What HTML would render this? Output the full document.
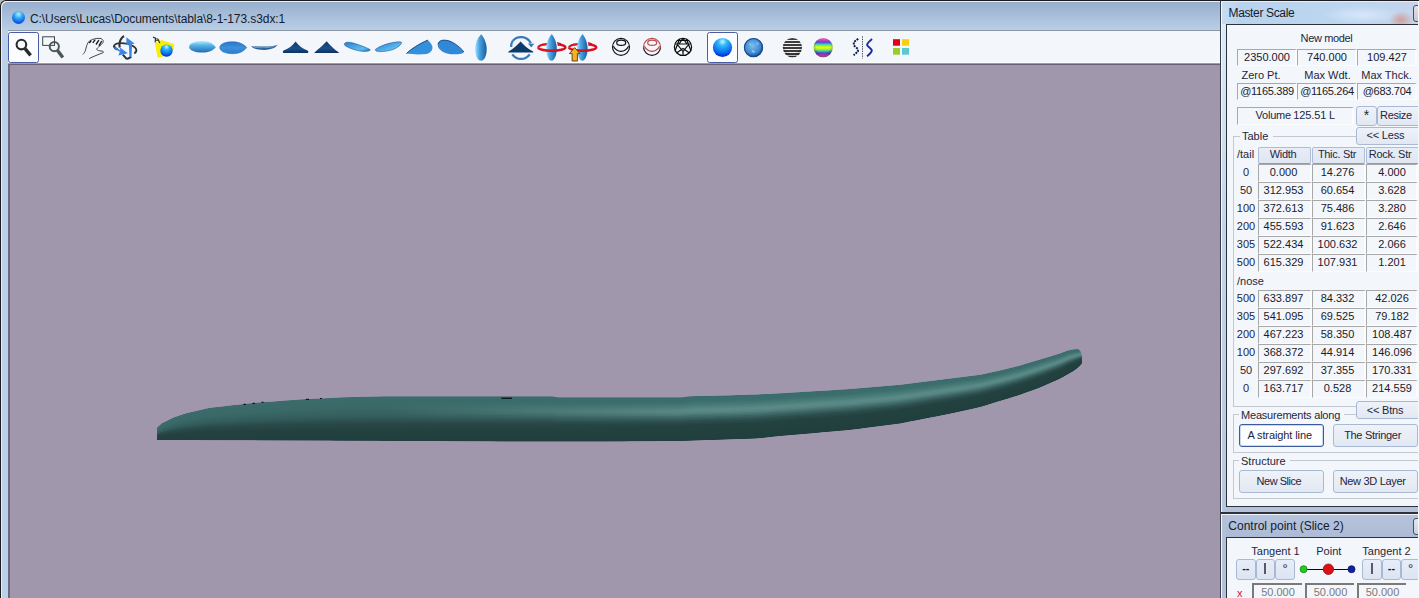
<!DOCTYPE html>
<html><head><meta charset="utf-8">
<style>
html,body{margin:0;padding:0;}
body{width:1419px;height:598px;overflow:hidden;position:relative;background:#bad1e9;font-family:"Liberation Sans",sans-serif;}
.t{position:absolute;white-space:pre;font-family:"Liberation Sans",sans-serif;}
</style></head><body>
<div style="position:absolute;left:6px;top:0px;width:1413px;height:1px;background:#1c1c1c"></div>
<div style="position:absolute;left:0px;top:6px;width:1px;height:592px;background:#1c1c1c"></div>
<div style="position:absolute;left:6px;top:1px;width:1215px;height:1px;background:#e9f0f8"></div>
<div style="position:absolute;left:1px;top:6px;width:1px;height:592px;background:#e9f0f8"></div>
<div style="position:absolute;left:2px;top:30px;width:7px;height:568px;background:#bad1e9"></div>
<div style="position:absolute;left:8px;top:30px;width:1212px;height:1px;background:#8c96a2"></div>
<div style="position:absolute;left:8px;top:31px;width:1212px;height:32px;background:#f3f6fb"></div>
<div style="position:absolute;left:8px;top:62px;width:1212px;height:1px;background:#fbfdff"></div>
<div style="position:absolute;left:8px;top:63px;width:1212px;height:1px;background:#9c9ca6"></div>
<div style="position:absolute;left:8px;top:64px;width:1212px;height:1px;background:#666272"></div>
<div style="position:absolute;left:8px;top:65px;width:2px;height:533px;background:#6e6a7a"></div>
<div style="position:absolute;left:10px;top:65px;width:1210px;height:533px;background:#a097ad"></div>
<div style="position:absolute;left:0px;top:0px;width:8px;height:8px;background:#bdbdbd"></div>
<div style="position:absolute;left:2px;top:2px;width:1218px;height:28px;background:linear-gradient(#97afcd,#b9cee7);border-top-left-radius:5px"></div>
<div style="position:absolute;left:0px;top:0px;width:14px;height:14px;border-top-left-radius:6px;border-top:1px solid #1c1c1c;border-left:1px solid #1c1c1c;box-sizing:border-box;box-shadow:inset 1px 1px 0 #e9f0f8"></div>
<div style="position:absolute;left:12px;top:11px;width:13px;height:13px;border-radius:50%;background:radial-gradient(circle at 50% 25%,#b8f0ff 0,#2ea8f5 35%,#0a52e6 75%,#0630b0 100%)"></div>
<div class="t" style="left:30.0px;top:13.0px;font-size:12px;line-height:12px;color:#141c2a;letter-spacing:-0.08px;">C:\Users\Lucas\Documents\tabla\8-1-173.s3dx:1</div>
<div style="position:absolute;left:1220px;top:1px;width:1px;height:597px;background:#3a3f4a"></div>
<div style="position:absolute;left:1221px;top:1px;width:198px;height:1px;background:#e6eef8"></div>
<div style="position:absolute;left:1221px;top:2px;width:1px;height:596px;background:#f4f8fc"></div>
<div style="position:absolute;left:1222px;top:2px;width:197px;height:22px;background:radial-gradient(ellipse 12px 9px at 179px 18px,rgba(214,150,140,0.85),rgba(214,150,140,0) 100%),radial-gradient(ellipse 40px 9px at 140px 13px,rgba(225,240,255,0.7),rgba(225,240,255,0) 100%),linear-gradient(90deg,#c8dcf2 0,#b9d3ee 10%,#bcd6f0 60%,#c4d4ec 100%)"></div>
<div style="position:absolute;left:1222px;top:24px;width:4px;height:489px;background:linear-gradient(#dcebf8 0,#c4d6ec 40%,#b6c6de 100%)"></div>
<div style="position:absolute;left:1226px;top:506px;width:193px;height:6px;background:#b4c2dc"></div>
<div style="position:absolute;left:1221px;top:512px;width:198px;height:2px;background:#2e323c"></div>
<div style="position:absolute;left:1221px;top:514px;width:198px;height:1px;background:#f0f4fa"></div>
<div style="position:absolute;left:1413px;top:5px;width:12px;height:15px;border:1px solid #4a505a;border-radius:3px;background:linear-gradient(#e6e0ea,#d0c4d0)"></div>
<div class="t" style="left:1228.5px;top:6.6px;font-size:12px;line-height:12px;color:#141c2a;letter-spacing:-0.35px;">Master Scale</div>
<div style="position:absolute;left:1226px;top:24px;width:193px;height:483px;background:#f3f6fb;border-top:1px solid #2c3038;border-left:1px solid #2c3038;border-bottom:1px solid #2c3038;box-sizing:border-box"></div>
<div style="position:absolute;left:1418px;top:25px;width:1px;height:481px;background:#fbfcfe"></div>
<div class="t" style="left:1286.5px;top:32.7px;width:80px;text-align:center;font-size:11px;line-height:11px;color:#1e2640;letter-spacing:-0.35px;">New model</div>
<div style="position:absolute;left:1237px;top:49px;width:60px;height:17px;background:#f3f6fb;border-top:1px solid #a8a8a8;border-left:1px solid #a8a8a8;border-right:2px solid #fbfcfe;border-bottom:1px solid #fbfcfe;box-sizing:border-box"></div>
<div class="t" style="left:1234.0px;top:51.7px;width:66px;text-align:center;font-size:11px;line-height:11px;color:#1a1a2a;letter-spacing:0px;">2350.000</div>
<div style="position:absolute;left:1297px;top:49px;width:60px;height:17px;background:#f3f6fb;border-top:1px solid #a8a8a8;border-left:1px solid #a8a8a8;border-right:2px solid #fbfcfe;border-bottom:1px solid #fbfcfe;box-sizing:border-box"></div>
<div class="t" style="left:1294.0px;top:51.7px;width:66px;text-align:center;font-size:11px;line-height:11px;color:#1a1a2a;letter-spacing:0px;">740.000</div>
<div style="position:absolute;left:1357px;top:49px;width:60px;height:17px;background:#f3f6fb;border-top:1px solid #a8a8a8;border-left:1px solid #a8a8a8;border-right:2px solid #fbfcfe;border-bottom:1px solid #fbfcfe;box-sizing:border-box"></div>
<div class="t" style="left:1354.0px;top:51.7px;width:66px;text-align:center;font-size:11px;line-height:11px;color:#1a1a2a;letter-spacing:0px;">109.427</div>
<div class="t" style="left:1231.0px;top:69.7px;width:60px;text-align:center;font-size:11px;line-height:11px;color:#1e2640;letter-spacing:0px;">Zero Pt.</div>
<div class="t" style="left:1297.5px;top:69.7px;width:60px;text-align:center;font-size:11px;line-height:11px;color:#1e2640;letter-spacing:0px;">Max Wdt.</div>
<div class="t" style="left:1356.5px;top:69.7px;width:60px;text-align:center;font-size:11px;line-height:11px;color:#1e2640;letter-spacing:0px;">Max Thck.</div>
<div style="position:absolute;left:1237px;top:83px;width:60px;height:17px;background:#f3f6fb;border-top:1px solid #a8a8a8;border-left:1px solid #a8a8a8;border-right:2px solid #fbfcfe;border-bottom:1px solid #fbfcfe;box-sizing:border-box"></div>
<div class="t" style="left:1234.0px;top:85.7px;width:66px;text-align:center;font-size:11px;line-height:11px;color:#1a1a2a;letter-spacing:-0.3px;">@1165.389</div>
<div style="position:absolute;left:1297px;top:83px;width:60px;height:17px;background:#f3f6fb;border-top:1px solid #a8a8a8;border-left:1px solid #a8a8a8;border-right:2px solid #fbfcfe;border-bottom:1px solid #fbfcfe;box-sizing:border-box"></div>
<div class="t" style="left:1294.0px;top:85.7px;width:66px;text-align:center;font-size:11px;line-height:11px;color:#1a1a2a;letter-spacing:-0.3px;">@1165.264</div>
<div style="position:absolute;left:1357px;top:83px;width:60px;height:17px;background:#f3f6fb;border-top:1px solid #a8a8a8;border-left:1px solid #a8a8a8;border-right:2px solid #fbfcfe;border-bottom:1px solid #fbfcfe;box-sizing:border-box"></div>
<div class="t" style="left:1354.0px;top:85.7px;width:66px;text-align:center;font-size:11px;line-height:11px;color:#1a1a2a;letter-spacing:-0.3px;">@683.704</div>
<div style="position:absolute;left:1237px;top:107px;width:117px;height:18px;background:#f3f6fb;border-top:1px solid #a8a8a8;border-left:1px solid #a8a8a8;border-right:2px solid #fbfcfe;border-bottom:1px solid #fbfcfe;box-sizing:border-box"></div>
<div class="t" style="left:1255.5px;top:109.7px;font-size:11px;line-height:11px;color:#1e2640;letter-spacing:-0.2px;">Volume</div>
<div class="t" style="left:1293.3px;top:109.7px;font-size:11px;line-height:11px;color:#1e2640;letter-spacing:-0.1px;">125.51</div>
<div class="t" style="left:1329.0px;top:109.7px;font-size:11px;line-height:11px;color:#1e2640;letter-spacing:0px;">L</div>
<div style="position:absolute;left:1356px;top:106px;width:21px;height:20px;background:linear-gradient(#eef2f9,#e2e8f2);border:1px solid #a9b9d3;border-radius:3px;box-sizing:border-box"></div>
<div class="t" style="left:1356.5px;top:108.2px;width:20px;text-align:center;font-size:14px;line-height:14px;color:#1e2640;letter-spacing:0px;">*</div>
<div style="position:absolute;left:1377px;top:106px;width:45px;height:20px;background:linear-gradient(#eef2f9,#e2e8f2);border:1px solid #a9b9d3;border-radius:3px;box-sizing:border-box"></div>
<div class="t" style="left:1380.0px;top:109.9px;font-size:11px;line-height:11px;color:#1e2640;letter-spacing:-0.3px;">Resize</div>
<div style="position:absolute;left:1356px;top:127px;width:66px;height:18px;background:linear-gradient(#eef2f9,#e2e8f2);border:1px solid #a9b9d3;border-radius:3px;box-sizing:border-box"></div>
<div class="t" style="left:1366.5px;top:129.9px;font-size:11px;line-height:11px;color:#1e2640;letter-spacing:-0.2px;">&lt;&lt; Less</div>
<div style="position:absolute;left:1233px;top:136px;width:186px;height:271px;border:1px solid #c4c8d0;border-right:none;box-sizing:border-box"></div>
<div style="position:absolute;left:1240px;top:130px;width:33px;height:12px;background:#f3f6fb"></div>
<div class="t" style="left:1242.0px;top:131.2px;font-size:11px;line-height:11px;color:#1e2640;letter-spacing:0px;">Table</div>
<div style="position:absolute;left:1356px;top:127px;width:66px;height:18px;background:#f3f6fb"></div>
<div style="position:absolute;left:1356px;top:127px;width:66px;height:18px;background:linear-gradient(#eef2f9,#e2e8f2);border:1px solid #a9b9d3;border-radius:3px;box-sizing:border-box"></div>
<div class="t" style="left:1366.5px;top:129.9px;font-size:11px;line-height:11px;color:#1e2640;letter-spacing:-0.2px;">&lt;&lt; Less</div>
<div class="t" style="left:1237.0px;top:148.7px;font-size:11px;line-height:11px;color:#1e2640;letter-spacing:0px;">/tail</div>
<div style="position:absolute;left:1258px;top:147px;width:53px;height:17px;background:linear-gradient(#e8eef8,#dfe6f2);border:1px solid #b0bcd4;border-bottom:1px solid #8d9ab4;border-radius:2px;box-sizing:border-box"></div>
<div class="t" style="left:1253.0px;top:148.7px;width:60px;text-align:center;font-size:11px;line-height:11px;color:#1e2640;letter-spacing:-0.3px;">Width</div>
<div style="position:absolute;left:1312px;top:147px;width:53px;height:17px;background:linear-gradient(#e8eef8,#dfe6f2);border:1px solid #b0bcd4;border-bottom:1px solid #8d9ab4;border-radius:2px;box-sizing:border-box"></div>
<div class="t" style="left:1307.0px;top:148.7px;width:60px;text-align:center;font-size:11px;line-height:11px;color:#1e2640;letter-spacing:-0.3px;">Thic. Str</div>
<div style="position:absolute;left:1366px;top:147px;width:56px;height:17px;background:linear-gradient(#e8eef8,#dfe6f2);border:1px solid #b0bcd4;border-bottom:1px solid #8d9ab4;border-radius:2px;box-sizing:border-box"></div>
<div class="t" style="left:1360.0px;top:148.7px;width:60px;text-align:center;font-size:11px;line-height:11px;color:#1e2640;letter-spacing:-0.3px;">Rock. Str</div>
<div class="t" style="left:1234.0px;top:166.7px;width:24px;text-align:center;font-size:11px;line-height:11px;color:#1e2640;letter-spacing:0px;">0</div>
<div style="position:absolute;left:1258px;top:164px;width:54px;height:18px;background:#f3f6fb;border-top:1px solid #a8a8a8;border-left:1px solid #a8a8a8;border-right:2px solid #fbfcfe;border-bottom:1px solid #fbfcfe;box-sizing:border-box"></div>
<div class="t" style="left:1253.5px;top:166.7px;width:60px;text-align:center;font-size:11px;line-height:11px;color:#1a1a2a;letter-spacing:0px;">0.000</div>
<div style="position:absolute;left:1312px;top:164px;width:54px;height:18px;background:#f3f6fb;border-top:1px solid #a8a8a8;border-left:1px solid #a8a8a8;border-right:2px solid #fbfcfe;border-bottom:1px solid #fbfcfe;box-sizing:border-box"></div>
<div class="t" style="left:1307.5px;top:166.7px;width:60px;text-align:center;font-size:11px;line-height:11px;color:#1a1a2a;letter-spacing:0px;">14.276</div>
<div style="position:absolute;left:1366px;top:164px;width:52px;height:18px;background:#f3f6fb;border-top:1px solid #a8a8a8;border-left:1px solid #a8a8a8;border-right:2px solid #fbfcfe;border-bottom:1px solid #fbfcfe;box-sizing:border-box"></div>
<div class="t" style="left:1362.0px;top:166.7px;width:60px;text-align:center;font-size:11px;line-height:11px;color:#1a1a2a;letter-spacing:0px;">4.000</div>
<div class="t" style="left:1234.0px;top:184.7px;width:24px;text-align:center;font-size:11px;line-height:11px;color:#1e2640;letter-spacing:0px;">50</div>
<div style="position:absolute;left:1258px;top:182px;width:54px;height:18px;background:#f3f6fb;border-top:1px solid #a8a8a8;border-left:1px solid #a8a8a8;border-right:2px solid #fbfcfe;border-bottom:1px solid #fbfcfe;box-sizing:border-box"></div>
<div class="t" style="left:1253.5px;top:184.7px;width:60px;text-align:center;font-size:11px;line-height:11px;color:#1a1a2a;letter-spacing:0px;">312.953</div>
<div style="position:absolute;left:1312px;top:182px;width:54px;height:18px;background:#f3f6fb;border-top:1px solid #a8a8a8;border-left:1px solid #a8a8a8;border-right:2px solid #fbfcfe;border-bottom:1px solid #fbfcfe;box-sizing:border-box"></div>
<div class="t" style="left:1307.5px;top:184.7px;width:60px;text-align:center;font-size:11px;line-height:11px;color:#1a1a2a;letter-spacing:0px;">60.654</div>
<div style="position:absolute;left:1366px;top:182px;width:52px;height:18px;background:#f3f6fb;border-top:1px solid #a8a8a8;border-left:1px solid #a8a8a8;border-right:2px solid #fbfcfe;border-bottom:1px solid #fbfcfe;box-sizing:border-box"></div>
<div class="t" style="left:1362.0px;top:184.7px;width:60px;text-align:center;font-size:11px;line-height:11px;color:#1a1a2a;letter-spacing:0px;">3.628</div>
<div class="t" style="left:1234.0px;top:202.7px;width:24px;text-align:center;font-size:11px;line-height:11px;color:#1e2640;letter-spacing:0px;">100</div>
<div style="position:absolute;left:1258px;top:200px;width:54px;height:18px;background:#f3f6fb;border-top:1px solid #a8a8a8;border-left:1px solid #a8a8a8;border-right:2px solid #fbfcfe;border-bottom:1px solid #fbfcfe;box-sizing:border-box"></div>
<div class="t" style="left:1253.5px;top:202.7px;width:60px;text-align:center;font-size:11px;line-height:11px;color:#1a1a2a;letter-spacing:0px;">372.613</div>
<div style="position:absolute;left:1312px;top:200px;width:54px;height:18px;background:#f3f6fb;border-top:1px solid #a8a8a8;border-left:1px solid #a8a8a8;border-right:2px solid #fbfcfe;border-bottom:1px solid #fbfcfe;box-sizing:border-box"></div>
<div class="t" style="left:1307.5px;top:202.7px;width:60px;text-align:center;font-size:11px;line-height:11px;color:#1a1a2a;letter-spacing:0px;">75.486</div>
<div style="position:absolute;left:1366px;top:200px;width:52px;height:18px;background:#f3f6fb;border-top:1px solid #a8a8a8;border-left:1px solid #a8a8a8;border-right:2px solid #fbfcfe;border-bottom:1px solid #fbfcfe;box-sizing:border-box"></div>
<div class="t" style="left:1362.0px;top:202.7px;width:60px;text-align:center;font-size:11px;line-height:11px;color:#1a1a2a;letter-spacing:0px;">3.280</div>
<div class="t" style="left:1234.0px;top:220.7px;width:24px;text-align:center;font-size:11px;line-height:11px;color:#1e2640;letter-spacing:0px;">200</div>
<div style="position:absolute;left:1258px;top:218px;width:54px;height:18px;background:#f3f6fb;border-top:1px solid #a8a8a8;border-left:1px solid #a8a8a8;border-right:2px solid #fbfcfe;border-bottom:1px solid #fbfcfe;box-sizing:border-box"></div>
<div class="t" style="left:1253.5px;top:220.7px;width:60px;text-align:center;font-size:11px;line-height:11px;color:#1a1a2a;letter-spacing:0px;">455.593</div>
<div style="position:absolute;left:1312px;top:218px;width:54px;height:18px;background:#f3f6fb;border-top:1px solid #a8a8a8;border-left:1px solid #a8a8a8;border-right:2px solid #fbfcfe;border-bottom:1px solid #fbfcfe;box-sizing:border-box"></div>
<div class="t" style="left:1307.5px;top:220.7px;width:60px;text-align:center;font-size:11px;line-height:11px;color:#1a1a2a;letter-spacing:0px;">91.623</div>
<div style="position:absolute;left:1366px;top:218px;width:52px;height:18px;background:#f3f6fb;border-top:1px solid #a8a8a8;border-left:1px solid #a8a8a8;border-right:2px solid #fbfcfe;border-bottom:1px solid #fbfcfe;box-sizing:border-box"></div>
<div class="t" style="left:1362.0px;top:220.7px;width:60px;text-align:center;font-size:11px;line-height:11px;color:#1a1a2a;letter-spacing:0px;">2.646</div>
<div class="t" style="left:1234.0px;top:238.7px;width:24px;text-align:center;font-size:11px;line-height:11px;color:#1e2640;letter-spacing:0px;">305</div>
<div style="position:absolute;left:1258px;top:236px;width:54px;height:18px;background:#f3f6fb;border-top:1px solid #a8a8a8;border-left:1px solid #a8a8a8;border-right:2px solid #fbfcfe;border-bottom:1px solid #fbfcfe;box-sizing:border-box"></div>
<div class="t" style="left:1253.5px;top:238.7px;width:60px;text-align:center;font-size:11px;line-height:11px;color:#1a1a2a;letter-spacing:0px;">522.434</div>
<div style="position:absolute;left:1312px;top:236px;width:54px;height:18px;background:#f3f6fb;border-top:1px solid #a8a8a8;border-left:1px solid #a8a8a8;border-right:2px solid #fbfcfe;border-bottom:1px solid #fbfcfe;box-sizing:border-box"></div>
<div class="t" style="left:1307.5px;top:238.7px;width:60px;text-align:center;font-size:11px;line-height:11px;color:#1a1a2a;letter-spacing:0px;">100.632</div>
<div style="position:absolute;left:1366px;top:236px;width:52px;height:18px;background:#f3f6fb;border-top:1px solid #a8a8a8;border-left:1px solid #a8a8a8;border-right:2px solid #fbfcfe;border-bottom:1px solid #fbfcfe;box-sizing:border-box"></div>
<div class="t" style="left:1362.0px;top:238.7px;width:60px;text-align:center;font-size:11px;line-height:11px;color:#1a1a2a;letter-spacing:0px;">2.066</div>
<div class="t" style="left:1234.0px;top:256.7px;width:24px;text-align:center;font-size:11px;line-height:11px;color:#1e2640;letter-spacing:0px;">500</div>
<div style="position:absolute;left:1258px;top:254px;width:54px;height:18px;background:#f3f6fb;border-top:1px solid #a8a8a8;border-left:1px solid #a8a8a8;border-right:2px solid #fbfcfe;border-bottom:1px solid #fbfcfe;box-sizing:border-box"></div>
<div class="t" style="left:1253.5px;top:256.7px;width:60px;text-align:center;font-size:11px;line-height:11px;color:#1a1a2a;letter-spacing:0px;">615.329</div>
<div style="position:absolute;left:1312px;top:254px;width:54px;height:18px;background:#f3f6fb;border-top:1px solid #a8a8a8;border-left:1px solid #a8a8a8;border-right:2px solid #fbfcfe;border-bottom:1px solid #fbfcfe;box-sizing:border-box"></div>
<div class="t" style="left:1307.5px;top:256.7px;width:60px;text-align:center;font-size:11px;line-height:11px;color:#1a1a2a;letter-spacing:0px;">107.931</div>
<div style="position:absolute;left:1366px;top:254px;width:52px;height:18px;background:#f3f6fb;border-top:1px solid #a8a8a8;border-left:1px solid #a8a8a8;border-right:2px solid #fbfcfe;border-bottom:1px solid #fbfcfe;box-sizing:border-box"></div>
<div class="t" style="left:1362.0px;top:256.7px;width:60px;text-align:center;font-size:11px;line-height:11px;color:#1a1a2a;letter-spacing:0px;">1.201</div>
<div class="t" style="left:1237.0px;top:276.0px;font-size:11px;line-height:11px;color:#1e2640;letter-spacing:0px;">/nose</div>
<div class="t" style="left:1234.0px;top:292.7px;width:24px;text-align:center;font-size:11px;line-height:11px;color:#1e2640;letter-spacing:0px;">500</div>
<div style="position:absolute;left:1258px;top:290px;width:54px;height:18px;background:#f3f6fb;border-top:1px solid #a8a8a8;border-left:1px solid #a8a8a8;border-right:2px solid #fbfcfe;border-bottom:1px solid #fbfcfe;box-sizing:border-box"></div>
<div class="t" style="left:1253.5px;top:292.7px;width:60px;text-align:center;font-size:11px;line-height:11px;color:#1a1a2a;letter-spacing:0px;">633.897</div>
<div style="position:absolute;left:1312px;top:290px;width:54px;height:18px;background:#f3f6fb;border-top:1px solid #a8a8a8;border-left:1px solid #a8a8a8;border-right:2px solid #fbfcfe;border-bottom:1px solid #fbfcfe;box-sizing:border-box"></div>
<div class="t" style="left:1307.5px;top:292.7px;width:60px;text-align:center;font-size:11px;line-height:11px;color:#1a1a2a;letter-spacing:0px;">84.332</div>
<div style="position:absolute;left:1366px;top:290px;width:52px;height:18px;background:#f3f6fb;border-top:1px solid #a8a8a8;border-left:1px solid #a8a8a8;border-right:2px solid #fbfcfe;border-bottom:1px solid #fbfcfe;box-sizing:border-box"></div>
<div class="t" style="left:1362.0px;top:292.7px;width:60px;text-align:center;font-size:11px;line-height:11px;color:#1a1a2a;letter-spacing:0px;">42.026</div>
<div class="t" style="left:1234.0px;top:310.7px;width:24px;text-align:center;font-size:11px;line-height:11px;color:#1e2640;letter-spacing:0px;">305</div>
<div style="position:absolute;left:1258px;top:308px;width:54px;height:18px;background:#f3f6fb;border-top:1px solid #a8a8a8;border-left:1px solid #a8a8a8;border-right:2px solid #fbfcfe;border-bottom:1px solid #fbfcfe;box-sizing:border-box"></div>
<div class="t" style="left:1253.5px;top:310.7px;width:60px;text-align:center;font-size:11px;line-height:11px;color:#1a1a2a;letter-spacing:0px;">541.095</div>
<div style="position:absolute;left:1312px;top:308px;width:54px;height:18px;background:#f3f6fb;border-top:1px solid #a8a8a8;border-left:1px solid #a8a8a8;border-right:2px solid #fbfcfe;border-bottom:1px solid #fbfcfe;box-sizing:border-box"></div>
<div class="t" style="left:1307.5px;top:310.7px;width:60px;text-align:center;font-size:11px;line-height:11px;color:#1a1a2a;letter-spacing:0px;">69.525</div>
<div style="position:absolute;left:1366px;top:308px;width:52px;height:18px;background:#f3f6fb;border-top:1px solid #a8a8a8;border-left:1px solid #a8a8a8;border-right:2px solid #fbfcfe;border-bottom:1px solid #fbfcfe;box-sizing:border-box"></div>
<div class="t" style="left:1362.0px;top:310.7px;width:60px;text-align:center;font-size:11px;line-height:11px;color:#1a1a2a;letter-spacing:0px;">79.182</div>
<div class="t" style="left:1234.0px;top:328.7px;width:24px;text-align:center;font-size:11px;line-height:11px;color:#1e2640;letter-spacing:0px;">200</div>
<div style="position:absolute;left:1258px;top:326px;width:54px;height:18px;background:#f3f6fb;border-top:1px solid #a8a8a8;border-left:1px solid #a8a8a8;border-right:2px solid #fbfcfe;border-bottom:1px solid #fbfcfe;box-sizing:border-box"></div>
<div class="t" style="left:1253.5px;top:328.7px;width:60px;text-align:center;font-size:11px;line-height:11px;color:#1a1a2a;letter-spacing:0px;">467.223</div>
<div style="position:absolute;left:1312px;top:326px;width:54px;height:18px;background:#f3f6fb;border-top:1px solid #a8a8a8;border-left:1px solid #a8a8a8;border-right:2px solid #fbfcfe;border-bottom:1px solid #fbfcfe;box-sizing:border-box"></div>
<div class="t" style="left:1307.5px;top:328.7px;width:60px;text-align:center;font-size:11px;line-height:11px;color:#1a1a2a;letter-spacing:0px;">58.350</div>
<div style="position:absolute;left:1366px;top:326px;width:52px;height:18px;background:#f3f6fb;border-top:1px solid #a8a8a8;border-left:1px solid #a8a8a8;border-right:2px solid #fbfcfe;border-bottom:1px solid #fbfcfe;box-sizing:border-box"></div>
<div class="t" style="left:1362.0px;top:328.7px;width:60px;text-align:center;font-size:11px;line-height:11px;color:#1a1a2a;letter-spacing:0px;">108.487</div>
<div class="t" style="left:1234.0px;top:346.7px;width:24px;text-align:center;font-size:11px;line-height:11px;color:#1e2640;letter-spacing:0px;">100</div>
<div style="position:absolute;left:1258px;top:344px;width:54px;height:18px;background:#f3f6fb;border-top:1px solid #a8a8a8;border-left:1px solid #a8a8a8;border-right:2px solid #fbfcfe;border-bottom:1px solid #fbfcfe;box-sizing:border-box"></div>
<div class="t" style="left:1253.5px;top:346.7px;width:60px;text-align:center;font-size:11px;line-height:11px;color:#1a1a2a;letter-spacing:0px;">368.372</div>
<div style="position:absolute;left:1312px;top:344px;width:54px;height:18px;background:#f3f6fb;border-top:1px solid #a8a8a8;border-left:1px solid #a8a8a8;border-right:2px solid #fbfcfe;border-bottom:1px solid #fbfcfe;box-sizing:border-box"></div>
<div class="t" style="left:1307.5px;top:346.7px;width:60px;text-align:center;font-size:11px;line-height:11px;color:#1a1a2a;letter-spacing:0px;">44.914</div>
<div style="position:absolute;left:1366px;top:344px;width:52px;height:18px;background:#f3f6fb;border-top:1px solid #a8a8a8;border-left:1px solid #a8a8a8;border-right:2px solid #fbfcfe;border-bottom:1px solid #fbfcfe;box-sizing:border-box"></div>
<div class="t" style="left:1362.0px;top:346.7px;width:60px;text-align:center;font-size:11px;line-height:11px;color:#1a1a2a;letter-spacing:0px;">146.096</div>
<div class="t" style="left:1234.0px;top:364.7px;width:24px;text-align:center;font-size:11px;line-height:11px;color:#1e2640;letter-spacing:0px;">50</div>
<div style="position:absolute;left:1258px;top:362px;width:54px;height:18px;background:#f3f6fb;border-top:1px solid #a8a8a8;border-left:1px solid #a8a8a8;border-right:2px solid #fbfcfe;border-bottom:1px solid #fbfcfe;box-sizing:border-box"></div>
<div class="t" style="left:1253.5px;top:364.7px;width:60px;text-align:center;font-size:11px;line-height:11px;color:#1a1a2a;letter-spacing:0px;">297.692</div>
<div style="position:absolute;left:1312px;top:362px;width:54px;height:18px;background:#f3f6fb;border-top:1px solid #a8a8a8;border-left:1px solid #a8a8a8;border-right:2px solid #fbfcfe;border-bottom:1px solid #fbfcfe;box-sizing:border-box"></div>
<div class="t" style="left:1307.5px;top:364.7px;width:60px;text-align:center;font-size:11px;line-height:11px;color:#1a1a2a;letter-spacing:0px;">37.355</div>
<div style="position:absolute;left:1366px;top:362px;width:52px;height:18px;background:#f3f6fb;border-top:1px solid #a8a8a8;border-left:1px solid #a8a8a8;border-right:2px solid #fbfcfe;border-bottom:1px solid #fbfcfe;box-sizing:border-box"></div>
<div class="t" style="left:1362.0px;top:364.7px;width:60px;text-align:center;font-size:11px;line-height:11px;color:#1a1a2a;letter-spacing:0px;">170.331</div>
<div class="t" style="left:1234.0px;top:382.7px;width:24px;text-align:center;font-size:11px;line-height:11px;color:#1e2640;letter-spacing:0px;">0</div>
<div style="position:absolute;left:1258px;top:380px;width:54px;height:18px;background:#f3f6fb;border-top:1px solid #a8a8a8;border-left:1px solid #a8a8a8;border-right:2px solid #fbfcfe;border-bottom:1px solid #fbfcfe;box-sizing:border-box"></div>
<div class="t" style="left:1253.5px;top:382.7px;width:60px;text-align:center;font-size:11px;line-height:11px;color:#1a1a2a;letter-spacing:0px;">163.717</div>
<div style="position:absolute;left:1312px;top:380px;width:54px;height:18px;background:#f3f6fb;border-top:1px solid #a8a8a8;border-left:1px solid #a8a8a8;border-right:2px solid #fbfcfe;border-bottom:1px solid #fbfcfe;box-sizing:border-box"></div>
<div class="t" style="left:1307.5px;top:382.7px;width:60px;text-align:center;font-size:11px;line-height:11px;color:#1a1a2a;letter-spacing:0px;">0.528</div>
<div style="position:absolute;left:1366px;top:380px;width:52px;height:18px;background:#f3f6fb;border-top:1px solid #a8a8a8;border-left:1px solid #a8a8a8;border-right:2px solid #fbfcfe;border-bottom:1px solid #fbfcfe;box-sizing:border-box"></div>
<div class="t" style="left:1362.0px;top:382.7px;width:60px;text-align:center;font-size:11px;line-height:11px;color:#1a1a2a;letter-spacing:0px;">214.559</div>
<div style="position:absolute;left:1233px;top:414px;width:186px;height:39px;border:1px solid #c4c8d0;border-right:none;box-sizing:border-box"></div>
<div style="position:absolute;left:1239px;top:408px;width:105px;height:12px;background:#f3f6fb"></div>
<div class="t" style="left:1241.0px;top:409.7px;font-size:11px;line-height:11px;color:#1e2640;letter-spacing:-0.2px;">Measurements along</div>
<div style="position:absolute;left:1356px;top:401px;width:66px;height:18px;background:linear-gradient(#eef2f9,#e2e8f2);border:1px solid #a9b9d3;border-radius:3px;box-sizing:border-box"></div>
<div class="t" style="left:1366.8px;top:404.7px;font-size:11px;line-height:11px;color:#1e2640;letter-spacing:-0.2px;">&lt;&lt; Btns</div>
<div style="position:absolute;left:1239px;top:424px;width:85px;height:23px;background:#fdfeff;border:1px solid #3c5a9c;border-radius:3px;box-sizing:border-box;box-shadow:inset 0 0 0 1px #c8d8f0"></div>
<div class="t" style="left:1234.7px;top:429.7px;width:90px;text-align:center;font-size:11px;line-height:11px;color:#1e2640;letter-spacing:-0.1px;">A straight line</div>
<div style="position:absolute;left:1333px;top:424px;width:85px;height:23px;background:linear-gradient(#eef2f9,#e2e8f2);border:1px solid #a9b9d3;border-radius:3px;box-sizing:border-box"></div>
<div class="t" style="left:1327.6px;top:429.7px;width:90px;text-align:center;font-size:11px;line-height:11px;color:#1e2640;letter-spacing:-0.3px;">The Stringer</div>
<div style="position:absolute;left:1233px;top:460px;width:186px;height:39px;border:1px solid #c4c8d0;border-right:none;box-sizing:border-box"></div>
<div style="position:absolute;left:1239px;top:454px;width:51px;height:12px;background:#f3f6fb"></div>
<div class="t" style="left:1241.0px;top:456.2px;font-size:11px;line-height:11px;color:#1e2640;letter-spacing:0px;">Structure</div>
<div style="position:absolute;left:1239px;top:470px;width:85px;height:23px;background:linear-gradient(#eef2f9,#e2e8f2);border:1px solid #a9b9d3;border-radius:3px;box-sizing:border-box"></div>
<div class="t" style="left:1233.8px;top:475.7px;width:90px;text-align:center;font-size:11px;line-height:11px;color:#1e2640;letter-spacing:-0.5px;">New Slice</div>
<div style="position:absolute;left:1333px;top:470px;width:85px;height:23px;background:linear-gradient(#eef2f9,#e2e8f2);border:1px solid #a9b9d3;border-radius:3px;box-sizing:border-box"></div>
<div class="t" style="left:1327.7px;top:475.7px;width:90px;text-align:center;font-size:11px;line-height:11px;color:#1e2640;letter-spacing:-0.3px;">New 3D Layer</div>
<div style="position:absolute;left:1222px;top:515px;width:197px;height:22px;background:linear-gradient(#b6c3dc,#aebbd6)"></div>
<div style="position:absolute;left:1222px;top:515px;width:4px;height:83px;background:#b3c0da"></div>
<div style="position:absolute;left:1413px;top:518px;width:12px;height:15px;border:1px solid #4a505a;border-radius:3px;background:linear-gradient(#e4e8f0,#c8d0e0)"></div>
<div class="t" style="left:1228.3px;top:519.6px;font-size:12px;line-height:12px;color:#141c2a;letter-spacing:0px;">Control point (Slice 2)</div>
<div style="position:absolute;left:1226px;top:537px;width:193px;height:61px;background:#f3f6fb;border-top:1px solid #2c3038;border-left:1px solid #2c3038;box-sizing:border-box"></div>
<div style="position:absolute;left:1418px;top:538px;width:1px;height:60px;background:#fbfcfe"></div>
<div class="t" style="left:1245.5px;top:545.7px;width:60px;text-align:center;font-size:11px;line-height:11px;color:#1e2640;letter-spacing:0px;">Tangent 1</div>
<div class="t" style="left:1308.8px;top:545.7px;width:40px;text-align:center;font-size:11px;line-height:11px;color:#1e2640;letter-spacing:0px;">Point</div>
<div class="t" style="left:1356.5px;top:545.7px;width:60px;text-align:center;font-size:11px;line-height:11px;color:#1e2640;letter-spacing:0px;">Tangent 2</div>
<div style="position:absolute;left:1236px;top:559px;width:19.5px;height:21px;background:linear-gradient(#e8eef8,#dce4f2);border:1px solid #a9b9d3;border-radius:3px;box-sizing:border-box"></div>
<div class="t" style="left:1235.8px;top:562.7px;width:20px;text-align:center;font-size:11px;line-height:11px;color:#1a1a2a;letter-spacing:0px;font-weight:bold">--</div>
<div style="position:absolute;left:1255.5px;top:559px;width:19.5px;height:21px;background:linear-gradient(#e8eef8,#dce4f2);border:1px solid #a9b9d3;border-radius:3px;box-sizing:border-box"></div>
<div style="position:absolute;left:1264px;top:563px;width:2px;height:11px;background:#585868"></div>
<div style="position:absolute;left:1275px;top:559px;width:20px;height:21px;background:linear-gradient(#e8eef8,#dce4f2);border:1px solid #a9b9d3;border-radius:3px;box-sizing:border-box"></div>
<div class="t" style="left:1275.0px;top:562.7px;width:20px;text-align:center;font-size:11px;line-height:11px;color:#1a1a2a;letter-spacing:0px;font-size:13px">°</div>
<div style="position:absolute;left:1362px;top:559px;width:20px;height:21px;background:linear-gradient(#e8eef8,#dce4f2);border:1px solid #a9b9d3;border-radius:3px;box-sizing:border-box"></div>
<div style="position:absolute;left:1371px;top:563px;width:2px;height:11px;background:#585868"></div>
<div style="position:absolute;left:1382px;top:559px;width:19px;height:21px;background:linear-gradient(#e8eef8,#dce4f2);border:1px solid #a9b9d3;border-radius:3px;box-sizing:border-box"></div>
<div class="t" style="left:1381.5px;top:562.7px;width:20px;text-align:center;font-size:11px;line-height:11px;color:#1a1a2a;letter-spacing:0px;font-weight:bold">--</div>
<div style="position:absolute;left:1401px;top:559px;width:19px;height:21px;background:linear-gradient(#e8eef8,#dce4f2);border:1px solid #a9b9d3;border-radius:3px;box-sizing:border-box"></div>
<div class="t" style="left:1400.5px;top:562.7px;width:20px;text-align:center;font-size:11px;line-height:11px;color:#1a1a2a;letter-spacing:0px;font-size:13px">°</div>
<svg width="60" height="16" style="position:absolute;left:1298px;top:561px">
<line x1="5.6" y1="8.5" x2="53.5" y2="8.5" stroke="#0a0a0a" stroke-width="1.1"/>
<circle cx="5.6" cy="8.2" r="3.5" fill="#22cc22" stroke="#118811" stroke-width="0.8"/>
<circle cx="30.4" cy="8.2" r="5.2" fill="#dd1111" stroke="#881111" stroke-width="0.8"/>
<circle cx="53.5" cy="8.2" r="3.5" fill="#1122aa" stroke="#0a1066" stroke-width="0.8"/>
</svg>
<div style="position:absolute;left:1252px;top:583px;width:50px;height:17px;background:#f3f6fb;border-top:2px solid #7a7a7a;border-left:2px solid #7a7a7a;box-sizing:border-box"></div>
<div class="t" style="left:1253.0px;top:586.7px;width:50px;text-align:center;font-size:11px;line-height:11px;color:#7a7a7a;letter-spacing:0px;">50.000</div>
<div style="position:absolute;left:1305px;top:583px;width:49px;height:17px;background:#f3f6fb;border-top:2px solid #7a7a7a;border-left:2px solid #7a7a7a;box-sizing:border-box"></div>
<div class="t" style="left:1305.5px;top:586.7px;width:50px;text-align:center;font-size:11px;line-height:11px;color:#7a7a7a;letter-spacing:0px;">50.000</div>
<div style="position:absolute;left:1357px;top:583px;width:49px;height:17px;background:#f3f6fb;border-top:2px solid #7a7a7a;border-left:2px solid #7a7a7a;box-sizing:border-box"></div>
<div class="t" style="left:1357.5px;top:586.7px;width:50px;text-align:center;font-size:11px;line-height:11px;color:#7a7a7a;letter-spacing:0px;">50.000</div>
<div class="t" style="left:1237.0px;top:587.7px;font-size:11px;line-height:11px;color:#cc2030;letter-spacing:0px;">x</div>
<div style="position:absolute;left:1418px;top:1px;width:1px;height:597px;background:#f6f8fb"></div>
<svg width="1419" height="598" style="position:absolute;left:0;top:0">
<defs><linearGradient id="g0" gradientUnits="userSpaceOnUse" x1="380" y1="0" x2="700" y2="0"><stop offset="0" stop-color="#3b6b6a"/><stop offset="1" stop-color="#3a6c6b"/></linearGradient><linearGradient id="g1" gradientUnits="userSpaceOnUse" x1="380" y1="0" x2="700" y2="0"><stop offset="0" stop-color="#3b6b6a"/><stop offset="1" stop-color="#3b6d6c"/></linearGradient><linearGradient id="g2" gradientUnits="userSpaceOnUse" x1="380" y1="0" x2="700" y2="0"><stop offset="0" stop-color="#3b6a69"/><stop offset="1" stop-color="#3b6d6c"/></linearGradient><linearGradient id="g3" gradientUnits="userSpaceOnUse" x1="380" y1="0" x2="700" y2="0"><stop offset="0" stop-color="#3a6a69"/><stop offset="1" stop-color="#3d6f6e"/></linearGradient><linearGradient id="g4" gradientUnits="userSpaceOnUse" x1="380" y1="0" x2="700" y2="0"><stop offset="0" stop-color="#3a6a69"/><stop offset="1" stop-color="#427472"/></linearGradient><linearGradient id="g5" gradientUnits="userSpaceOnUse" x1="380" y1="0" x2="700" y2="0"><stop offset="0" stop-color="#3a6968"/><stop offset="1" stop-color="#477977"/></linearGradient><linearGradient id="g6" gradientUnits="userSpaceOnUse" x1="380" y1="0" x2="700" y2="0"><stop offset="0" stop-color="#3a6968"/><stop offset="1" stop-color="#4c7e7c"/></linearGradient><linearGradient id="g7" gradientUnits="userSpaceOnUse" x1="380" y1="0" x2="700" y2="0"><stop offset="0" stop-color="#396867"/><stop offset="1" stop-color="#538482"/></linearGradient><linearGradient id="g8" gradientUnits="userSpaceOnUse" x1="380" y1="0" x2="700" y2="0"><stop offset="0" stop-color="#386665"/><stop offset="1" stop-color="#5a8a88"/></linearGradient><linearGradient id="g9" gradientUnits="userSpaceOnUse" x1="380" y1="0" x2="700" y2="0"><stop offset="0" stop-color="#376463"/><stop offset="1" stop-color="#598984"/></linearGradient><linearGradient id="g10" gradientUnits="userSpaceOnUse" x1="380" y1="0" x2="700" y2="0"><stop offset="0" stop-color="#366260"/><stop offset="1" stop-color="#56847e"/></linearGradient><linearGradient id="g11" gradientUnits="userSpaceOnUse" x1="380" y1="0" x2="700" y2="0"><stop offset="0" stop-color="#345f5e"/><stop offset="1" stop-color="#4d7976"/></linearGradient><linearGradient id="g12" gradientUnits="userSpaceOnUse" x1="380" y1="0" x2="700" y2="0"><stop offset="0" stop-color="#335d5c"/><stop offset="1" stop-color="#446d6d"/></linearGradient><linearGradient id="g13" gradientUnits="userSpaceOnUse" x1="380" y1="0" x2="700" y2="0"><stop offset="0" stop-color="#315958"/><stop offset="1" stop-color="#3c6364"/></linearGradient><linearGradient id="g14" gradientUnits="userSpaceOnUse" x1="380" y1="0" x2="700" y2="0"><stop offset="0" stop-color="#2e5453"/><stop offset="1" stop-color="#355959"/></linearGradient><linearGradient id="g15" gradientUnits="userSpaceOnUse" x1="380" y1="0" x2="700" y2="0"><stop offset="0" stop-color="#2c504f"/><stop offset="1" stop-color="#2d504f"/></linearGradient><linearGradient id="g16" gradientUnits="userSpaceOnUse" x1="380" y1="0" x2="700" y2="0"><stop offset="0" stop-color="#2a4b4a"/><stop offset="1" stop-color="#294a49"/></linearGradient><linearGradient id="g17" gradientUnits="userSpaceOnUse" x1="380" y1="0" x2="700" y2="0"><stop offset="0" stop-color="#284848"/><stop offset="1" stop-color="#264644"/></linearGradient><linearGradient id="g18" gradientUnits="userSpaceOnUse" x1="380" y1="0" x2="700" y2="0"><stop offset="0" stop-color="#274645"/><stop offset="1" stop-color="#23423f"/></linearGradient><linearGradient id="g19" gradientUnits="userSpaceOnUse" x1="380" y1="0" x2="700" y2="0"><stop offset="0" stop-color="#254443"/><stop offset="1" stop-color="#23423f"/></linearGradient><linearGradient id="g20" gradientUnits="userSpaceOnUse" x1="380" y1="0" x2="700" y2="0"><stop offset="0" stop-color="#244241"/><stop offset="1" stop-color="#22413f"/></linearGradient><linearGradient id="g21" gradientUnits="userSpaceOnUse" x1="380" y1="0" x2="700" y2="0"><stop offset="0" stop-color="#234140"/><stop offset="1" stop-color="#22413e"/></linearGradient><linearGradient id="g22" gradientUnits="userSpaceOnUse" x1="380" y1="0" x2="700" y2="0"><stop offset="0" stop-color="#234140"/><stop offset="1" stop-color="#22403e"/></linearGradient><linearGradient id="g23" gradientUnits="userSpaceOnUse" x1="380" y1="0" x2="700" y2="0"><stop offset="0" stop-color="#22403f"/><stop offset="1" stop-color="#21403e"/></linearGradient><linearGradient id="g24" gradientUnits="userSpaceOnUse" x1="380" y1="0" x2="700" y2="0"><stop offset="0" stop-color="#22403f"/><stop offset="1" stop-color="#213f3e"/></linearGradient><linearGradient id="g25" gradientUnits="userSpaceOnUse" x1="380" y1="0" x2="700" y2="0"><stop offset="0" stop-color="#22403f"/><stop offset="1" stop-color="#213f3e"/></linearGradient><linearGradient id="g26" gradientUnits="userSpaceOnUse" x1="380" y1="0" x2="700" y2="0"><stop offset="0" stop-color="#213f3e"/><stop offset="1" stop-color="#203f3d"/></linearGradient><linearGradient id="g27" gradientUnits="userSpaceOnUse" x1="380" y1="0" x2="700" y2="0"><stop offset="0" stop-color="#213f3e"/><stop offset="1" stop-color="#203e3d"/></linearGradient><clipPath id="bc"><path d="M157,428 L161.7,423.3 L173.4,417.5 L185,413.4 L208.5,408 L232,405.2 L255.4,402.8 L284.7,400.5 L302,399.3 L345,397.2 L383,396.3 L554,396.3 L557,397.2 L683,397.2 L686,396.3 L720,395.6 L756,394.4 L780,393.3 L850,389 L900,384.8 L950,378.5 L980,374.7 L1000,370.5 L1020,365.4 L1040,359.4 L1060,353.4 L1070,349.6 L1078,349 L1080.3,351.4 L1082,356 L1082,363 L1079,366.8 L1073.6,371.4 L1060,378.8 L1040,387.5 L1020,394.8 L1000,400.9 L980,407.1 L950,413.7 L900,423.4 L850,429.9 L780,436 L756,438.5 L680,441 L600,441.5 L530,441.5 L300,440.5 L157,440 Z"/></clipPath></defs>
<g clip-path="url(#bc)"><path d="M150,428.0 L156,428.0 L162,423.2 L168,420.2 L174,417.3 L180,415.2 L186,413.2 L192,411.8 L198,410.4 L204,409.0 L210,407.8 L216,407.1 L222,406.4 L228,405.7 L234,405.0 L240,404.4 L246,403.8 L252,403.1 L258,402.6 L264,402.1 L270,401.7 L276,401.2 L282,400.7 L288,400.3 L294,399.9 L300,399.4 L306,399.1 L312,398.8 L318,398.5 L324,398.2 L330,397.9 L336,397.6 L342,397.3 L348,397.1 L354,397.0 L360,396.8 L366,396.7 L372,396.6 L378,396.4 L384,396.3 L390,396.3 L396,396.3 L402,396.3 L408,396.3 L414,396.3 L420,396.3 L426,396.3 L432,396.3 L438,396.3 L444,396.3 L450,396.3 L456,396.3 L462,396.3 L468,396.3 L474,396.3 L480,396.3 L486,396.3 L492,396.3 L498,396.3 L504,396.3 L510,396.3 L516,396.3 L522,396.3 L528,396.3 L534,396.3 L540,396.3 L546,396.3 L552,396.3 L558,397.2 L564,397.2 L570,397.2 L576,397.2 L582,397.2 L588,397.2 L594,397.2 L600,397.2 L606,397.2 L612,397.2 L618,397.2 L624,397.2 L630,397.2 L636,397.2 L642,397.2 L648,397.2 L654,397.2 L660,397.2 L666,397.2 L672,397.2 L678,397.2 L684,396.9 L690,396.2 L696,396.1 L702,396.0 L708,395.8 L714,395.7 L720,395.6 L726,395.4 L732,395.2 L738,395.0 L744,394.8 L750,394.6 L756,394.4 L762,394.1 L768,393.9 L774,393.6 L780,393.3 L786,392.9 L792,392.6 L798,392.2 L804,391.8 L810,391.5 L816,391.1 L822,390.7 L828,390.4 L834,390.0 L840,389.6 L846,389.2 L852,388.8 L858,388.3 L864,387.8 L870,387.3 L876,386.8 L882,386.3 L888,385.8 L894,385.3 L900,384.8 L906,384.0 L912,383.3 L918,382.5 L924,381.8 L930,381.0 L936,380.3 L942,379.5 L948,378.8 L954,378.0 L960,377.2 L966,376.5 L972,375.7 L978,375.0 L984,373.9 L990,372.6 L996,371.3 L1002,370.0 L1008,368.5 L1014,366.9 L1020,365.4 L1026,363.6 L1032,361.8 L1038,360.0 L1044,358.2 L1050,356.4 L1056,354.6 L1062,352.6 L1068,350.4 L1074,349.3 L1080,349.0 L1086,349.0 L1090,349.0 L1090,350.3 L1086,350.3 L1080,350.5 L1074,351.2 L1068,352.5 L1062,354.9 L1056,356.9 L1050,358.8 L1044,360.7 L1038,362.5 L1032,364.4 L1026,366.2 L1020,368.0 L1014,369.6 L1008,371.1 L1002,372.7 L996,374.1 L990,375.4 L984,376.7 L978,377.9 L972,378.7 L966,379.5 L960,380.3 L954,381.1 L948,381.9 L942,382.7 L936,383.5 L930,384.3 L924,385.1 L918,385.9 L912,386.7 L906,387.5 L900,388.2 L894,388.8 L888,389.3 L882,389.8 L876,390.4 L870,390.9 L864,391.4 L858,391.9 L852,392.5 L846,392.9 L840,393.3 L834,393.7 L828,394.1 L822,394.4 L816,394.8 L810,395.2 L804,395.6 L798,396.0 L792,396.3 L786,396.7 L780,397.1 L774,397.4 L768,397.7 L762,398.0 L756,398.3 L750,398.5 L744,398.7 L738,398.9 L732,399.1 L726,399.3 L720,399.5 L714,399.7 L708,399.8 L702,399.9 L696,400.1 L690,400.2 L684,400.8 L678,401.1 L672,401.1 L666,401.1 L660,401.1 L654,401.1 L648,401.1 L642,401.1 L636,401.1 L630,401.1 L624,401.1 L618,401.1 L612,401.1 L606,401.2 L600,401.2 L594,401.2 L588,401.2 L582,401.2 L576,401.2 L570,401.2 L564,401.2 L558,401.2 L552,400.3 L546,400.3 L540,400.3 L534,400.3 L528,400.3 L522,400.3 L516,400.3 L510,400.3 L504,400.3 L498,400.3 L492,400.3 L486,400.3 L480,400.3 L474,400.3 L468,400.3 L462,400.3 L456,400.3 L450,400.3 L444,400.3 L438,400.3 L432,400.3 L426,400.3 L420,400.3 L414,400.3 L408,400.3 L402,400.3 L396,400.3 L390,400.3 L384,400.3 L378,400.4 L372,400.5 L366,400.6 L360,400.8 L354,400.9 L348,401.0 L342,401.2 L336,401.5 L330,401.7 L324,402.0 L318,402.3 L312,402.5 L306,402.8 L300,403.1 L294,403.5 L288,403.9 L282,404.3 L276,404.7 L270,405.1 L264,405.5 L258,406.0 L252,406.5 L246,407.0 L240,407.6 L234,408.1 L228,408.8 L222,409.4 L216,410.1 L210,410.7 L204,411.8 L198,413.1 L192,414.3 L186,415.6 L180,417.4 L174,419.3 L168,422.0 L162,424.7 L156,429.1 L150,429.1 Z" fill="url(#g0)"/><path d="M150,428.4 L156,428.4 L162,423.8 L168,420.9 L174,418.1 L180,416.1 L186,414.1 L192,412.8 L198,411.5 L204,410.1 L210,409.0 L216,408.3 L222,407.6 L228,406.9 L234,406.3 L240,405.7 L246,405.1 L252,404.5 L258,403.9 L264,403.5 L270,403.0 L276,402.6 L282,402.1 L288,401.7 L294,401.3 L300,400.9 L306,400.6 L312,400.3 L318,400.0 L324,399.7 L330,399.5 L336,399.2 L342,398.9 L348,398.7 L354,398.5 L360,398.4 L366,398.3 L372,398.1 L378,398.0 L384,397.9 L390,397.9 L396,397.9 L402,397.9 L408,397.9 L414,397.9 L420,397.9 L426,397.9 L432,397.9 L438,397.9 L444,397.9 L450,397.9 L456,397.9 L462,397.9 L468,397.9 L474,397.9 L480,397.9 L486,397.9 L492,397.9 L498,397.9 L504,397.9 L510,397.9 L516,397.9 L522,397.9 L528,397.9 L534,397.9 L540,397.9 L546,397.9 L552,397.9 L558,398.8 L564,398.8 L570,398.8 L576,398.8 L582,398.8 L588,398.8 L594,398.8 L600,398.8 L606,398.8 L612,398.8 L618,398.8 L624,398.8 L630,398.8 L636,398.8 L642,398.8 L648,398.8 L654,398.8 L660,398.8 L666,398.8 L672,398.8 L678,398.8 L684,398.5 L690,397.8 L696,397.7 L702,397.6 L708,397.4 L714,397.3 L720,397.2 L726,397.0 L732,396.8 L738,396.6 L744,396.4 L750,396.2 L756,396.0 L762,395.7 L768,395.4 L774,395.1 L780,394.8 L786,394.5 L792,394.1 L798,393.7 L804,393.3 L810,393.0 L816,392.6 L822,392.2 L828,391.8 L834,391.5 L840,391.1 L846,390.7 L852,390.3 L858,389.8 L864,389.3 L870,388.7 L876,388.2 L882,387.7 L888,387.2 L894,386.7 L900,386.2 L906,385.4 L912,384.6 L918,383.9 L924,383.1 L930,382.3 L936,381.6 L942,380.8 L948,380.0 L954,379.2 L960,378.5 L966,377.7 L972,376.9 L978,376.1 L984,375.0 L990,373.7 L996,372.4 L1002,371.1 L1008,369.5 L1014,368.0 L1020,366.4 L1026,364.6 L1032,362.8 L1038,361.0 L1044,359.2 L1050,357.4 L1056,355.5 L1062,353.5 L1068,351.2 L1074,350.1 L1080,349.6 L1086,349.5 L1090,349.5 L1090,350.9 L1086,350.9 L1080,351.1 L1074,351.9 L1068,353.3 L1062,355.8 L1056,357.8 L1050,359.7 L1044,361.6 L1038,363.5 L1032,365.4 L1026,367.2 L1020,369.1 L1014,370.6 L1008,372.2 L1002,373.8 L996,375.2 L990,376.5 L984,377.9 L978,379.0 L972,379.9 L966,380.7 L960,381.5 L954,382.3 L948,383.2 L942,384.0 L936,384.8 L930,385.6 L924,386.4 L918,387.2 L912,388.0 L906,388.8 L900,389.6 L894,390.2 L888,390.7 L882,391.2 L876,391.8 L870,392.3 L864,392.9 L858,393.4 L852,393.9 L846,394.4 L840,394.8 L834,395.1 L828,395.5 L822,395.9 L816,396.3 L810,396.7 L804,397.1 L798,397.5 L792,397.9 L786,398.2 L780,398.6 L774,399.0 L768,399.3 L762,399.6 L756,399.9 L750,400.1 L744,400.3 L738,400.5 L732,400.7 L726,400.9 L720,401.1 L714,401.2 L708,401.4 L702,401.5 L696,401.6 L690,401.8 L684,402.4 L678,402.7 L672,402.7 L666,402.7 L660,402.7 L654,402.7 L648,402.7 L642,402.7 L636,402.7 L630,402.7 L624,402.7 L618,402.7 L612,402.7 L606,402.7 L600,402.7 L594,402.7 L588,402.7 L582,402.7 L576,402.7 L570,402.7 L564,402.7 L558,402.7 L552,401.9 L546,401.9 L540,401.9 L534,401.9 L528,401.9 L522,401.9 L516,401.9 L510,401.9 L504,401.9 L498,401.9 L492,401.9 L486,401.9 L480,401.9 L474,401.9 L468,401.9 L462,401.9 L456,401.9 L450,401.9 L444,401.9 L438,401.9 L432,401.9 L426,401.9 L420,401.9 L414,401.9 L408,401.9 L402,401.9 L396,401.9 L390,401.9 L384,401.9 L378,402.0 L372,402.1 L366,402.2 L360,402.3 L354,402.5 L348,402.6 L342,402.8 L336,403.0 L330,403.3 L324,403.5 L318,403.8 L312,404.0 L306,404.3 L300,404.6 L294,404.9 L288,405.3 L282,405.7 L276,406.1 L270,406.5 L264,406.9 L258,407.3 L252,407.8 L246,408.3 L240,408.9 L234,409.4 L228,410.0 L222,410.6 L216,411.2 L210,411.9 L204,412.9 L198,414.1 L192,415.3 L186,416.5 L180,418.3 L174,420.1 L168,422.7 L162,425.3 L156,429.5 L150,429.5 Z" fill="url(#g1)"/><path d="M150,428.9 L156,428.9 L162,424.4 L168,421.6 L174,418.9 L180,416.9 L186,415.1 L192,413.8 L198,412.5 L204,411.3 L210,410.1 L216,409.5 L222,408.8 L228,408.1 L234,407.5 L240,406.9 L246,406.4 L252,405.8 L258,405.3 L264,404.9 L270,404.4 L276,404.0 L282,403.5 L288,403.1 L294,402.8 L300,402.4 L306,402.1 L312,401.8 L318,401.5 L324,401.3 L330,401.0 L336,400.7 L342,400.4 L348,400.2 L354,400.1 L360,400.0 L366,399.9 L372,399.7 L378,399.6 L384,399.5 L390,399.5 L396,399.5 L402,399.5 L408,399.5 L414,399.5 L420,399.5 L426,399.5 L432,399.5 L438,399.5 L444,399.5 L450,399.5 L456,399.5 L462,399.5 L468,399.5 L474,399.5 L480,399.5 L486,399.5 L492,399.5 L498,399.5 L504,399.5 L510,399.5 L516,399.5 L522,399.5 L528,399.5 L534,399.5 L540,399.5 L546,399.5 L552,399.5 L558,400.4 L564,400.4 L570,400.4 L576,400.4 L582,400.4 L588,400.4 L594,400.4 L600,400.4 L606,400.4 L612,400.4 L618,400.4 L624,400.4 L630,400.4 L636,400.3 L642,400.3 L648,400.3 L654,400.3 L660,400.3 L666,400.3 L672,400.3 L678,400.3 L684,400.0 L690,399.4 L696,399.3 L702,399.1 L708,399.0 L714,398.9 L720,398.7 L726,398.5 L732,398.3 L738,398.1 L744,397.9 L750,397.7 L756,397.5 L762,397.2 L768,397.0 L774,396.6 L780,396.4 L786,396.0 L792,395.6 L798,395.2 L804,394.8 L810,394.5 L816,394.1 L822,393.7 L828,393.3 L834,392.9 L840,392.6 L846,392.2 L852,391.7 L858,391.2 L864,390.7 L870,390.2 L876,389.7 L882,389.1 L888,388.6 L894,388.1 L900,387.6 L906,386.8 L912,386.0 L918,385.2 L924,384.4 L930,383.6 L936,382.8 L942,382.1 L948,381.3 L954,380.5 L960,379.7 L966,378.9 L972,378.1 L978,377.3 L984,376.1 L990,374.8 L996,373.5 L1002,372.2 L1008,370.6 L1014,369.1 L1020,367.5 L1026,365.7 L1032,363.8 L1038,362.0 L1044,360.2 L1050,358.3 L1056,356.5 L1062,354.4 L1068,352.0 L1074,350.8 L1080,350.2 L1086,350.1 L1090,350.1 L1090,351.4 L1086,351.4 L1080,351.7 L1074,352.7 L1068,354.2 L1062,356.7 L1056,358.8 L1050,360.7 L1044,362.6 L1038,364.5 L1032,366.4 L1026,368.3 L1020,370.1 L1014,371.7 L1008,373.3 L1002,374.9 L996,376.3 L990,377.6 L984,379.0 L978,380.2 L972,381.0 L966,381.9 L960,382.7 L954,383.6 L948,384.4 L942,385.3 L936,386.1 L930,386.9 L924,387.7 L918,388.5 L912,389.4 L906,390.2 L900,391.0 L894,391.6 L888,392.1 L882,392.6 L876,393.2 L870,393.7 L864,394.3 L858,394.8 L852,395.4 L846,395.8 L840,396.2 L834,396.6 L828,397.0 L822,397.4 L816,397.8 L810,398.2 L804,398.6 L798,399.0 L792,399.4 L786,399.8 L780,400.2 L774,400.5 L768,400.8 L762,401.2 L756,401.5 L750,401.7 L744,401.9 L738,402.1 L732,402.3 L726,402.5 L720,402.7 L714,402.8 L708,403.0 L702,403.1 L696,403.2 L690,403.4 L684,404.0 L678,404.2 L672,404.2 L666,404.3 L660,404.3 L654,404.3 L648,404.3 L642,404.3 L636,404.3 L630,404.3 L624,404.3 L618,404.3 L612,404.3 L606,404.3 L600,404.3 L594,404.3 L588,404.3 L582,404.3 L576,404.3 L570,404.3 L564,404.3 L558,404.3 L552,403.6 L546,403.6 L540,403.6 L534,403.6 L528,403.6 L522,403.6 L516,403.6 L510,403.6 L504,403.5 L498,403.5 L492,403.5 L486,403.5 L480,403.5 L474,403.5 L468,403.5 L462,403.5 L456,403.5 L450,403.5 L444,403.5 L438,403.5 L432,403.5 L426,403.5 L420,403.5 L414,403.5 L408,403.5 L402,403.5 L396,403.5 L390,403.5 L384,403.5 L378,403.6 L372,403.7 L366,403.8 L360,403.9 L354,404.0 L348,404.1 L342,404.3 L336,404.6 L330,404.8 L324,405.0 L318,405.3 L312,405.5 L306,405.8 L300,406.0 L294,406.4 L288,406.7 L282,407.1 L276,407.5 L270,407.9 L264,408.3 L258,408.7 L252,409.1 L246,409.6 L240,410.2 L234,410.7 L228,411.2 L222,411.8 L216,412.4 L210,413.0 L204,414.0 L198,415.2 L192,416.3 L186,417.5 L180,419.2 L174,420.9 L168,423.4 L162,425.9 L156,429.9 L150,429.9 Z" fill="url(#g2)"/><path d="M150,429.3 L156,429.3 L162,425.0 L168,422.3 L174,419.7 L180,417.8 L186,416.1 L192,414.8 L198,413.6 L204,412.4 L210,411.3 L216,410.7 L222,410.0 L228,409.4 L234,408.8 L240,408.2 L246,407.7 L252,407.1 L258,406.6 L264,406.2 L270,405.8 L276,405.4 L282,405.0 L288,404.6 L294,404.2 L300,403.8 L306,403.5 L312,403.3 L318,403.0 L324,402.8 L330,402.5 L336,402.2 L342,402.0 L348,401.8 L354,401.7 L360,401.6 L366,401.4 L372,401.3 L378,401.2 L384,401.1 L390,401.1 L396,401.1 L402,401.1 L408,401.1 L414,401.1 L420,401.1 L426,401.1 L432,401.1 L438,401.1 L444,401.1 L450,401.1 L456,401.1 L462,401.1 L468,401.1 L474,401.1 L480,401.1 L486,401.1 L492,401.1 L498,401.1 L504,401.1 L510,401.1 L516,401.1 L522,401.1 L528,401.1 L534,401.1 L540,401.1 L546,401.1 L552,401.1 L558,401.9 L564,401.9 L570,401.9 L576,401.9 L582,401.9 L588,401.9 L594,401.9 L600,401.9 L606,401.9 L612,401.9 L618,401.9 L624,401.9 L630,401.9 L636,401.9 L642,401.9 L648,401.9 L654,401.9 L660,401.9 L666,401.9 L672,401.9 L678,401.9 L684,401.6 L690,401.0 L696,400.8 L702,400.7 L708,400.6 L714,400.5 L720,400.3 L726,400.1 L732,399.9 L738,399.7 L744,399.5 L750,399.3 L756,399.1 L762,398.8 L768,398.5 L774,398.2 L780,397.9 L786,397.5 L792,397.1 L798,396.7 L804,396.3 L810,395.9 L816,395.6 L822,395.2 L828,394.8 L834,394.4 L840,394.0 L846,393.6 L852,393.2 L858,392.7 L864,392.1 L870,391.6 L876,391.1 L882,390.5 L888,390.0 L894,389.5 L900,388.9 L906,388.1 L912,387.3 L918,386.5 L924,385.7 L930,384.9 L936,384.1 L942,383.3 L948,382.5 L954,381.7 L960,380.9 L966,380.1 L972,379.3 L978,378.4 L984,377.3 L990,376.0 L996,374.6 L1002,373.2 L1008,371.7 L1014,370.1 L1020,368.5 L1026,366.7 L1032,364.9 L1038,363.0 L1044,361.2 L1050,359.3 L1056,357.4 L1062,355.3 L1068,352.9 L1074,351.6 L1080,350.8 L1086,350.6 L1090,350.6 L1090,351.9 L1086,351.9 L1080,352.3 L1074,353.4 L1068,355.0 L1062,357.5 L1056,359.7 L1050,361.7 L1044,363.6 L1038,365.5 L1032,367.4 L1026,369.3 L1020,371.2 L1014,372.8 L1008,374.4 L1002,375.9 L996,377.4 L990,378.8 L984,380.1 L978,381.4 L972,382.2 L966,383.1 L960,384.0 L954,384.8 L948,385.7 L942,386.5 L936,387.4 L930,388.2 L924,389.0 L918,389.9 L912,390.7 L906,391.5 L900,392.4 L894,392.9 L888,393.5 L882,394.1 L876,394.6 L870,395.2 L864,395.7 L858,396.3 L852,396.8 L846,397.3 L840,397.7 L834,398.1 L828,398.5 L822,398.9 L816,399.3 L810,399.7 L804,400.1 L798,400.5 L792,400.9 L786,401.3 L780,401.7 L774,402.0 L768,402.4 L762,402.7 L756,403.1 L750,403.3 L744,403.5 L738,403.7 L732,403.9 L726,404.1 L720,404.3 L714,404.4 L708,404.5 L702,404.7 L696,404.8 L690,404.9 L684,405.5 L678,405.8 L672,405.8 L666,405.8 L660,405.8 L654,405.8 L648,405.8 L642,405.9 L636,405.9 L630,405.9 L624,405.9 L618,405.9 L612,405.9 L606,405.9 L600,405.9 L594,405.9 L588,405.9 L582,405.9 L576,405.9 L570,405.9 L564,405.9 L558,405.9 L552,405.2 L546,405.2 L540,405.2 L534,405.2 L528,405.2 L522,405.2 L516,405.2 L510,405.2 L504,405.2 L498,405.2 L492,405.1 L486,405.1 L480,405.1 L474,405.1 L468,405.1 L462,405.1 L456,405.1 L450,405.1 L444,405.1 L438,405.1 L432,405.1 L426,405.1 L420,405.1 L414,405.1 L408,405.1 L402,405.1 L396,405.1 L390,405.1 L384,405.1 L378,405.1 L372,405.3 L366,405.4 L360,405.5 L354,405.6 L348,405.7 L342,405.9 L336,406.1 L330,406.3 L324,406.5 L318,406.8 L312,407.0 L306,407.2 L300,407.5 L294,407.8 L288,408.2 L282,408.5 L276,408.9 L270,409.3 L264,409.6 L258,410.0 L252,410.5 L246,410.9 L240,411.4 L234,411.9 L228,412.5 L222,413.0 L216,413.6 L210,414.2 L204,415.1 L198,416.3 L192,417.4 L186,418.5 L180,420.1 L174,421.8 L168,424.1 L162,426.5 L156,430.4 L150,430.4 Z" fill="url(#g3)"/><path d="M150,429.7 L156,429.7 L162,425.6 L168,423.0 L174,420.5 L180,418.7 L186,417.0 L192,415.8 L198,414.7 L204,413.5 L210,412.4 L216,411.8 L222,411.2 L228,410.6 L234,410.0 L240,409.5 L246,409.0 L252,408.5 L258,408.0 L264,407.6 L270,407.2 L276,406.8 L282,406.4 L288,406.0 L294,405.7 L300,405.3 L306,405.0 L312,404.8 L318,404.5 L324,404.3 L330,404.0 L336,403.8 L342,403.5 L348,403.4 L354,403.2 L360,403.1 L366,403.0 L372,402.9 L378,402.8 L384,402.7 L390,402.7 L396,402.7 L402,402.7 L408,402.7 L414,402.7 L420,402.7 L426,402.7 L432,402.7 L438,402.7 L444,402.7 L450,402.7 L456,402.7 L462,402.7 L468,402.7 L474,402.7 L480,402.7 L486,402.7 L492,402.7 L498,402.7 L504,402.7 L510,402.7 L516,402.7 L522,402.8 L528,402.8 L534,402.8 L540,402.8 L546,402.8 L552,402.8 L558,403.5 L564,403.5 L570,403.5 L576,403.5 L582,403.5 L588,403.5 L594,403.5 L600,403.5 L606,403.5 L612,403.5 L618,403.5 L624,403.5 L630,403.5 L636,403.5 L642,403.5 L648,403.5 L654,403.5 L660,403.5 L666,403.5 L672,403.5 L678,403.5 L684,403.2 L690,402.6 L696,402.4 L702,402.3 L708,402.2 L714,402.0 L720,401.9 L726,401.7 L732,401.5 L738,401.3 L744,401.1 L750,400.9 L756,400.7 L762,400.4 L768,400.1 L774,399.7 L780,399.4 L786,399.0 L792,398.6 L798,398.2 L804,397.8 L810,397.4 L816,397.1 L822,396.7 L828,396.3 L834,395.9 L840,395.5 L846,395.1 L852,394.7 L858,394.1 L864,393.6 L870,393.0 L876,392.5 L882,391.9 L888,391.4 L894,390.9 L900,390.3 L906,389.5 L912,388.7 L918,387.9 L924,387.1 L930,386.2 L936,385.4 L942,384.6 L948,383.8 L954,383.0 L960,382.1 L966,381.3 L972,380.4 L978,379.6 L984,378.4 L990,377.1 L996,375.7 L1002,374.3 L1008,372.7 L1014,371.2 L1020,369.6 L1026,367.7 L1032,365.9 L1038,364.0 L1044,362.1 L1050,360.2 L1056,358.3 L1062,356.2 L1068,353.7 L1074,352.3 L1080,351.4 L1086,351.1 L1090,351.1 L1090,352.5 L1086,352.5 L1080,352.9 L1074,354.2 L1068,355.8 L1062,358.4 L1056,360.6 L1050,362.6 L1044,364.6 L1038,366.6 L1032,368.4 L1026,370.3 L1020,372.2 L1014,373.8 L1008,375.4 L1002,377.0 L996,378.5 L990,379.9 L984,381.3 L978,382.5 L972,383.4 L966,384.3 L960,385.2 L954,386.1 L948,387.0 L942,387.8 L936,388.7 L930,389.5 L924,390.4 L918,391.2 L912,392.1 L906,392.9 L900,393.8 L894,394.3 L888,394.9 L882,395.5 L876,396.0 L870,396.6 L864,397.2 L858,397.7 L852,398.3 L846,398.8 L840,399.2 L834,399.6 L828,400.0 L822,400.4 L816,400.8 L810,401.2 L804,401.6 L798,402.0 L792,402.4 L786,402.8 L780,403.2 L774,403.6 L768,403.9 L762,404.3 L756,404.6 L750,404.8 L744,405.0 L738,405.2 L732,405.4 L726,405.6 L720,405.8 L714,406.0 L708,406.1 L702,406.3 L696,406.4 L690,406.5 L684,407.1 L678,407.4 L672,407.4 L666,407.4 L660,407.4 L654,407.4 L648,407.4 L642,407.4 L636,407.4 L630,407.4 L624,407.4 L618,407.5 L612,407.5 L606,407.5 L600,407.5 L594,407.5 L588,407.5 L582,407.5 L576,407.5 L570,407.5 L564,407.5 L558,407.5 L552,406.8 L546,406.8 L540,406.8 L534,406.8 L528,406.8 L522,406.8 L516,406.8 L510,406.8 L504,406.8 L498,406.8 L492,406.8 L486,406.7 L480,406.7 L474,406.7 L468,406.7 L462,406.7 L456,406.7 L450,406.7 L444,406.7 L438,406.7 L432,406.7 L426,406.7 L420,406.7 L414,406.7 L408,406.7 L402,406.7 L396,406.7 L390,406.7 L384,406.6 L378,406.7 L372,406.8 L366,406.9 L360,407.0 L354,407.1 L348,407.2 L342,407.4 L336,407.6 L330,407.8 L324,408.1 L318,408.3 L312,408.5 L306,408.7 L300,409.0 L294,409.3 L288,409.6 L282,409.9 L276,410.3 L270,410.6 L264,411.0 L258,411.4 L252,411.8 L246,412.2 L240,412.7 L234,413.2 L228,413.7 L222,414.2 L216,414.8 L210,415.3 L204,416.3 L198,417.3 L192,418.4 L186,419.4 L180,421.0 L174,422.6 L168,424.8 L162,427.1 L156,430.8 L150,430.8 Z" fill="url(#g4)"/><path d="M150,430.1 L156,430.1 L162,426.2 L168,423.7 L174,421.4 L180,419.6 L186,418.0 L192,416.9 L198,415.7 L204,414.6 L210,413.6 L216,413.0 L222,412.4 L228,411.9 L234,411.3 L240,410.8 L246,410.3 L252,409.8 L258,409.3 L264,409.0 L270,408.6 L276,408.2 L282,407.8 L288,407.4 L294,407.1 L300,406.8 L306,406.5 L312,406.3 L318,406.0 L324,405.8 L330,405.6 L336,405.3 L342,405.1 L348,404.9 L354,404.8 L360,404.7 L366,404.6 L372,404.5 L378,404.4 L384,404.3 L390,404.3 L396,404.3 L402,404.3 L408,404.3 L414,404.3 L420,404.3 L426,404.3 L432,404.3 L438,404.3 L444,404.3 L450,404.3 L456,404.3 L462,404.3 L468,404.3 L474,404.3 L480,404.3 L486,404.3 L492,404.3 L498,404.3 L504,404.4 L510,404.4 L516,404.4 L522,404.4 L528,404.4 L534,404.4 L540,404.4 L546,404.4 L552,404.4 L558,405.1 L564,405.1 L570,405.1 L576,405.1 L582,405.1 L588,405.1 L594,405.1 L600,405.1 L606,405.1 L612,405.1 L618,405.1 L624,405.1 L630,405.1 L636,405.1 L642,405.1 L648,405.1 L654,405.1 L660,405.0 L666,405.0 L672,405.0 L678,405.0 L684,404.8 L690,404.2 L696,404.0 L702,403.9 L708,403.7 L714,403.6 L720,403.5 L726,403.3 L732,403.1 L738,402.9 L744,402.7 L750,402.5 L756,402.3 L762,401.9 L768,401.6 L774,401.3 L780,400.9 L786,400.5 L792,400.1 L798,399.7 L804,399.3 L810,398.9 L816,398.5 L822,398.2 L828,397.8 L834,397.4 L840,397.0 L846,396.6 L852,396.1 L858,395.6 L864,395.0 L870,394.5 L876,393.9 L882,393.4 L888,392.8 L894,392.2 L900,391.7 L906,390.9 L912,390.0 L918,389.2 L924,388.4 L930,387.5 L936,386.7 L942,385.9 L948,385.1 L954,384.2 L960,383.4 L966,382.5 L972,381.6 L978,380.8 L984,379.6 L990,378.2 L996,376.8 L1002,375.4 L1008,373.8 L1014,372.2 L1020,370.6 L1026,368.8 L1032,366.9 L1038,365.0 L1044,363.1 L1050,361.2 L1056,359.2 L1062,357.1 L1068,354.6 L1074,353.1 L1080,352.0 L1086,351.7 L1090,351.7 L1090,353.0 L1086,353.0 L1080,353.6 L1074,355.0 L1068,356.7 L1062,359.3 L1056,361.5 L1050,363.6 L1044,365.6 L1038,367.6 L1032,369.5 L1026,371.4 L1020,373.3 L1014,374.9 L1008,376.5 L1002,378.1 L996,379.6 L990,381.0 L984,382.4 L978,383.7 L972,384.6 L966,385.5 L960,386.4 L954,387.3 L948,388.2 L942,389.1 L936,389.9 L930,390.8 L924,391.7 L918,392.5 L912,393.4 L906,394.3 L900,395.1 L894,395.7 L888,396.3 L882,396.9 L876,397.5 L870,398.0 L864,398.6 L858,399.2 L852,399.8 L846,400.2 L840,400.6 L834,401.0 L828,401.5 L822,401.9 L816,402.3 L810,402.7 L804,403.1 L798,403.5 L792,403.9 L786,404.3 L780,404.7 L774,405.1 L768,405.5 L762,405.8 L756,406.2 L750,406.4 L744,406.6 L738,406.8 L732,407.0 L726,407.2 L720,407.4 L714,407.6 L708,407.7 L702,407.8 L696,408.0 L690,408.1 L684,408.7 L678,408.9 L672,408.9 L666,409.0 L660,409.0 L654,409.0 L648,409.0 L642,409.0 L636,409.0 L630,409.0 L624,409.0 L618,409.0 L612,409.0 L606,409.1 L600,409.1 L594,409.1 L588,409.1 L582,409.1 L576,409.1 L570,409.1 L564,409.1 L558,409.1 L552,408.4 L546,408.4 L540,408.4 L534,408.4 L528,408.4 L522,408.4 L516,408.4 L510,408.4 L504,408.4 L498,408.4 L492,408.4 L486,408.4 L480,408.3 L474,408.3 L468,408.3 L462,408.3 L456,408.3 L450,408.3 L444,408.3 L438,408.3 L432,408.3 L426,408.3 L420,408.3 L414,408.3 L408,408.3 L402,408.3 L396,408.3 L390,408.2 L384,408.2 L378,408.3 L372,408.4 L366,408.5 L360,408.6 L354,408.7 L348,408.8 L342,409.0 L336,409.2 L330,409.4 L324,409.6 L318,409.8 L312,410.0 L306,410.2 L300,410.4 L294,410.7 L288,411.0 L282,411.4 L276,411.7 L270,412.0 L264,412.4 L258,412.7 L252,413.1 L246,413.6 L240,414.0 L234,414.4 L228,414.9 L222,415.5 L216,416.0 L210,416.5 L204,417.4 L198,418.4 L192,419.4 L186,420.4 L180,421.8 L174,423.4 L168,425.5 L162,427.7 L156,431.2 L150,431.2 Z" fill="url(#g5)"/><path d="M150,430.6 L156,430.6 L162,426.8 L168,424.4 L174,422.2 L180,420.5 L186,418.9 L192,417.9 L198,416.8 L204,415.7 L210,414.8 L216,414.2 L222,413.6 L228,413.1 L234,412.6 L240,412.1 L246,411.6 L252,411.1 L258,410.7 L264,410.3 L270,410.0 L276,409.6 L282,409.2 L288,408.9 L294,408.6 L300,408.2 L306,408.0 L312,407.8 L318,407.5 L324,407.3 L330,407.1 L336,406.9 L342,406.6 L348,406.5 L354,406.4 L360,406.3 L366,406.1 L372,406.0 L378,405.9 L384,405.8 L390,405.9 L396,405.9 L402,405.9 L408,405.9 L414,405.9 L420,405.9 L426,405.9 L432,405.9 L438,405.9 L444,405.9 L450,405.9 L456,405.9 L462,405.9 L468,405.9 L474,405.9 L480,405.9 L486,405.9 L492,406.0 L498,406.0 L504,406.0 L510,406.0 L516,406.0 L522,406.0 L528,406.0 L534,406.0 L540,406.0 L546,406.0 L552,406.0 L558,406.7 L564,406.7 L570,406.7 L576,406.7 L582,406.7 L588,406.7 L594,406.7 L600,406.7 L606,406.7 L612,406.7 L618,406.7 L624,406.7 L630,406.7 L636,406.6 L642,406.6 L648,406.6 L654,406.6 L660,406.6 L666,406.6 L672,406.6 L678,406.6 L684,406.3 L690,405.7 L696,405.6 L702,405.5 L708,405.3 L714,405.2 L720,405.0 L726,404.8 L732,404.6 L738,404.4 L744,404.2 L750,404.0 L756,403.8 L762,403.5 L768,403.2 L774,402.8 L780,402.4 L786,402.0 L792,401.6 L798,401.2 L804,400.8 L810,400.4 L816,400.0 L822,399.6 L828,399.2 L834,398.8 L840,398.4 L846,398.0 L852,397.6 L858,397.0 L864,396.5 L870,395.9 L876,395.3 L882,394.8 L888,394.2 L894,393.6 L900,393.1 L906,392.2 L912,391.4 L918,390.5 L924,389.7 L930,388.9 L936,388.0 L942,387.2 L948,386.3 L954,385.5 L960,384.6 L966,383.7 L972,382.8 L978,381.9 L984,380.7 L990,379.3 L996,377.9 L1002,376.5 L1008,374.9 L1014,373.3 L1020,371.7 L1026,369.8 L1032,367.9 L1038,366.0 L1044,364.1 L1050,362.1 L1056,360.2 L1062,358.0 L1068,355.4 L1074,353.8 L1080,352.6 L1086,352.2 L1090,352.2 L1090,353.6 L1086,353.6 L1080,354.2 L1074,355.7 L1068,357.5 L1062,360.2 L1056,362.5 L1050,364.5 L1044,366.6 L1038,368.6 L1032,370.5 L1026,372.4 L1020,374.3 L1014,375.9 L1008,377.6 L1002,379.2 L996,380.7 L990,382.1 L984,383.6 L978,384.8 L972,385.8 L966,386.7 L960,387.6 L954,388.6 L948,389.5 L942,390.4 L936,391.2 L930,392.1 L924,393.0 L918,393.9 L912,394.8 L906,395.6 L900,396.5 L894,397.1 L888,397.7 L882,398.3 L876,398.9 L870,399.5 L864,400.0 L858,400.6 L852,401.2 L846,401.7 L840,402.1 L834,402.5 L828,402.9 L822,403.4 L816,403.8 L810,404.2 L804,404.6 L798,405.0 L792,405.4 L786,405.8 L780,406.3 L774,406.6 L768,407.0 L762,407.4 L756,407.8 L750,408.0 L744,408.2 L738,408.4 L732,408.6 L726,408.8 L720,409.0 L714,409.1 L708,409.3 L702,409.4 L696,409.6 L690,409.7 L684,410.2 L678,410.5 L672,410.5 L666,410.5 L660,410.5 L654,410.5 L648,410.6 L642,410.6 L636,410.6 L630,410.6 L624,410.6 L618,410.6 L612,410.6 L606,410.6 L600,410.6 L594,410.6 L588,410.6 L582,410.6 L576,410.6 L570,410.6 L564,410.6 L558,410.6 L552,410.0 L546,410.0 L540,410.0 L534,410.0 L528,410.0 L522,410.0 L516,410.0 L510,410.0 L504,410.0 L498,410.0 L492,410.0 L486,410.0 L480,410.0 L474,409.9 L468,409.9 L462,409.9 L456,409.9 L450,409.9 L444,409.9 L438,409.9 L432,409.9 L426,409.9 L420,409.9 L414,409.9 L408,409.9 L402,409.9 L396,409.8 L390,409.8 L384,409.8 L378,409.9 L372,410.0 L366,410.1 L360,410.2 L354,410.3 L348,410.4 L342,410.5 L336,410.7 L330,410.9 L324,411.1 L318,411.3 L312,411.5 L306,411.7 L300,411.9 L294,412.2 L288,412.5 L282,412.8 L276,413.1 L270,413.4 L264,413.7 L258,414.1 L252,414.4 L246,414.9 L240,415.3 L234,415.7 L228,416.2 L222,416.7 L216,417.2 L210,417.6 L204,418.5 L198,419.4 L192,420.4 L186,421.3 L180,422.7 L174,424.2 L168,426.2 L162,428.3 L156,431.6 L150,431.6 Z" fill="url(#g6)"/><path d="M150,431.0 L156,431.0 L162,427.4 L168,425.1 L174,423.0 L180,421.4 L186,419.9 L192,418.9 L198,417.8 L204,416.8 L210,415.9 L216,415.4 L222,414.9 L228,414.3 L234,413.8 L240,413.4 L246,412.9 L252,412.4 L258,412.0 L264,411.7 L270,411.3 L276,411.0 L282,410.6 L288,410.3 L294,410.0 L300,409.7 L306,409.5 L312,409.2 L318,409.0 L324,408.8 L330,408.6 L336,408.4 L342,408.2 L348,408.0 L354,407.9 L360,407.8 L366,407.7 L372,407.6 L378,407.5 L384,407.4 L390,407.4 L396,407.5 L402,407.5 L408,407.5 L414,407.5 L420,407.5 L426,407.5 L432,407.5 L438,407.5 L444,407.5 L450,407.5 L456,407.5 L462,407.5 L468,407.5 L474,407.5 L480,407.5 L486,407.6 L492,407.6 L498,407.6 L504,407.6 L510,407.6 L516,407.6 L522,407.6 L528,407.6 L534,407.6 L540,407.6 L546,407.6 L552,407.6 L558,408.3 L564,408.3 L570,408.3 L576,408.3 L582,408.3 L588,408.3 L594,408.3 L600,408.3 L606,408.3 L612,408.3 L618,408.2 L624,408.2 L630,408.2 L636,408.2 L642,408.2 L648,408.2 L654,408.2 L660,408.2 L666,408.2 L672,408.2 L678,408.2 L684,407.9 L690,407.3 L696,407.2 L702,407.0 L708,406.9 L714,406.8 L720,406.6 L726,406.4 L732,406.2 L738,406.0 L744,405.8 L750,405.6 L756,405.4 L762,405.1 L768,404.7 L774,404.3 L780,404.0 L786,403.6 L792,403.2 L798,402.8 L804,402.3 L810,401.9 L816,401.5 L822,401.1 L828,400.7 L834,400.3 L840,399.9 L846,399.5 L852,399.0 L858,398.5 L864,397.9 L870,397.3 L876,396.7 L882,396.2 L888,395.6 L894,395.0 L900,394.4 L906,393.6 L912,392.7 L918,391.9 L924,391.0 L930,390.2 L936,389.3 L942,388.4 L948,387.6 L954,386.7 L960,385.8 L966,384.9 L972,384.0 L978,383.1 L984,381.9 L990,380.5 L996,379.0 L1002,377.6 L1008,376.0 L1014,374.4 L1020,372.8 L1026,370.9 L1032,369.0 L1038,367.1 L1044,365.1 L1050,363.1 L1056,361.1 L1062,358.9 L1068,356.3 L1074,354.6 L1080,353.2 L1086,352.8 L1090,352.8 L1090,354.1 L1086,354.1 L1080,354.8 L1074,356.5 L1068,358.4 L1062,361.1 L1056,363.4 L1050,365.5 L1044,367.6 L1038,369.6 L1032,371.5 L1026,373.4 L1020,375.4 L1014,377.0 L1008,378.6 L1002,380.3 L996,381.8 L990,383.3 L984,384.7 L978,386.0 L972,387.0 L966,387.9 L960,388.9 L954,389.8 L948,390.7 L942,391.6 L936,392.5 L930,393.4 L924,394.3 L918,395.2 L912,396.1 L906,397.0 L900,397.9 L894,398.5 L888,399.1 L882,399.7 L876,400.3 L870,400.9 L864,401.5 L858,402.1 L852,402.7 L846,403.2 L840,403.6 L834,404.0 L828,404.4 L822,404.8 L816,405.3 L810,405.7 L804,406.1 L798,406.5 L792,406.9 L786,407.4 L780,407.8 L774,408.2 L768,408.6 L762,409.0 L756,409.4 L750,409.6 L744,409.8 L738,410.0 L732,410.2 L726,410.4 L720,410.6 L714,410.7 L708,410.9 L702,411.0 L696,411.2 L690,411.3 L684,411.8 L678,412.1 L672,412.1 L666,412.1 L660,412.1 L654,412.1 L648,412.1 L642,412.1 L636,412.2 L630,412.2 L624,412.2 L618,412.2 L612,412.2 L606,412.2 L600,412.2 L594,412.2 L588,412.2 L582,412.2 L576,412.2 L570,412.2 L564,412.2 L558,412.2 L552,411.6 L546,411.6 L540,411.6 L534,411.6 L528,411.6 L522,411.6 L516,411.6 L510,411.6 L504,411.6 L498,411.6 L492,411.6 L486,411.6 L480,411.6 L474,411.6 L468,411.5 L462,411.5 L456,411.5 L450,411.5 L444,411.5 L438,411.5 L432,411.5 L426,411.5 L420,411.5 L414,411.5 L408,411.5 L402,411.4 L396,411.4 L390,411.4 L384,411.4 L378,411.5 L372,411.6 L366,411.7 L360,411.7 L354,411.8 L348,411.9 L342,412.0 L336,412.2 L330,412.4 L324,412.6 L318,412.8 L312,413.0 L306,413.2 L300,413.4 L294,413.6 L288,413.9 L282,414.2 L276,414.5 L270,414.8 L264,415.1 L258,415.4 L252,415.8 L246,416.2 L240,416.6 L234,417.0 L228,417.4 L222,417.9 L216,418.3 L210,418.8 L204,419.6 L198,420.5 L192,421.4 L186,422.3 L180,423.6 L174,425.0 L168,426.9 L162,428.9 L156,432.1 L150,432.1 Z" fill="url(#g7)"/><path d="M150,431.4 L156,431.4 L162,428.0 L168,425.9 L174,423.8 L180,422.3 L186,420.9 L192,419.9 L198,418.9 L204,417.9 L210,417.1 L216,416.6 L222,416.1 L228,415.6 L234,415.1 L240,414.6 L246,414.2 L252,413.8 L258,413.4 L264,413.1 L270,412.7 L276,412.4 L282,412.1 L288,411.8 L294,411.5 L300,411.2 L306,410.9 L312,410.7 L318,410.5 L324,410.3 L330,410.1 L336,409.9 L342,409.7 L348,409.6 L354,409.5 L360,409.4 L366,409.3 L372,409.2 L378,409.1 L384,409.0 L390,409.0 L396,409.0 L402,409.1 L408,409.1 L414,409.1 L420,409.1 L426,409.1 L432,409.1 L438,409.1 L444,409.1 L450,409.1 L456,409.1 L462,409.1 L468,409.1 L474,409.1 L480,409.2 L486,409.2 L492,409.2 L498,409.2 L504,409.2 L510,409.2 L516,409.2 L522,409.2 L528,409.2 L534,409.2 L540,409.2 L546,409.2 L552,409.2 L558,409.9 L564,409.9 L570,409.9 L576,409.9 L582,409.9 L588,409.9 L594,409.9 L600,409.9 L606,409.8 L612,409.8 L618,409.8 L624,409.8 L630,409.8 L636,409.8 L642,409.8 L648,409.8 L654,409.8 L660,409.8 L666,409.7 L672,409.7 L678,409.7 L684,409.5 L690,408.9 L696,408.8 L702,408.6 L708,408.5 L714,408.3 L720,408.2 L726,408.0 L732,407.8 L738,407.6 L744,407.4 L750,407.2 L756,407.0 L762,406.6 L768,406.2 L774,405.9 L780,405.5 L786,405.1 L792,404.7 L798,404.3 L804,403.8 L810,403.4 L816,403.0 L822,402.6 L828,402.2 L834,401.8 L840,401.4 L846,401.0 L852,400.5 L858,399.9 L864,399.3 L870,398.7 L876,398.2 L882,397.6 L888,397.0 L894,396.4 L900,395.8 L906,395.0 L912,394.1 L918,393.2 L924,392.3 L930,391.5 L936,390.6 L942,389.7 L948,388.8 L954,387.9 L960,387.0 L966,386.1 L972,385.2 L978,384.3 L984,383.0 L990,381.6 L996,380.1 L1002,378.6 L1008,377.0 L1014,375.4 L1020,373.8 L1026,371.9 L1032,370.0 L1038,368.1 L1044,366.1 L1050,364.0 L1056,362.0 L1062,359.8 L1068,357.1 L1074,355.3 L1080,353.9 L1086,353.3 L1090,353.3 L1090,354.6 L1086,354.6 L1080,355.4 L1074,357.2 L1068,359.2 L1062,362.0 L1056,364.3 L1050,366.4 L1044,368.5 L1038,370.6 L1032,372.5 L1026,374.5 L1020,376.4 L1014,378.1 L1008,379.7 L1002,381.4 L996,382.9 L990,384.4 L984,385.9 L978,387.2 L972,388.1 L966,389.1 L960,390.1 L954,391.1 L948,392.0 L942,392.9 L936,393.8 L930,394.7 L924,395.6 L918,396.5 L912,397.5 L906,398.4 L900,399.3 L894,399.9 L888,400.5 L882,401.1 L876,401.7 L870,402.3 L864,402.9 L858,403.5 L852,404.1 L846,404.6 L840,405.0 L834,405.5 L828,405.9 L822,406.3 L816,406.8 L810,407.2 L804,407.6 L798,408.0 L792,408.5 L786,408.9 L780,409.3 L774,409.7 L768,410.1 L762,410.5 L756,410.9 L750,411.1 L744,411.3 L738,411.5 L732,411.7 L726,411.9 L720,412.1 L714,412.3 L708,412.4 L702,412.6 L696,412.7 L690,412.9 L684,413.4 L678,413.6 L672,413.6 L666,413.7 L660,413.7 L654,413.7 L648,413.7 L642,413.7 L636,413.7 L630,413.7 L624,413.8 L618,413.8 L612,413.8 L606,413.8 L600,413.8 L594,413.8 L588,413.8 L582,413.8 L576,413.8 L570,413.8 L564,413.8 L558,413.8 L552,413.2 L546,413.2 L540,413.2 L534,413.2 L528,413.2 L522,413.2 L516,413.2 L510,413.2 L504,413.2 L498,413.2 L492,413.2 L486,413.2 L480,413.2 L474,413.2 L468,413.1 L462,413.1 L456,413.1 L450,413.1 L444,413.1 L438,413.1 L432,413.1 L426,413.1 L420,413.1 L414,413.1 L408,413.1 L402,413.0 L396,413.0 L390,413.0 L384,413.0 L378,413.1 L372,413.2 L366,413.2 L360,413.3 L354,413.4 L348,413.5 L342,413.6 L336,413.8 L330,413.9 L324,414.1 L318,414.3 L312,414.5 L306,414.6 L300,414.8 L294,415.1 L288,415.3 L282,415.6 L276,415.9 L270,416.2 L264,416.5 L258,416.8 L252,417.1 L246,417.5 L240,417.8 L234,418.2 L228,418.6 L222,419.1 L216,419.5 L210,420.0 L204,420.7 L198,421.6 L192,422.4 L186,423.3 L180,424.5 L174,425.8 L168,427.6 L162,429.5 L156,432.5 L150,432.5 Z" fill="url(#g8)"/><path d="M150,431.9 L156,431.9 L162,428.6 L168,426.6 L174,424.6 L180,423.2 L186,421.8 L192,420.9 L198,420.0 L204,419.0 L210,418.2 L216,417.7 L222,417.3 L228,416.8 L234,416.3 L240,415.9 L246,415.5 L252,415.1 L258,414.7 L264,414.4 L270,414.1 L276,413.8 L282,413.5 L288,413.2 L294,412.9 L300,412.6 L306,412.4 L312,412.2 L318,412.0 L324,411.8 L330,411.7 L336,411.5 L342,411.3 L348,411.1 L354,411.0 L360,411.0 L366,410.9 L372,410.8 L378,410.7 L384,410.6 L390,410.6 L396,410.6 L402,410.6 L408,410.7 L414,410.7 L420,410.7 L426,410.7 L432,410.7 L438,410.7 L444,410.7 L450,410.7 L456,410.7 L462,410.7 L468,410.7 L474,410.8 L480,410.8 L486,410.8 L492,410.8 L498,410.8 L504,410.8 L510,410.8 L516,410.8 L522,410.8 L528,410.8 L534,410.8 L540,410.8 L546,410.8 L552,410.8 L558,411.4 L564,411.4 L570,411.4 L576,411.4 L582,411.4 L588,411.4 L594,411.4 L600,411.4 L606,411.4 L612,411.4 L618,411.4 L624,411.4 L630,411.4 L636,411.4 L642,411.4 L648,411.3 L654,411.3 L660,411.3 L666,411.3 L672,411.3 L678,411.3 L684,411.0 L690,410.5 L696,410.4 L702,410.2 L708,410.1 L714,409.9 L720,409.8 L726,409.6 L732,409.4 L738,409.2 L744,409.0 L750,408.8 L756,408.6 L762,408.2 L768,407.8 L774,407.4 L780,407.0 L786,406.6 L792,406.2 L798,405.8 L804,405.4 L810,404.9 L816,404.5 L822,404.1 L828,403.7 L834,403.3 L840,402.8 L846,402.4 L852,401.9 L858,401.4 L864,400.8 L870,400.2 L876,399.6 L882,399.0 L888,398.4 L894,397.8 L900,397.2 L906,396.3 L912,395.4 L918,394.5 L924,393.7 L930,392.8 L936,391.9 L942,391.0 L948,390.1 L954,389.2 L960,388.2 L966,387.3 L972,386.4 L978,385.4 L984,384.1 L990,382.7 L996,381.2 L1002,379.7 L1008,378.1 L1014,376.5 L1020,374.8 L1026,372.9 L1032,371.0 L1038,369.1 L1044,367.1 L1050,365.0 L1056,362.9 L1062,360.7 L1068,358.0 L1074,356.1 L1080,354.5 L1086,353.8 L1090,353.8 L1090,355.2 L1086,355.2 L1080,356.0 L1074,358.0 L1068,360.1 L1062,362.9 L1056,365.3 L1050,367.4 L1044,369.5 L1038,371.6 L1032,373.6 L1026,375.5 L1020,377.5 L1014,379.1 L1008,380.8 L1002,382.4 L996,384.0 L990,385.5 L984,387.0 L978,388.3 L972,389.3 L966,390.3 L960,391.3 L954,392.3 L948,393.3 L942,394.2 L936,395.1 L930,396.0 L924,397.0 L918,397.9 L912,398.8 L906,399.7 L900,400.7 L894,401.3 L888,401.9 L882,402.5 L876,403.1 L870,403.7 L864,404.4 L858,405.0 L852,405.6 L846,406.1 L840,406.5 L834,407.0 L828,407.4 L822,407.8 L816,408.2 L810,408.7 L804,409.1 L798,409.5 L792,410.0 L786,410.4 L780,410.8 L774,411.3 L768,411.7 L762,412.1 L756,412.5 L750,412.7 L744,412.9 L738,413.1 L732,413.3 L726,413.5 L720,413.7 L714,413.9 L708,414.0 L702,414.2 L696,414.3 L690,414.5 L684,415.0 L678,415.2 L672,415.2 L666,415.2 L660,415.2 L654,415.3 L648,415.3 L642,415.3 L636,415.3 L630,415.3 L624,415.3 L618,415.3 L612,415.4 L606,415.4 L600,415.4 L594,415.4 L588,415.4 L582,415.4 L576,415.4 L570,415.4 L564,415.4 L558,415.4 L552,414.9 L546,414.9 L540,414.9 L534,414.9 L528,414.9 L522,414.9 L516,414.8 L510,414.8 L504,414.8 L498,414.8 L492,414.8 L486,414.8 L480,414.8 L474,414.8 L468,414.8 L462,414.7 L456,414.7 L450,414.7 L444,414.7 L438,414.7 L432,414.7 L426,414.7 L420,414.7 L414,414.7 L408,414.6 L402,414.6 L396,414.6 L390,414.6 L384,414.6 L378,414.7 L372,414.7 L366,414.8 L360,414.9 L354,415.0 L348,415.0 L342,415.1 L336,415.3 L330,415.5 L324,415.6 L318,415.8 L312,416.0 L306,416.1 L300,416.3 L294,416.5 L288,416.8 L282,417.0 L276,417.3 L270,417.6 L264,417.8 L258,418.1 L252,418.4 L246,418.8 L240,419.1 L234,419.5 L228,419.9 L222,420.3 L216,420.7 L210,421.1 L204,421.8 L198,422.6 L192,423.4 L186,424.2 L180,425.4 L174,426.6 L168,428.3 L162,430.1 L156,432.9 L150,432.9 Z" fill="url(#g9)"/><path d="M150,432.3 L156,432.3 L162,429.2 L168,427.3 L174,425.4 L180,424.1 L186,422.8 L192,421.9 L198,421.0 L204,420.2 L210,419.4 L216,418.9 L222,418.5 L228,418.0 L234,417.6 L240,417.2 L246,416.8 L252,416.4 L258,416.1 L264,415.8 L270,415.5 L276,415.2 L282,414.9 L288,414.6 L294,414.4 L300,414.1 L306,413.9 L312,413.7 L318,413.5 L324,413.4 L330,413.2 L336,413.0 L342,412.8 L348,412.7 L354,412.6 L360,412.5 L366,412.4 L372,412.4 L378,412.3 L384,412.2 L390,412.2 L396,412.2 L402,412.2 L408,412.3 L414,412.3 L420,412.3 L426,412.3 L432,412.3 L438,412.3 L444,412.3 L450,412.3 L456,412.3 L462,412.3 L468,412.3 L474,412.4 L480,412.4 L486,412.4 L492,412.4 L498,412.4 L504,412.4 L510,412.4 L516,412.4 L522,412.4 L528,412.4 L534,412.4 L540,412.4 L546,412.4 L552,412.4 L558,413.0 L564,413.0 L570,413.0 L576,413.0 L582,413.0 L588,413.0 L594,413.0 L600,413.0 L606,413.0 L612,413.0 L618,413.0 L624,413.0 L630,413.0 L636,412.9 L642,412.9 L648,412.9 L654,412.9 L660,412.9 L666,412.9 L672,412.9 L678,412.8 L684,412.6 L690,412.1 L696,411.9 L702,411.8 L708,411.6 L714,411.5 L720,411.3 L726,411.1 L732,410.9 L738,410.7 L744,410.5 L750,410.3 L756,410.1 L762,409.8 L768,409.4 L774,408.9 L780,408.6 L786,408.1 L792,407.7 L798,407.3 L804,406.9 L810,406.4 L816,406.0 L822,405.6 L828,405.2 L834,404.7 L840,404.3 L846,403.9 L852,403.4 L858,402.8 L864,402.2 L870,401.6 L876,401.0 L882,400.4 L888,399.8 L894,399.2 L900,398.6 L906,397.7 L912,396.8 L918,395.9 L924,395.0 L930,394.1 L936,393.2 L942,392.3 L948,391.4 L954,390.4 L960,389.5 L966,388.5 L972,387.6 L978,386.6 L984,385.3 L990,383.8 L996,382.3 L1002,380.8 L1008,379.2 L1014,377.5 L1020,375.9 L1026,374.0 L1032,372.0 L1038,370.1 L1044,368.0 L1050,366.0 L1056,363.9 L1062,361.6 L1068,358.8 L1074,356.8 L1080,355.1 L1086,354.4 L1090,354.4 L1090,355.7 L1086,355.7 L1080,356.6 L1074,358.7 L1068,360.9 L1062,363.8 L1056,366.2 L1050,368.3 L1044,370.5 L1038,372.6 L1032,374.6 L1026,376.6 L1020,378.5 L1014,380.2 L1008,381.9 L1002,383.5 L996,385.1 L990,386.6 L984,388.1 L978,389.5 L972,390.5 L966,391.5 L960,392.5 L954,393.5 L948,394.5 L942,395.5 L936,396.4 L930,397.3 L924,398.3 L918,399.2 L912,400.2 L906,401.1 L900,402.0 L894,402.7 L888,403.3 L882,403.9 L876,404.5 L870,405.2 L864,405.8 L858,406.4 L852,407.0 L846,407.6 L840,408.0 L834,408.4 L828,408.9 L822,409.3 L816,409.7 L810,410.2 L804,410.6 L798,411.1 L792,411.5 L786,411.9 L780,412.4 L774,412.8 L768,413.2 L762,413.7 L756,414.1 L750,414.3 L744,414.5 L738,414.7 L732,414.9 L726,415.1 L720,415.3 L714,415.4 L708,415.6 L702,415.7 L696,415.9 L690,416.1 L684,416.5 L678,416.8 L672,416.8 L666,416.8 L660,416.8 L654,416.8 L648,416.8 L642,416.9 L636,416.9 L630,416.9 L624,416.9 L618,416.9 L612,416.9 L606,417.0 L600,417.0 L594,417.0 L588,417.0 L582,417.0 L576,417.0 L570,417.0 L564,417.0 L558,417.0 L552,416.5 L546,416.5 L540,416.5 L534,416.5 L528,416.5 L522,416.5 L516,416.5 L510,416.4 L504,416.4 L498,416.4 L492,416.4 L486,416.4 L480,416.4 L474,416.4 L468,416.4 L462,416.3 L456,416.3 L450,416.3 L444,416.3 L438,416.3 L432,416.3 L426,416.3 L420,416.3 L414,416.3 L408,416.2 L402,416.2 L396,416.2 L390,416.2 L384,416.2 L378,416.2 L372,416.3 L366,416.4 L360,416.5 L354,416.5 L348,416.6 L342,416.7 L336,416.8 L330,417.0 L324,417.1 L318,417.3 L312,417.4 L306,417.6 L300,417.8 L294,418.0 L288,418.2 L282,418.4 L276,418.7 L270,418.9 L264,419.2 L258,419.5 L252,419.7 L246,420.1 L240,420.4 L234,420.7 L228,421.1 L222,421.5 L216,421.9 L210,422.3 L204,422.9 L198,423.7 L192,424.4 L186,425.2 L180,426.3 L174,427.5 L168,429.0 L162,430.7 L156,433.4 L150,433.4 Z" fill="url(#g10)"/><path d="M150,432.7 L156,432.7 L162,429.8 L168,428.0 L174,426.2 L180,425.0 L186,423.8 L192,422.9 L198,422.1 L204,421.3 L210,420.5 L216,420.1 L222,419.7 L228,419.3 L234,418.9 L240,418.5 L246,418.1 L252,417.8 L258,417.4 L264,417.2 L270,416.9 L276,416.6 L282,416.3 L288,416.1 L294,415.8 L300,415.6 L306,415.4 L312,415.2 L318,415.0 L324,414.9 L330,414.7 L336,414.5 L342,414.4 L348,414.2 L354,414.2 L360,414.1 L366,414.0 L372,413.9 L378,413.9 L384,413.8 L390,413.8 L396,413.8 L402,413.8 L408,413.8 L414,413.9 L420,413.9 L426,413.9 L432,413.9 L438,413.9 L444,413.9 L450,413.9 L456,413.9 L462,413.9 L468,414.0 L474,414.0 L480,414.0 L486,414.0 L492,414.0 L498,414.0 L504,414.0 L510,414.0 L516,414.0 L522,414.0 L528,414.1 L534,414.1 L540,414.1 L546,414.1 L552,414.1 L558,414.6 L564,414.6 L570,414.6 L576,414.6 L582,414.6 L588,414.6 L594,414.6 L600,414.6 L606,414.6 L612,414.6 L618,414.6 L624,414.5 L630,414.5 L636,414.5 L642,414.5 L648,414.5 L654,414.5 L660,414.5 L666,414.4 L672,414.4 L678,414.4 L684,414.2 L690,413.7 L696,413.5 L702,413.4 L708,413.2 L714,413.1 L720,412.9 L726,412.7 L732,412.5 L738,412.3 L744,412.1 L750,411.9 L756,411.7 L762,411.3 L768,410.9 L774,410.5 L780,410.1 L786,409.6 L792,409.2 L798,408.8 L804,408.4 L810,407.9 L816,407.5 L822,407.1 L828,406.6 L834,406.2 L840,405.8 L846,405.4 L852,404.9 L858,404.3 L864,403.6 L870,403.0 L876,402.4 L882,401.8 L888,401.2 L894,400.6 L900,400.0 L906,399.0 L912,398.1 L918,397.2 L924,396.3 L930,395.4 L936,394.5 L942,393.6 L948,392.6 L954,391.7 L960,390.7 L966,389.7 L972,388.7 L978,387.8 L984,386.4 L990,384.9 L996,383.4 L1002,381.9 L1008,380.2 L1014,378.6 L1020,376.9 L1026,375.0 L1032,373.0 L1038,371.1 L1044,369.0 L1050,366.9 L1056,364.8 L1062,362.4 L1068,359.6 L1074,357.6 L1080,355.7 L1086,354.9 L1090,354.9 L1090,356.2 L1086,356.2 L1080,357.2 L1074,359.5 L1068,361.8 L1062,364.7 L1056,367.1 L1050,369.3 L1044,371.5 L1038,373.6 L1032,375.6 L1026,377.6 L1020,379.6 L1014,381.2 L1008,382.9 L1002,384.6 L996,386.2 L990,387.7 L984,389.3 L978,390.7 L972,391.7 L966,392.7 L960,393.8 L954,394.8 L948,395.8 L942,396.7 L936,397.7 L930,398.6 L924,399.6 L918,400.6 L912,401.5 L906,402.5 L900,403.4 L894,404.0 L888,404.7 L882,405.3 L876,406.0 L870,406.6 L864,407.2 L858,407.9 L852,408.5 L846,409.0 L840,409.5 L834,409.9 L828,410.3 L822,410.8 L816,411.2 L810,411.7 L804,412.1 L798,412.6 L792,413.0 L786,413.4 L780,413.9 L774,414.3 L768,414.8 L762,415.2 L756,415.7 L750,415.9 L744,416.1 L738,416.3 L732,416.5 L726,416.7 L720,416.9 L714,417.0 L708,417.2 L702,417.3 L696,417.5 L690,417.7 L684,418.1 L678,418.3 L672,418.3 L666,418.4 L660,418.4 L654,418.4 L648,418.4 L642,418.4 L636,418.5 L630,418.5 L624,418.5 L618,418.5 L612,418.5 L606,418.5 L600,418.6 L594,418.6 L588,418.6 L582,418.6 L576,418.6 L570,418.6 L564,418.6 L558,418.6 L552,418.1 L546,418.1 L540,418.1 L534,418.1 L528,418.1 L522,418.1 L516,418.1 L510,418.1 L504,418.0 L498,418.0 L492,418.0 L486,418.0 L480,418.0 L474,418.0 L468,418.0 L462,418.0 L456,417.9 L450,417.9 L444,417.9 L438,417.9 L432,417.9 L426,417.9 L420,417.9 L414,417.8 L408,417.8 L402,417.8 L396,417.8 L390,417.8 L384,417.8 L378,417.8 L372,417.9 L366,418.0 L360,418.0 L354,418.1 L348,418.1 L342,418.2 L336,418.4 L330,418.5 L324,418.7 L318,418.8 L312,418.9 L306,419.1 L300,419.2 L294,419.4 L288,419.6 L282,419.9 L276,420.1 L270,420.3 L264,420.6 L258,420.8 L252,421.1 L246,421.4 L240,421.7 L234,422.0 L228,422.3 L222,422.7 L216,423.1 L210,423.4 L204,424.0 L198,424.7 L192,425.5 L186,426.2 L180,427.2 L174,428.3 L168,429.8 L162,431.3 L156,433.8 L150,433.8 Z" fill="url(#g11)"/><path d="M150,433.1 L156,433.1 L162,430.4 L168,428.7 L174,427.0 L180,425.8 L186,424.7 L192,423.9 L198,423.2 L204,422.4 L210,421.7 L216,421.3 L222,420.9 L228,420.5 L234,420.1 L240,419.8 L246,419.4 L252,419.1 L258,418.8 L264,418.5 L270,418.3 L276,418.0 L282,417.7 L288,417.5 L294,417.3 L300,417.0 L306,416.9 L312,416.7 L318,416.5 L324,416.4 L330,416.2 L336,416.1 L342,415.9 L348,415.8 L354,415.7 L360,415.7 L366,415.6 L372,415.5 L378,415.5 L384,415.4 L390,415.4 L396,415.4 L402,415.4 L408,415.4 L414,415.5 L420,415.5 L426,415.5 L432,415.5 L438,415.5 L444,415.5 L450,415.5 L456,415.5 L462,415.5 L468,415.6 L474,415.6 L480,415.6 L486,415.6 L492,415.6 L498,415.6 L504,415.6 L510,415.6 L516,415.6 L522,415.7 L528,415.7 L534,415.7 L540,415.7 L546,415.7 L552,415.7 L558,416.2 L564,416.2 L570,416.2 L576,416.2 L582,416.2 L588,416.2 L594,416.2 L600,416.2 L606,416.2 L612,416.2 L618,416.1 L624,416.1 L630,416.1 L636,416.1 L642,416.1 L648,416.1 L654,416.0 L660,416.0 L666,416.0 L672,416.0 L678,416.0 L684,415.7 L690,415.3 L696,415.1 L702,415.0 L708,414.8 L714,414.6 L720,414.5 L726,414.3 L732,414.1 L738,413.9 L744,413.7 L750,413.5 L756,413.3 L762,412.9 L768,412.4 L774,412.0 L780,411.6 L786,411.2 L792,410.7 L798,410.3 L804,409.9 L810,409.4 L816,409.0 L822,408.6 L828,408.1 L834,407.7 L840,407.3 L846,406.8 L852,406.3 L858,405.7 L864,405.1 L870,404.5 L876,403.8 L882,403.2 L888,402.6 L894,402.0 L900,401.3 L906,400.4 L912,399.5 L918,398.6 L924,397.6 L930,396.7 L936,395.8 L942,394.8 L948,393.9 L954,392.9 L960,391.9 L966,390.9 L972,389.9 L978,388.9 L984,387.6 L990,386.1 L996,384.5 L1002,383.0 L1008,381.3 L1014,379.7 L1020,378.0 L1026,376.0 L1032,374.1 L1038,372.1 L1044,370.0 L1050,367.9 L1056,365.7 L1062,363.3 L1068,360.5 L1074,358.3 L1080,356.3 L1086,355.4 L1090,355.4 L1090,356.8 L1086,356.8 L1080,357.8 L1074,360.2 L1068,362.6 L1062,365.6 L1056,368.0 L1050,370.3 L1044,372.5 L1038,374.6 L1032,376.6 L1026,378.6 L1020,380.6 L1014,382.3 L1008,384.0 L1002,385.7 L996,387.3 L990,388.9 L984,390.4 L978,391.8 L972,392.9 L966,393.9 L960,395.0 L954,396.0 L948,397.1 L942,398.0 L936,399.0 L930,400.0 L924,400.9 L918,401.9 L912,402.9 L906,403.8 L900,404.8 L894,405.4 L888,406.1 L882,406.7 L876,407.4 L870,408.0 L864,408.7 L858,409.3 L852,410.0 L846,410.5 L840,410.9 L834,411.4 L828,411.8 L822,412.3 L816,412.7 L810,413.2 L804,413.6 L798,414.1 L792,414.5 L786,415.0 L780,415.4 L774,415.9 L768,416.3 L762,416.8 L756,417.2 L750,417.4 L744,417.6 L738,417.8 L732,418.0 L726,418.2 L720,418.4 L714,418.6 L708,418.8 L702,418.9 L696,419.1 L690,419.2 L684,419.7 L678,419.9 L672,419.9 L666,419.9 L660,419.9 L654,420.0 L648,420.0 L642,420.0 L636,420.0 L630,420.0 L624,420.1 L618,420.1 L612,420.1 L606,420.1 L600,420.1 L594,420.1 L588,420.1 L582,420.1 L576,420.1 L570,420.1 L564,420.1 L558,420.1 L552,419.7 L546,419.7 L540,419.7 L534,419.7 L528,419.7 L522,419.7 L516,419.7 L510,419.7 L504,419.6 L498,419.6 L492,419.6 L486,419.6 L480,419.6 L474,419.6 L468,419.6 L462,419.6 L456,419.5 L450,419.5 L444,419.5 L438,419.5 L432,419.5 L426,419.5 L420,419.5 L414,419.4 L408,419.4 L402,419.4 L396,419.4 L390,419.4 L384,419.4 L378,419.4 L372,419.5 L366,419.5 L360,419.6 L354,419.6 L348,419.7 L342,419.8 L336,419.9 L330,420.0 L324,420.2 L318,420.3 L312,420.4 L306,420.6 L300,420.7 L294,420.9 L288,421.1 L282,421.3 L276,421.5 L270,421.7 L264,421.9 L258,422.1 L252,422.4 L246,422.7 L240,423.0 L234,423.3 L228,423.6 L222,423.9 L216,424.2 L210,424.6 L204,425.2 L198,425.8 L192,426.5 L186,427.1 L180,428.1 L174,429.1 L168,430.5 L162,431.9 L156,434.2 L150,434.2 Z" fill="url(#g12)"/><path d="M150,433.6 L156,433.6 L162,431.0 L168,429.4 L174,427.9 L180,426.7 L186,425.7 L192,424.9 L198,424.2 L204,423.5 L210,422.8 L216,422.5 L222,422.1 L228,421.7 L234,421.4 L240,421.1 L246,420.7 L252,420.4 L258,420.1 L264,419.9 L270,419.6 L276,419.4 L282,419.2 L288,418.9 L294,418.7 L300,418.5 L306,418.3 L312,418.2 L318,418.0 L324,417.9 L330,417.8 L336,417.6 L342,417.5 L348,417.4 L354,417.3 L360,417.2 L366,417.2 L372,417.1 L378,417.0 L384,417.0 L390,417.0 L396,417.0 L402,417.0 L408,417.0 L414,417.1 L420,417.1 L426,417.1 L432,417.1 L438,417.1 L444,417.1 L450,417.1 L456,417.1 L462,417.1 L468,417.2 L474,417.2 L480,417.2 L486,417.2 L492,417.2 L498,417.2 L504,417.2 L510,417.2 L516,417.3 L522,417.3 L528,417.3 L534,417.3 L540,417.3 L546,417.3 L552,417.3 L558,417.8 L564,417.8 L570,417.8 L576,417.8 L582,417.8 L588,417.8 L594,417.8 L600,417.8 L606,417.8 L612,417.7 L618,417.7 L624,417.7 L630,417.7 L636,417.7 L642,417.6 L648,417.6 L654,417.6 L660,417.6 L666,417.6 L672,417.6 L678,417.5 L684,417.3 L690,416.9 L696,416.7 L702,416.5 L708,416.4 L714,416.2 L720,416.1 L726,415.9 L732,415.7 L738,415.5 L744,415.3 L750,415.1 L756,414.9 L762,414.4 L768,414.0 L774,413.6 L780,413.1 L786,412.7 L792,412.2 L798,411.8 L804,411.4 L810,410.9 L816,410.5 L822,410.0 L828,409.6 L834,409.2 L840,408.7 L846,408.3 L852,407.8 L858,407.1 L864,406.5 L870,405.9 L876,405.2 L882,404.6 L888,404.0 L894,403.4 L900,402.7 L906,401.8 L912,400.8 L918,399.9 L924,398.9 L930,398.0 L936,397.0 L942,396.1 L948,395.2 L954,394.2 L960,393.1 L966,392.1 L972,391.1 L978,390.1 L984,388.7 L990,387.2 L996,385.6 L1002,384.1 L1008,382.4 L1014,380.7 L1020,379.1 L1026,377.1 L1032,375.1 L1038,373.1 L1044,371.0 L1050,368.8 L1056,366.6 L1062,364.2 L1068,361.3 L1074,359.1 L1080,356.9 L1086,356.0 L1090,356.0 L1090,357.3 L1086,357.3 L1080,358.4 L1074,361.0 L1068,363.4 L1062,366.5 L1056,369.0 L1050,371.2 L1044,373.5 L1038,375.6 L1032,377.6 L1026,379.7 L1020,381.7 L1014,383.4 L1008,385.1 L1002,386.8 L996,388.4 L990,390.0 L984,391.6 L978,393.0 L972,394.1 L966,395.1 L960,396.2 L954,397.3 L948,398.3 L942,399.3 L936,400.3 L930,401.3 L924,402.2 L918,403.2 L912,404.2 L906,405.2 L900,406.2 L894,406.8 L888,407.5 L882,408.1 L876,408.8 L870,409.5 L864,410.1 L858,410.8 L852,411.4 L846,411.9 L840,412.4 L834,412.9 L828,413.3 L822,413.8 L816,414.2 L810,414.7 L804,415.1 L798,415.6 L792,416.0 L786,416.5 L780,416.9 L774,417.4 L768,417.9 L762,418.3 L756,418.8 L750,419.0 L744,419.2 L738,419.4 L732,419.6 L726,419.8 L720,420.0 L714,420.2 L708,420.3 L702,420.5 L696,420.7 L690,420.8 L684,421.2 L678,421.5 L672,421.5 L666,421.5 L660,421.5 L654,421.5 L648,421.6 L642,421.6 L636,421.6 L630,421.6 L624,421.6 L618,421.7 L612,421.7 L606,421.7 L600,421.7 L594,421.7 L588,421.7 L582,421.7 L576,421.7 L570,421.7 L564,421.7 L558,421.7 L552,421.3 L546,421.3 L540,421.3 L534,421.3 L528,421.3 L522,421.3 L516,421.3 L510,421.3 L504,421.3 L498,421.2 L492,421.2 L486,421.2 L480,421.2 L474,421.2 L468,421.2 L462,421.2 L456,421.1 L450,421.1 L444,421.1 L438,421.1 L432,421.1 L426,421.1 L420,421.1 L414,421.0 L408,421.0 L402,421.0 L396,421.0 L390,421.0 L384,421.0 L378,421.0 L372,421.1 L366,421.1 L360,421.2 L354,421.2 L348,421.3 L342,421.3 L336,421.5 L330,421.6 L324,421.7 L318,421.8 L312,421.9 L306,422.0 L300,422.2 L294,422.3 L288,422.5 L282,422.7 L276,422.9 L270,423.1 L264,423.3 L258,423.5 L252,423.7 L246,424.0 L240,424.3 L234,424.5 L228,424.8 L222,425.1 L216,425.4 L210,425.7 L204,426.3 L198,426.9 L192,427.5 L186,428.1 L180,429.0 L174,429.9 L168,431.2 L162,432.5 L156,434.6 L150,434.6 Z" fill="url(#g13)"/><path d="M150,434.0 L156,434.0 L162,431.6 L168,430.1 L174,428.7 L180,427.6 L186,426.6 L192,426.0 L198,425.3 L204,424.6 L210,424.0 L216,423.7 L222,423.3 L228,423.0 L234,422.6 L240,422.3 L246,422.0 L252,421.7 L258,421.5 L264,421.2 L270,421.0 L276,420.8 L282,420.6 L288,420.4 L294,420.2 L300,420.0 L306,419.8 L312,419.7 L318,419.5 L324,419.4 L330,419.3 L336,419.1 L342,419.0 L348,418.9 L354,418.9 L360,418.8 L366,418.7 L372,418.7 L378,418.6 L384,418.6 L390,418.6 L396,418.6 L402,418.6 L408,418.6 L414,418.6 L420,418.7 L426,418.7 L432,418.7 L438,418.7 L444,418.7 L450,418.7 L456,418.7 L462,418.8 L468,418.8 L474,418.8 L480,418.8 L486,418.8 L492,418.8 L498,418.8 L504,418.8 L510,418.9 L516,418.9 L522,418.9 L528,418.9 L534,418.9 L540,418.9 L546,418.9 L552,418.9 L558,419.4 L564,419.4 L570,419.4 L576,419.4 L582,419.4 L588,419.4 L594,419.4 L600,419.4 L606,419.3 L612,419.3 L618,419.3 L624,419.3 L630,419.3 L636,419.2 L642,419.2 L648,419.2 L654,419.2 L660,419.2 L666,419.1 L672,419.1 L678,419.1 L684,418.9 L690,418.4 L696,418.3 L702,418.1 L708,418.0 L714,417.8 L720,417.6 L726,417.4 L732,417.2 L738,417.0 L744,416.8 L750,416.6 L756,416.4 L762,416.0 L768,415.6 L774,415.1 L780,414.6 L786,414.2 L792,413.8 L798,413.3 L804,412.9 L810,412.4 L816,412.0 L822,411.5 L828,411.1 L834,410.6 L840,410.2 L846,409.7 L852,409.2 L858,408.6 L864,408.0 L870,407.3 L876,406.7 L882,406.0 L888,405.4 L894,404.7 L900,404.1 L906,403.1 L912,402.2 L918,401.2 L924,400.3 L930,399.3 L936,398.3 L942,397.4 L948,396.4 L954,395.4 L960,394.4 L966,393.3 L972,392.3 L978,391.2 L984,389.9 L990,388.3 L996,386.7 L1002,385.1 L1008,383.5 L1014,381.8 L1020,380.1 L1026,378.1 L1032,376.1 L1038,374.1 L1044,372.0 L1050,369.8 L1056,367.6 L1062,365.1 L1068,362.2 L1074,359.9 L1080,357.5 L1086,356.5 L1090,356.5 L1090,357.8 L1086,357.8 L1080,359.0 L1074,361.7 L1068,364.3 L1062,367.3 L1056,369.9 L1050,372.2 L1044,374.4 L1038,376.6 L1032,378.7 L1026,380.7 L1020,382.7 L1014,384.4 L1008,386.1 L1002,387.8 L996,389.5 L990,391.1 L984,392.7 L978,394.2 L972,395.2 L966,396.3 L960,397.4 L954,398.5 L948,399.6 L942,400.6 L936,401.6 L930,402.6 L924,403.6 L918,404.6 L912,405.6 L906,406.6 L900,407.5 L894,408.2 L888,408.9 L882,409.5 L876,410.2 L870,410.9 L864,411.5 L858,412.2 L852,412.9 L846,413.4 L840,413.9 L834,414.3 L828,414.8 L822,415.2 L816,415.7 L810,416.2 L804,416.6 L798,417.1 L792,417.5 L786,418.0 L780,418.5 L774,418.9 L768,419.4 L762,419.9 L756,420.4 L750,420.6 L744,420.8 L738,421.0 L732,421.2 L726,421.4 L720,421.6 L714,421.7 L708,421.9 L702,422.1 L696,422.2 L690,422.4 L684,422.8 L678,423.0 L672,423.0 L666,423.1 L660,423.1 L654,423.1 L648,423.1 L642,423.2 L636,423.2 L630,423.2 L624,423.2 L618,423.2 L612,423.3 L606,423.3 L600,423.3 L594,423.3 L588,423.3 L582,423.3 L576,423.3 L570,423.3 L564,423.3 L558,423.3 L552,422.9 L546,422.9 L540,422.9 L534,422.9 L528,422.9 L522,422.9 L516,422.9 L510,422.9 L504,422.9 L498,422.9 L492,422.8 L486,422.8 L480,422.8 L474,422.8 L468,422.8 L462,422.8 L456,422.7 L450,422.7 L444,422.7 L438,422.7 L432,422.7 L426,422.7 L420,422.7 L414,422.6 L408,422.6 L402,422.6 L396,422.6 L390,422.6 L384,422.6 L378,422.6 L372,422.6 L366,422.7 L360,422.7 L354,422.8 L348,422.8 L342,422.9 L336,423.0 L330,423.1 L324,423.2 L318,423.3 L312,423.4 L306,423.5 L300,423.6 L294,423.8 L288,424.0 L282,424.1 L276,424.3 L270,424.5 L264,424.7 L258,424.8 L252,425.1 L246,425.3 L240,425.5 L234,425.8 L228,426.0 L222,426.3 L216,426.6 L210,426.9 L204,427.4 L198,427.9 L192,428.5 L186,429.0 L180,429.8 L174,430.7 L168,431.9 L162,433.1 L156,435.1 L150,435.1 Z" fill="url(#g14)"/><path d="M150,434.4 L156,434.4 L162,432.2 L168,430.8 L174,429.5 L180,428.5 L186,427.6 L192,427.0 L198,426.3 L204,425.7 L210,425.2 L216,424.8 L222,424.5 L228,424.2 L234,423.9 L240,423.6 L246,423.3 L252,423.1 L258,422.8 L264,422.6 L270,422.4 L276,422.2 L282,422.0 L288,421.8 L294,421.6 L300,421.4 L306,421.3 L312,421.2 L318,421.1 L324,420.9 L330,420.8 L336,420.7 L342,420.6 L348,420.5 L354,420.4 L360,420.4 L366,420.3 L372,420.3 L378,420.2 L384,420.2 L390,420.2 L396,420.2 L402,420.2 L408,420.2 L414,420.2 L420,420.3 L426,420.3 L432,420.3 L438,420.3 L444,420.3 L450,420.3 L456,420.3 L462,420.4 L468,420.4 L474,420.4 L480,420.4 L486,420.4 L492,420.4 L498,420.4 L504,420.5 L510,420.5 L516,420.5 L522,420.5 L528,420.5 L534,420.5 L540,420.5 L546,420.5 L552,420.5 L558,420.9 L564,420.9 L570,420.9 L576,420.9 L582,420.9 L588,420.9 L594,420.9 L600,420.9 L606,420.9 L612,420.9 L618,420.9 L624,420.9 L630,420.8 L636,420.8 L642,420.8 L648,420.8 L654,420.8 L660,420.7 L666,420.7 L672,420.7 L678,420.7 L684,420.5 L690,420.0 L696,419.9 L702,419.7 L708,419.5 L714,419.4 L720,419.2 L726,419.0 L732,418.8 L738,418.6 L744,418.4 L750,418.2 L756,418.0 L762,417.6 L768,417.1 L774,416.6 L780,416.2 L786,415.7 L792,415.3 L798,414.8 L804,414.4 L810,413.9 L816,413.5 L822,413.0 L828,412.6 L834,412.1 L840,411.7 L846,411.2 L852,410.7 L858,410.0 L864,409.4 L870,408.7 L876,408.1 L882,407.4 L888,406.8 L894,406.1 L900,405.5 L906,404.5 L912,403.5 L918,402.6 L924,401.6 L930,400.6 L936,399.6 L942,398.7 L948,397.7 L954,396.7 L960,395.6 L966,394.5 L972,393.5 L978,392.4 L984,391.0 L990,389.4 L996,387.8 L1002,386.2 L1008,384.5 L1014,382.8 L1020,381.1 L1026,379.1 L1032,377.1 L1038,375.1 L1044,373.0 L1050,370.7 L1056,368.5 L1062,366.0 L1068,363.0 L1074,360.6 L1080,358.1 L1086,357.0 L1090,357.0 L1090,358.4 L1086,358.4 L1080,359.6 L1074,362.5 L1068,365.1 L1062,368.2 L1056,370.8 L1050,373.1 L1044,375.4 L1038,377.6 L1032,379.7 L1026,381.7 L1020,383.8 L1014,385.5 L1008,387.2 L1002,388.9 L996,390.6 L990,392.2 L984,393.9 L978,395.3 L972,396.4 L966,397.5 L960,398.6 L954,399.8 L948,400.8 L942,401.8 L936,402.9 L930,403.9 L924,404.9 L918,405.9 L912,406.9 L906,407.9 L900,408.9 L894,409.6 L888,410.3 L882,411.0 L876,411.6 L870,412.3 L864,413.0 L858,413.7 L852,414.3 L846,414.9 L840,415.3 L834,415.8 L828,416.3 L822,416.7 L816,417.2 L810,417.7 L804,418.1 L798,418.6 L792,419.1 L786,419.5 L780,420.0 L774,420.5 L768,421.0 L762,421.5 L756,422.0 L750,422.2 L744,422.4 L738,422.6 L732,422.8 L726,423.0 L720,423.2 L714,423.3 L708,423.5 L702,423.7 L696,423.8 L690,424.0 L684,424.4 L678,424.6 L672,424.6 L666,424.6 L660,424.7 L654,424.7 L648,424.7 L642,424.7 L636,424.7 L630,424.8 L624,424.8 L618,424.8 L612,424.8 L606,424.9 L600,424.9 L594,424.9 L588,424.9 L582,424.9 L576,424.9 L570,424.9 L564,424.9 L558,424.9 L552,424.6 L546,424.6 L540,424.6 L534,424.6 L528,424.5 L522,424.5 L516,424.5 L510,424.5 L504,424.5 L498,424.5 L492,424.4 L486,424.4 L480,424.4 L474,424.4 L468,424.4 L462,424.4 L456,424.3 L450,424.3 L444,424.3 L438,424.3 L432,424.3 L426,424.3 L420,424.3 L414,424.2 L408,424.2 L402,424.2 L396,424.2 L390,424.2 L384,424.2 L378,424.2 L372,424.2 L366,424.3 L360,424.3 L354,424.3 L348,424.4 L342,424.4 L336,424.5 L330,424.6 L324,424.7 L318,424.8 L312,424.9 L306,425.0 L300,425.1 L294,425.2 L288,425.4 L282,425.5 L276,425.7 L270,425.9 L264,426.0 L258,426.2 L252,426.4 L246,426.6 L240,426.8 L234,427.0 L228,427.3 L222,427.5 L216,427.8 L210,428.0 L204,428.5 L198,429.0 L192,429.5 L186,430.0 L180,430.7 L174,431.5 L168,432.6 L162,433.7 L156,435.5 L150,435.5 Z" fill="url(#g15)"/><path d="M150,434.9 L156,434.9 L162,432.8 L168,431.5 L174,430.3 L180,429.4 L186,428.6 L192,428.0 L198,427.4 L204,426.8 L210,426.3 L216,426.0 L222,425.7 L228,425.4 L234,425.2 L240,424.9 L246,424.6 L252,424.4 L258,424.2 L264,424.0 L270,423.8 L276,423.6 L282,423.4 L288,423.2 L294,423.1 L300,422.9 L306,422.8 L312,422.7 L318,422.6 L324,422.4 L330,422.3 L336,422.2 L342,422.1 L348,422.0 L354,422.0 L360,421.9 L366,421.9 L372,421.8 L378,421.8 L384,421.8 L390,421.8 L396,421.8 L402,421.8 L408,421.8 L414,421.8 L420,421.9 L426,421.9 L432,421.9 L438,421.9 L444,421.9 L450,421.9 L456,421.9 L462,422.0 L468,422.0 L474,422.0 L480,422.0 L486,422.0 L492,422.0 L498,422.0 L504,422.1 L510,422.1 L516,422.1 L522,422.1 L528,422.1 L534,422.1 L540,422.1 L546,422.1 L552,422.1 L558,422.5 L564,422.5 L570,422.5 L576,422.5 L582,422.5 L588,422.5 L594,422.5 L600,422.5 L606,422.5 L612,422.5 L618,422.4 L624,422.4 L630,422.4 L636,422.4 L642,422.4 L648,422.3 L654,422.3 L660,422.3 L666,422.3 L672,422.3 L678,422.2 L684,422.0 L690,421.6 L696,421.5 L702,421.3 L708,421.1 L714,421.0 L720,420.8 L726,420.6 L732,420.4 L738,420.2 L744,420.0 L750,419.8 L756,419.6 L762,419.1 L768,418.7 L774,418.2 L780,417.7 L786,417.2 L792,416.8 L798,416.3 L804,415.9 L810,415.4 L816,415.0 L822,414.5 L828,414.0 L834,413.6 L840,413.1 L846,412.7 L852,412.2 L858,411.5 L864,410.8 L870,410.2 L876,409.5 L882,408.8 L888,408.2 L894,407.5 L900,406.9 L906,405.9 L912,404.9 L918,403.9 L924,402.9 L930,401.9 L936,400.9 L942,399.9 L948,398.9 L954,397.9 L960,396.8 L966,395.7 L972,394.7 L978,393.6 L984,392.1 L990,390.5 L996,388.9 L1002,387.3 L1008,385.6 L1014,383.9 L1020,382.2 L1026,380.2 L1032,378.2 L1038,376.1 L1044,373.9 L1050,371.7 L1056,369.4 L1062,366.9 L1068,363.9 L1074,361.4 L1080,358.7 L1086,357.6 L1090,357.6 L1090,358.9 L1086,358.9 L1080,360.2 L1074,363.2 L1068,366.0 L1062,369.1 L1056,371.7 L1050,374.1 L1044,376.4 L1038,378.7 L1032,380.7 L1026,382.8 L1020,384.8 L1014,386.6 L1008,388.3 L1002,390.0 L996,391.7 L990,393.3 L984,395.0 L978,396.5 L972,397.6 L966,398.7 L960,399.9 L954,401.0 L948,402.1 L942,403.1 L936,404.2 L930,405.2 L924,406.2 L918,407.2 L912,408.3 L906,409.3 L900,410.3 L894,411.0 L888,411.7 L882,412.4 L876,413.0 L870,413.7 L864,414.4 L858,415.1 L852,415.8 L846,416.3 L840,416.8 L834,417.3 L828,417.7 L822,418.2 L816,418.7 L810,419.2 L804,419.6 L798,420.1 L792,420.6 L786,421.0 L780,421.5 L774,422.0 L768,422.5 L762,423.0 L756,423.5 L750,423.7 L744,423.9 L738,424.1 L732,424.3 L726,424.5 L720,424.7 L714,424.9 L708,425.1 L702,425.2 L696,425.4 L690,425.6 L684,426.0 L678,426.1 L672,426.2 L666,426.2 L660,426.2 L654,426.2 L648,426.3 L642,426.3 L636,426.3 L630,426.3 L624,426.4 L618,426.4 L612,426.4 L606,426.4 L600,426.5 L594,426.5 L588,426.5 L582,426.5 L576,426.5 L570,426.5 L564,426.5 L558,426.5 L552,426.2 L546,426.2 L540,426.2 L534,426.2 L528,426.2 L522,426.1 L516,426.1 L510,426.1 L504,426.1 L498,426.1 L492,426.1 L486,426.0 L480,426.0 L474,426.0 L468,426.0 L462,426.0 L456,426.0 L450,425.9 L444,425.9 L438,425.9 L432,425.9 L426,425.9 L420,425.8 L414,425.8 L408,425.8 L402,425.8 L396,425.8 L390,425.8 L384,425.7 L378,425.8 L372,425.8 L366,425.8 L360,425.9 L354,425.9 L348,425.9 L342,426.0 L336,426.1 L330,426.1 L324,426.2 L318,426.3 L312,426.4 L306,426.5 L300,426.6 L294,426.7 L288,426.8 L282,427.0 L276,427.1 L270,427.3 L264,427.4 L258,427.5 L252,427.7 L246,427.9 L240,428.1 L234,428.3 L228,428.5 L222,428.7 L216,429.0 L210,429.2 L204,429.6 L198,430.1 L192,430.5 L186,431.0 L180,431.6 L174,432.3 L168,433.3 L162,434.3 L156,435.9 L150,435.9 Z" fill="url(#g16)"/><path d="M150,435.3 L156,435.3 L162,433.4 L168,432.2 L174,431.1 L180,430.3 L186,429.5 L192,429.0 L198,428.5 L204,427.9 L210,427.5 L216,427.2 L222,426.9 L228,426.7 L234,426.4 L240,426.2 L246,426.0 L252,425.7 L258,425.5 L264,425.3 L270,425.2 L276,425.0 L282,424.8 L288,424.7 L294,424.5 L300,424.4 L306,424.3 L312,424.2 L318,424.1 L324,424.0 L330,423.9 L336,423.8 L342,423.7 L348,423.6 L354,423.5 L360,423.5 L366,423.5 L372,423.4 L378,423.4 L384,423.4 L390,423.4 L396,423.4 L402,423.4 L408,423.4 L414,423.4 L420,423.5 L426,423.5 L432,423.5 L438,423.5 L444,423.5 L450,423.5 L456,423.5 L462,423.6 L468,423.6 L474,423.6 L480,423.6 L486,423.6 L492,423.6 L498,423.7 L504,423.7 L510,423.7 L516,423.7 L522,423.7 L528,423.7 L534,423.7 L540,423.7 L546,423.7 L552,423.7 L558,424.1 L564,424.1 L570,424.1 L576,424.1 L582,424.1 L588,424.1 L594,424.1 L600,424.1 L606,424.1 L612,424.1 L618,424.0 L624,424.0 L630,424.0 L636,424.0 L642,423.9 L648,423.9 L654,423.9 L660,423.9 L666,423.8 L672,423.8 L678,423.8 L684,423.6 L690,423.2 L696,423.0 L702,422.9 L708,422.7 L714,422.5 L720,422.4 L726,422.2 L732,422.0 L738,421.8 L744,421.6 L750,421.4 L756,421.2 L762,420.7 L768,420.2 L774,419.7 L780,419.2 L786,418.8 L792,418.3 L798,417.8 L804,417.4 L810,416.9 L816,416.5 L822,416.0 L828,415.5 L834,415.1 L840,414.6 L846,414.1 L852,413.6 L858,412.9 L864,412.3 L870,411.6 L876,410.9 L882,410.3 L888,409.6 L894,408.9 L900,408.2 L906,407.2 L912,406.2 L918,405.2 L924,404.2 L930,403.2 L936,402.2 L942,401.2 L948,400.2 L954,399.1 L960,398.0 L966,396.9 L972,395.8 L978,394.7 L984,393.3 L990,391.7 L996,390.0 L1002,388.4 L1008,386.7 L1014,385.0 L1020,383.2 L1026,381.2 L1032,379.2 L1038,377.1 L1044,374.9 L1050,372.6 L1056,370.3 L1062,367.8 L1068,364.7 L1074,362.1 L1080,359.3 L1086,358.1 L1090,358.1 L1090,359.4 L1086,359.4 L1080,360.8 L1074,364.0 L1068,366.8 L1062,370.0 L1056,372.7 L1050,375.0 L1044,377.4 L1038,379.7 L1032,381.7 L1026,383.8 L1020,385.9 L1014,387.6 L1008,389.4 L1002,391.1 L996,392.8 L990,394.5 L984,396.1 L978,397.6 L972,398.8 L966,399.9 L960,401.1 L954,402.2 L948,403.4 L942,404.4 L936,405.4 L930,406.5 L924,407.5 L918,408.6 L912,409.6 L906,410.6 L900,411.7 L894,412.4 L888,413.1 L882,413.8 L876,414.5 L870,415.2 L864,415.9 L858,416.6 L852,417.3 L846,417.8 L840,418.3 L834,418.8 L828,419.2 L822,419.7 L816,420.2 L810,420.7 L804,421.1 L798,421.6 L792,422.1 L786,422.6 L780,423.0 L774,423.6 L768,424.1 L762,424.6 L756,425.1 L750,425.3 L744,425.5 L738,425.7 L732,425.9 L726,426.1 L720,426.3 L714,426.5 L708,426.7 L702,426.8 L696,427.0 L690,427.2 L684,427.5 L678,427.7 L672,427.7 L666,427.8 L660,427.8 L654,427.8 L648,427.8 L642,427.9 L636,427.9 L630,427.9 L624,427.9 L618,428.0 L612,428.0 L606,428.0 L600,428.1 L594,428.1 L588,428.1 L582,428.1 L576,428.1 L570,428.1 L564,428.1 L558,428.1 L552,427.8 L546,427.8 L540,427.8 L534,427.8 L528,427.8 L522,427.8 L516,427.7 L510,427.7 L504,427.7 L498,427.7 L492,427.7 L486,427.6 L480,427.6 L474,427.6 L468,427.6 L462,427.6 L456,427.6 L450,427.5 L444,427.5 L438,427.5 L432,427.5 L426,427.5 L420,427.4 L414,427.4 L408,427.4 L402,427.4 L396,427.4 L390,427.4 L384,427.3 L378,427.4 L372,427.4 L366,427.4 L360,427.4 L354,427.5 L348,427.5 L342,427.5 L336,427.6 L330,427.7 L324,427.7 L318,427.8 L312,427.9 L306,428.0 L300,428.0 L294,428.1 L288,428.3 L282,428.4 L276,428.5 L270,428.6 L264,428.8 L258,428.9 L252,429.0 L246,429.2 L240,429.4 L234,429.6 L228,429.8 L222,430.0 L216,430.2 L210,430.4 L204,430.7 L198,431.1 L192,431.5 L186,431.9 L180,432.5 L174,433.1 L168,434.0 L162,434.9 L156,436.4 L150,436.4 Z" fill="url(#g17)"/><path d="M150,435.7 L156,435.7 L162,434.0 L168,432.9 L174,431.9 L180,431.2 L186,430.5 L192,430.0 L198,429.5 L204,429.0 L210,428.6 L216,428.4 L222,428.1 L228,427.9 L234,427.7 L240,427.5 L246,427.3 L252,427.1 L258,426.9 L264,426.7 L270,426.6 L276,426.4 L282,426.2 L288,426.1 L294,426.0 L300,425.8 L306,425.7 L312,425.6 L318,425.6 L324,425.5 L330,425.4 L336,425.3 L342,425.2 L348,425.1 L354,425.1 L360,425.1 L366,425.0 L372,425.0 L378,425.0 L384,424.9 L390,425.0 L396,425.0 L402,425.0 L408,425.0 L414,425.0 L420,425.0 L426,425.1 L432,425.1 L438,425.1 L444,425.1 L450,425.1 L456,425.2 L462,425.2 L468,425.2 L474,425.2 L480,425.2 L486,425.2 L492,425.3 L498,425.3 L504,425.3 L510,425.3 L516,425.3 L522,425.3 L528,425.4 L534,425.4 L540,425.4 L546,425.4 L552,425.4 L558,425.7 L564,425.7 L570,425.7 L576,425.7 L582,425.7 L588,425.7 L594,425.7 L600,425.7 L606,425.7 L612,425.6 L618,425.6 L624,425.6 L630,425.6 L636,425.5 L642,425.5 L648,425.5 L654,425.5 L660,425.4 L666,425.4 L672,425.4 L678,425.4 L684,425.2 L690,424.8 L696,424.6 L702,424.5 L708,424.3 L714,424.1 L720,423.9 L726,423.7 L732,423.5 L738,423.3 L744,423.1 L750,422.9 L756,422.8 L762,422.2 L768,421.8 L774,421.2 L780,420.8 L786,420.3 L792,419.8 L798,419.3 L804,418.9 L810,418.4 L816,417.9 L822,417.5 L828,417.0 L834,416.5 L840,416.1 L846,415.6 L852,415.1 L858,414.4 L864,413.7 L870,413.0 L876,412.3 L882,411.7 L888,411.0 L894,410.3 L900,409.6 L906,408.6 L912,407.6 L918,406.6 L924,405.5 L930,404.5 L936,403.5 L942,402.5 L948,401.5 L954,400.4 L960,399.3 L966,398.1 L972,397.0 L978,395.9 L984,394.4 L990,392.8 L996,391.1 L1002,389.5 L1008,387.7 L1014,386.0 L1020,384.3 L1026,382.2 L1032,380.2 L1038,378.1 L1044,375.9 L1050,373.6 L1056,371.3 L1062,368.7 L1068,365.6 L1074,362.9 L1080,359.9 L1086,358.6 L1090,358.6 L1090,360.0 L1086,360.0 L1080,361.4 L1074,364.7 L1068,367.7 L1062,370.9 L1056,373.6 L1050,376.0 L1044,378.4 L1038,380.7 L1032,382.8 L1026,384.8 L1020,386.9 L1014,388.7 L1008,390.4 L1002,392.2 L996,393.9 L990,395.6 L984,397.3 L978,398.8 L972,400.0 L966,401.2 L960,402.3 L954,403.5 L948,404.6 L942,405.7 L936,406.7 L930,407.8 L924,408.8 L918,409.9 L912,411.0 L906,412.0 L900,413.1 L894,413.8 L888,414.5 L882,415.2 L876,415.9 L870,416.6 L864,417.3 L858,418.0 L852,418.7 L846,419.3 L840,419.7 L834,420.2 L828,420.7 L822,421.2 L816,421.7 L810,422.2 L804,422.6 L798,423.1 L792,423.6 L786,424.1 L780,424.6 L774,425.1 L768,425.6 L762,426.2 L756,426.7 L750,426.9 L744,427.1 L738,427.3 L732,427.5 L726,427.7 L720,427.9 L714,428.1 L708,428.2 L702,428.4 L696,428.6 L690,428.8 L684,429.1 L678,429.3 L672,429.3 L666,429.3 L660,429.4 L654,429.4 L648,429.4 L642,429.4 L636,429.5 L630,429.5 L624,429.5 L618,429.6 L612,429.6 L606,429.6 L600,429.6 L594,429.6 L588,429.6 L582,429.6 L576,429.6 L570,429.6 L564,429.6 L558,429.6 L552,429.4 L546,429.4 L540,429.4 L534,429.4 L528,429.4 L522,429.4 L516,429.3 L510,429.3 L504,429.3 L498,429.3 L492,429.3 L486,429.3 L480,429.2 L474,429.2 L468,429.2 L462,429.2 L456,429.2 L450,429.1 L444,429.1 L438,429.1 L432,429.1 L426,429.1 L420,429.0 L414,429.0 L408,429.0 L402,429.0 L396,429.0 L390,428.9 L384,428.9 L378,428.9 L372,429.0 L366,429.0 L360,429.0 L354,429.0 L348,429.0 L342,429.1 L336,429.1 L330,429.2 L324,429.3 L318,429.3 L312,429.4 L306,429.4 L300,429.5 L294,429.6 L288,429.7 L282,429.8 L276,429.9 L270,430.0 L264,430.1 L258,430.2 L252,430.4 L246,430.5 L240,430.7 L234,430.8 L228,431.0 L222,431.2 L216,431.3 L210,431.5 L204,431.8 L198,432.2 L192,432.5 L186,432.9 L180,433.4 L174,434.0 L168,434.7 L162,435.5 L156,436.8 L150,436.8 Z" fill="url(#g18)"/><path d="M150,436.1 L156,436.1 L162,434.6 L168,433.7 L174,432.7 L180,432.1 L186,431.4 L192,431.0 L198,430.6 L204,430.2 L210,429.8 L216,429.6 L222,429.4 L228,429.1 L234,428.9 L240,428.7 L246,428.6 L252,428.4 L258,428.2 L264,428.1 L270,427.9 L276,427.8 L282,427.7 L288,427.5 L294,427.4 L300,427.3 L306,427.2 L312,427.1 L318,427.1 L324,427.0 L330,426.9 L336,426.8 L342,426.8 L348,426.7 L354,426.7 L360,426.6 L366,426.6 L372,426.6 L378,426.6 L384,426.5 L390,426.6 L396,426.6 L402,426.6 L408,426.6 L414,426.6 L420,426.6 L426,426.7 L432,426.7 L438,426.7 L444,426.7 L450,426.7 L456,426.8 L462,426.8 L468,426.8 L474,426.8 L480,426.8 L486,426.8 L492,426.9 L498,426.9 L504,426.9 L510,426.9 L516,426.9 L522,426.9 L528,427.0 L534,427.0 L540,427.0 L546,427.0 L552,427.0 L558,427.3 L564,427.3 L570,427.3 L576,427.3 L582,427.3 L588,427.3 L594,427.3 L600,427.3 L606,427.2 L612,427.2 L618,427.2 L624,427.2 L630,427.1 L636,427.1 L642,427.1 L648,427.1 L654,427.0 L660,427.0 L666,427.0 L672,427.0 L678,426.9 L684,426.7 L690,426.4 L696,426.2 L702,426.0 L708,425.9 L714,425.7 L720,425.5 L726,425.3 L732,425.1 L738,424.9 L744,424.7 L750,424.5 L756,424.3 L762,423.8 L768,423.3 L774,422.8 L780,422.3 L786,421.8 L792,421.3 L798,420.9 L804,420.4 L810,419.9 L816,419.4 L822,419.0 L828,418.5 L834,418.0 L840,417.5 L846,417.1 L852,416.5 L858,415.8 L864,415.1 L870,414.4 L876,413.8 L882,413.1 L888,412.4 L894,411.7 L900,411.0 L906,410.0 L912,408.9 L918,407.9 L924,406.9 L930,405.8 L936,404.8 L942,403.8 L948,402.7 L954,401.6 L960,400.5 L966,399.3 L972,398.2 L978,397.1 L984,395.6 L990,393.9 L996,392.2 L1002,390.6 L1008,388.8 L1014,387.1 L1020,385.4 L1026,383.3 L1032,381.2 L1038,379.2 L1044,376.9 L1050,374.6 L1056,372.2 L1062,369.6 L1068,366.4 L1074,363.6 L1080,360.5 L1086,359.2 L1090,359.2 L1090,360.5 L1086,360.5 L1080,362.1 L1074,365.5 L1068,368.5 L1062,371.8 L1056,374.5 L1050,376.9 L1044,379.4 L1038,381.7 L1032,383.8 L1026,385.9 L1020,388.0 L1014,389.7 L1008,391.5 L1002,393.3 L996,395.0 L990,396.7 L984,398.4 L978,400.0 L972,401.2 L966,402.4 L960,403.5 L954,404.7 L948,405.9 L942,407.0 L936,408.0 L930,409.1 L924,410.2 L918,411.2 L912,412.3 L906,413.4 L900,414.4 L894,415.2 L888,415.9 L882,416.6 L876,417.3 L870,418.0 L864,418.7 L858,419.5 L852,420.2 L846,420.7 L840,421.2 L834,421.7 L828,422.2 L822,422.7 L816,423.2 L810,423.7 L804,424.1 L798,424.6 L792,425.1 L786,425.6 L780,426.1 L774,426.6 L768,427.2 L762,427.7 L756,428.3 L750,428.5 L744,428.7 L738,428.9 L732,429.1 L726,429.3 L720,429.5 L714,429.6 L708,429.8 L702,430.0 L696,430.2 L690,430.4 L684,430.7 L678,430.8 L672,430.9 L666,430.9 L660,430.9 L654,431.0 L648,431.0 L642,431.0 L636,431.0 L630,431.1 L624,431.1 L618,431.1 L612,431.2 L606,431.2 L600,431.2 L594,431.2 L588,431.2 L582,431.2 L576,431.2 L570,431.2 L564,431.2 L558,431.2 L552,431.0 L546,431.0 L540,431.0 L534,431.0 L528,431.0 L522,431.0 L516,431.0 L510,430.9 L504,430.9 L498,430.9 L492,430.9 L486,430.9 L480,430.8 L474,430.8 L468,430.8 L462,430.8 L456,430.8 L450,430.7 L444,430.7 L438,430.7 L432,430.7 L426,430.7 L420,430.6 L414,430.6 L408,430.6 L402,430.6 L396,430.6 L390,430.5 L384,430.5 L378,430.5 L372,430.5 L366,430.6 L360,430.6 L354,430.6 L348,430.6 L342,430.6 L336,430.7 L330,430.7 L324,430.8 L318,430.8 L312,430.9 L306,430.9 L300,431.0 L294,431.0 L288,431.1 L282,431.2 L276,431.3 L270,431.4 L264,431.5 L258,431.6 L252,431.7 L246,431.8 L240,432.0 L234,432.1 L228,432.2 L222,432.4 L216,432.5 L210,432.7 L204,432.9 L198,433.2 L192,433.5 L186,433.8 L180,434.3 L174,434.8 L168,435.4 L162,436.1 L156,437.2 L150,437.2 Z" fill="url(#g19)"/><path d="M150,436.6 L156,436.6 L162,435.2 L168,434.4 L174,433.6 L180,433.0 L186,432.4 L192,432.0 L198,431.6 L204,431.3 L210,430.9 L216,430.7 L222,430.6 L228,430.4 L234,430.2 L240,430.0 L246,429.9 L252,429.7 L258,429.6 L264,429.4 L270,429.3 L276,429.2 L282,429.1 L288,429.0 L294,428.9 L300,428.8 L306,428.7 L312,428.6 L318,428.6 L324,428.5 L330,428.4 L336,428.4 L342,428.3 L348,428.3 L354,428.2 L360,428.2 L366,428.2 L372,428.2 L378,428.1 L384,428.1 L390,428.2 L396,428.2 L402,428.2 L408,428.2 L414,428.2 L420,428.2 L426,428.3 L432,428.3 L438,428.3 L444,428.3 L450,428.3 L456,428.4 L462,428.4 L468,428.4 L474,428.4 L480,428.4 L486,428.4 L492,428.5 L498,428.5 L504,428.5 L510,428.5 L516,428.5 L522,428.6 L528,428.6 L534,428.6 L540,428.6 L546,428.6 L552,428.6 L558,428.8 L564,428.8 L570,428.8 L576,428.8 L582,428.8 L588,428.8 L594,428.8 L600,428.8 L606,428.8 L612,428.8 L618,428.8 L624,428.7 L630,428.7 L636,428.7 L642,428.7 L648,428.6 L654,428.6 L660,428.6 L666,428.5 L672,428.5 L678,428.5 L684,428.3 L690,428.0 L696,427.8 L702,427.6 L708,427.4 L714,427.3 L720,427.1 L726,426.9 L732,426.7 L738,426.5 L744,426.3 L750,426.1 L756,425.9 L762,425.4 L768,424.9 L774,424.3 L780,423.8 L786,423.3 L792,422.8 L798,422.4 L804,421.9 L810,421.4 L816,420.9 L822,420.4 L828,420.0 L834,419.5 L840,419.0 L846,418.5 L852,418.0 L858,417.3 L864,416.6 L870,415.9 L876,415.2 L882,414.5 L888,413.8 L894,413.1 L900,412.4 L906,411.3 L912,410.3 L918,409.2 L924,408.2 L930,407.1 L936,406.1 L942,405.0 L948,404.0 L954,402.9 L960,401.7 L966,400.5 L972,399.4 L978,398.2 L984,396.7 L990,395.0 L996,393.3 L1002,391.6 L1008,389.9 L1014,388.1 L1020,386.4 L1026,384.3 L1032,382.2 L1038,380.2 L1044,377.9 L1050,375.5 L1056,373.1 L1062,370.5 L1068,367.2 L1074,364.4 L1080,361.1 L1086,359.7 L1090,359.7 L1090,361.1 L1086,361.1 L1080,362.7 L1074,366.3 L1068,369.4 L1062,372.7 L1056,375.4 L1050,377.9 L1044,380.3 L1038,382.7 L1032,384.8 L1026,386.9 L1020,389.0 L1014,390.8 L1008,392.6 L1002,394.3 L996,396.1 L990,397.8 L984,399.6 L978,401.1 L972,402.3 L966,403.6 L960,404.8 L954,406.0 L948,407.1 L942,408.2 L936,409.3 L930,410.4 L924,411.5 L918,412.6 L912,413.7 L906,414.7 L900,415.8 L894,416.5 L888,417.3 L882,418.0 L876,418.7 L870,419.4 L864,420.2 L858,420.9 L852,421.6 L846,422.2 L840,422.7 L834,423.2 L828,423.7 L822,424.2 L816,424.7 L810,425.1 L804,425.6 L798,426.1 L792,426.6 L786,427.1 L780,427.6 L774,428.2 L768,428.7 L762,429.3 L756,429.8 L750,430.0 L744,430.2 L738,430.4 L732,430.6 L726,430.8 L720,431.0 L714,431.2 L708,431.4 L702,431.6 L696,431.8 L690,431.9 L684,432.2 L678,432.4 L672,432.4 L666,432.5 L660,432.5 L654,432.5 L648,432.6 L642,432.6 L636,432.6 L630,432.6 L624,432.7 L618,432.7 L612,432.7 L606,432.8 L600,432.8 L594,432.8 L588,432.8 L582,432.8 L576,432.8 L570,432.8 L564,432.8 L558,432.8 L552,432.6 L546,432.6 L540,432.6 L534,432.6 L528,432.6 L522,432.6 L516,432.6 L510,432.6 L504,432.5 L498,432.5 L492,432.5 L486,432.5 L480,432.4 L474,432.4 L468,432.4 L462,432.4 L456,432.4 L450,432.3 L444,432.3 L438,432.3 L432,432.3 L426,432.3 L420,432.2 L414,432.2 L408,432.2 L402,432.2 L396,432.2 L390,432.1 L384,432.1 L378,432.1 L372,432.1 L366,432.1 L360,432.1 L354,432.1 L348,432.1 L342,432.2 L336,432.2 L330,432.2 L324,432.3 L318,432.3 L312,432.4 L306,432.4 L300,432.4 L294,432.5 L288,432.6 L282,432.6 L276,432.7 L270,432.8 L264,432.9 L258,432.9 L252,433.0 L246,433.1 L240,433.2 L234,433.3 L228,433.5 L222,433.6 L216,433.7 L210,433.8 L204,434.0 L198,434.3 L192,434.6 L186,434.8 L180,435.2 L174,435.6 L168,436.1 L162,436.7 L156,437.6 L150,437.6 Z" fill="url(#g20)"/><path d="M150,437.0 L156,437.0 L162,435.8 L168,435.1 L174,434.4 L180,433.9 L186,433.4 L192,433.0 L198,432.7 L204,432.4 L210,432.1 L216,431.9 L222,431.8 L228,431.6 L234,431.5 L240,431.3 L246,431.2 L252,431.0 L258,430.9 L264,430.8 L270,430.7 L276,430.6 L282,430.5 L288,430.4 L294,430.3 L300,430.2 L306,430.2 L312,430.1 L318,430.1 L324,430.0 L330,430.0 L336,429.9 L342,429.8 L348,429.8 L354,429.8 L360,429.8 L366,429.8 L372,429.7 L378,429.7 L384,429.7 L390,429.7 L396,429.8 L402,429.8 L408,429.8 L414,429.8 L420,429.8 L426,429.9 L432,429.9 L438,429.9 L444,429.9 L450,429.9 L456,430.0 L462,430.0 L468,430.0 L474,430.0 L480,430.0 L486,430.1 L492,430.1 L498,430.1 L504,430.1 L510,430.1 L516,430.2 L522,430.2 L528,430.2 L534,430.2 L540,430.2 L546,430.2 L552,430.2 L558,430.4 L564,430.4 L570,430.4 L576,430.4 L582,430.4 L588,430.4 L594,430.4 L600,430.4 L606,430.4 L612,430.4 L618,430.3 L624,430.3 L630,430.3 L636,430.3 L642,430.2 L648,430.2 L654,430.2 L660,430.1 L666,430.1 L672,430.1 L678,430.1 L684,429.9 L690,429.6 L696,429.4 L702,429.2 L708,429.0 L714,428.8 L720,428.7 L726,428.5 L732,428.3 L738,428.1 L744,427.9 L750,427.7 L756,427.5 L762,426.9 L768,426.4 L774,425.9 L780,425.3 L786,424.8 L792,424.4 L798,423.9 L804,423.4 L810,422.9 L816,422.4 L822,421.9 L828,421.5 L834,421.0 L840,420.5 L846,420.0 L852,419.4 L858,418.7 L864,418.0 L870,417.3 L876,416.6 L882,415.9 L888,415.2 L894,414.5 L900,413.8 L906,412.7 L912,411.6 L918,410.6 L924,409.5 L930,408.4 L936,407.4 L942,406.3 L948,405.3 L954,404.1 L960,402.9 L966,401.8 L972,400.6 L978,399.4 L984,397.9 L990,396.1 L996,394.4 L1002,392.7 L1008,391.0 L1014,389.2 L1020,387.4 L1026,385.4 L1032,383.3 L1038,381.2 L1044,378.9 L1050,376.5 L1056,374.1 L1062,371.4 L1068,368.1 L1074,365.1 L1080,361.8 L1086,360.2 L1090,360.2 L1090,361.6 L1086,361.6 L1080,363.3 L1074,367.0 L1068,370.2 L1062,373.6 L1056,376.4 L1050,378.9 L1044,381.3 L1038,383.7 L1032,385.8 L1026,387.9 L1020,390.1 L1014,391.9 L1008,393.6 L1002,395.4 L996,397.2 L990,399.0 L984,400.7 L978,402.3 L972,403.5 L966,404.8 L960,406.0 L954,407.2 L948,408.4 L942,409.5 L936,410.6 L930,411.7 L924,412.8 L918,413.9 L912,415.0 L906,416.1 L900,417.2 L894,417.9 L888,418.7 L882,419.4 L876,420.1 L870,420.9 L864,421.6 L858,422.3 L852,423.1 L846,423.7 L840,424.2 L834,424.7 L828,425.2 L822,425.7 L816,426.1 L810,426.6 L804,427.1 L798,427.6 L792,428.1 L786,428.6 L780,429.1 L774,429.7 L768,430.3 L762,430.8 L756,431.4 L750,431.6 L744,431.8 L738,432.0 L732,432.2 L726,432.4 L720,432.6 L714,432.8 L708,433.0 L702,433.2 L696,433.3 L690,433.5 L684,433.8 L678,434.0 L672,434.0 L666,434.0 L660,434.1 L654,434.1 L648,434.1 L642,434.2 L636,434.2 L630,434.2 L624,434.3 L618,434.3 L612,434.3 L606,434.3 L600,434.4 L594,434.4 L588,434.4 L582,434.4 L576,434.4 L570,434.4 L564,434.4 L558,434.4 L552,434.2 L546,434.2 L540,434.2 L534,434.2 L528,434.2 L522,434.2 L516,434.2 L510,434.2 L504,434.1 L498,434.1 L492,434.1 L486,434.1 L480,434.1 L474,434.0 L468,434.0 L462,434.0 L456,434.0 L450,433.9 L444,433.9 L438,433.9 L432,433.9 L426,433.9 L420,433.8 L414,433.8 L408,433.8 L402,433.8 L396,433.7 L390,433.7 L384,433.7 L378,433.7 L372,433.7 L366,433.7 L360,433.7 L354,433.7 L348,433.7 L342,433.7 L336,433.7 L330,433.8 L324,433.8 L318,433.8 L312,433.8 L306,433.9 L300,433.9 L294,434.0 L288,434.0 L282,434.1 L276,434.1 L270,434.2 L264,434.2 L258,434.3 L252,434.4 L246,434.4 L240,434.5 L234,434.6 L228,434.7 L222,434.8 L216,434.9 L210,435.0 L204,435.2 L198,435.4 L192,435.6 L186,435.8 L180,436.1 L174,436.4 L168,436.8 L162,437.3 L156,438.1 L150,438.1 Z" fill="url(#g21)"/><path d="M150,437.4 L156,437.4 L162,436.4 L168,435.8 L174,435.2 L180,434.7 L186,434.3 L192,434.1 L198,433.8 L204,433.5 L210,433.3 L216,433.1 L222,433.0 L228,432.8 L234,432.7 L240,432.6 L246,432.5 L252,432.4 L258,432.3 L264,432.2 L270,432.1 L276,432.0 L282,431.9 L288,431.8 L294,431.8 L300,431.7 L306,431.7 L312,431.6 L318,431.6 L324,431.5 L330,431.5 L336,431.4 L342,431.4 L348,431.4 L354,431.4 L360,431.4 L366,431.3 L372,431.3 L378,431.3 L384,431.3 L390,431.3 L396,431.4 L402,431.4 L408,431.4 L414,431.4 L420,431.4 L426,431.5 L432,431.5 L438,431.5 L444,431.5 L450,431.5 L456,431.6 L462,431.6 L468,431.6 L474,431.6 L480,431.6 L486,431.7 L492,431.7 L498,431.7 L504,431.7 L510,431.7 L516,431.8 L522,431.8 L528,431.8 L534,431.8 L540,431.8 L546,431.8 L552,431.8 L558,432.0 L564,432.0 L570,432.0 L576,432.0 L582,432.0 L588,432.0 L594,432.0 L600,432.0 L606,432.0 L612,431.9 L618,431.9 L624,431.9 L630,431.9 L636,431.8 L642,431.8 L648,431.8 L654,431.7 L660,431.7 L666,431.7 L672,431.7 L678,431.6 L684,431.4 L690,431.1 L696,431.0 L702,430.8 L708,430.6 L714,430.4 L720,430.2 L726,430.0 L732,429.8 L738,429.6 L744,429.4 L750,429.2 L756,429.1 L762,428.5 L768,427.9 L774,427.4 L780,426.9 L786,426.4 L792,425.9 L798,425.4 L804,424.9 L810,424.4 L816,423.9 L822,423.4 L828,422.9 L834,422.4 L840,422.0 L846,421.5 L852,420.9 L858,420.2 L864,419.5 L870,418.7 L876,418.0 L882,417.3 L888,416.6 L894,415.8 L900,415.1 L906,414.1 L912,413.0 L918,411.9 L924,410.8 L930,409.7 L936,408.7 L942,407.6 L948,406.5 L954,405.4 L960,404.2 L966,403.0 L972,401.8 L978,400.6 L984,399.0 L990,397.3 L996,395.5 L1002,393.8 L1008,392.0 L1014,390.3 L1020,388.5 L1026,386.4 L1032,384.3 L1038,382.2 L1044,379.9 L1050,377.4 L1056,375.0 L1062,372.3 L1068,368.9 L1074,365.9 L1080,362.4 L1086,360.8 L1090,360.8 L1090,362.1 L1086,362.1 L1080,363.9 L1074,367.8 L1068,371.0 L1062,374.5 L1056,377.3 L1050,379.8 L1044,382.3 L1038,384.7 L1032,386.8 L1026,389.0 L1020,391.1 L1014,392.9 L1008,394.7 L1002,396.5 L996,398.3 L990,400.1 L984,401.9 L978,403.5 L972,404.7 L966,406.0 L960,407.2 L954,408.5 L948,409.7 L942,410.8 L936,411.9 L930,413.0 L924,414.1 L918,415.2 L912,416.3 L906,417.5 L900,418.6 L894,419.3 L888,420.1 L882,420.8 L876,421.6 L870,422.3 L864,423.0 L858,423.8 L852,424.5 L846,425.1 L840,425.6 L834,426.1 L828,426.6 L822,427.1 L816,427.6 L810,428.1 L804,428.6 L798,429.2 L792,429.7 L786,430.2 L780,430.7 L774,431.2 L768,431.8 L762,432.4 L756,433.0 L750,433.2 L744,433.4 L738,433.6 L732,433.8 L726,434.0 L720,434.2 L714,434.4 L708,434.5 L702,434.7 L696,434.9 L690,435.1 L684,435.4 L678,435.5 L672,435.6 L666,435.6 L660,435.6 L654,435.7 L648,435.7 L642,435.7 L636,435.8 L630,435.8 L624,435.8 L618,435.9 L612,435.9 L606,435.9 L600,436.0 L594,436.0 L588,436.0 L582,436.0 L576,436.0 L570,436.0 L564,436.0 L558,436.0 L552,435.9 L546,435.9 L540,435.9 L534,435.9 L528,435.8 L522,435.8 L516,435.8 L510,435.8 L504,435.8 L498,435.7 L492,435.7 L486,435.7 L480,435.7 L474,435.6 L468,435.6 L462,435.6 L456,435.6 L450,435.5 L444,435.5 L438,435.5 L432,435.5 L426,435.5 L420,435.4 L414,435.4 L408,435.4 L402,435.4 L396,435.3 L390,435.3 L384,435.3 L378,435.3 L372,435.3 L366,435.3 L360,435.3 L354,435.3 L348,435.3 L342,435.3 L336,435.3 L330,435.3 L324,435.3 L318,435.3 L312,435.3 L306,435.3 L300,435.4 L294,435.4 L288,435.4 L282,435.5 L276,435.5 L270,435.6 L264,435.6 L258,435.6 L252,435.7 L246,435.7 L240,435.8 L234,435.9 L228,435.9 L222,436.0 L216,436.1 L210,436.1 L204,436.3 L198,436.4 L192,436.6 L186,436.7 L180,437.0 L174,437.2 L168,437.6 L162,437.9 L156,438.5 L150,438.5 Z" fill="url(#g22)"/><path d="M150,437.9 L156,437.9 L162,437.0 L168,436.5 L174,436.0 L180,435.6 L186,435.3 L192,435.1 L198,434.8 L204,434.6 L210,434.4 L216,434.3 L222,434.2 L228,434.1 L234,434.0 L240,433.9 L246,433.8 L252,433.7 L258,433.6 L264,433.5 L270,433.5 L276,433.4 L282,433.3 L288,433.3 L294,433.2 L300,433.2 L306,433.1 L312,433.1 L318,433.1 L324,433.0 L330,433.0 L336,433.0 L342,432.9 L348,432.9 L354,432.9 L360,432.9 L366,432.9 L372,432.9 L378,432.9 L384,432.9 L390,432.9 L396,432.9 L402,433.0 L408,433.0 L414,433.0 L420,433.0 L426,433.1 L432,433.1 L438,433.1 L444,433.1 L450,433.1 L456,433.2 L462,433.2 L468,433.2 L474,433.2 L480,433.2 L486,433.3 L492,433.3 L498,433.3 L504,433.3 L510,433.4 L516,433.4 L522,433.4 L528,433.4 L534,433.4 L540,433.4 L546,433.4 L552,433.4 L558,433.6 L564,433.6 L570,433.6 L576,433.6 L582,433.6 L588,433.6 L594,433.6 L600,433.6 L606,433.6 L612,433.5 L618,433.5 L624,433.5 L630,433.4 L636,433.4 L642,433.4 L648,433.3 L654,433.3 L660,433.3 L666,433.3 L672,433.2 L678,433.2 L684,433.0 L690,432.7 L696,432.5 L702,432.4 L708,432.2 L714,432.0 L720,431.8 L726,431.6 L732,431.4 L738,431.2 L744,431.0 L750,430.8 L756,430.6 L762,430.1 L768,429.5 L774,428.9 L780,428.4 L786,427.9 L792,427.4 L798,426.9 L804,426.4 L810,425.9 L816,425.4 L822,424.9 L828,424.4 L834,423.9 L840,423.4 L846,422.9 L852,422.4 L858,421.6 L864,420.9 L870,420.2 L876,419.4 L882,418.7 L888,418.0 L894,417.2 L900,416.5 L906,415.4 L912,414.3 L918,413.2 L924,412.1 L930,411.1 L936,410.0 L942,408.9 L948,407.8 L954,406.6 L960,405.4 L966,404.2 L972,402.9 L978,401.7 L984,400.1 L990,398.4 L996,396.6 L1002,394.9 L1008,393.1 L1014,391.3 L1020,389.6 L1026,387.4 L1032,385.3 L1038,383.2 L1044,380.8 L1050,378.4 L1056,375.9 L1062,373.1 L1068,369.8 L1074,366.6 L1080,363.0 L1086,361.3 L1090,361.3 L1090,362.7 L1086,362.7 L1080,364.5 L1074,368.5 L1068,371.9 L1062,375.4 L1056,378.2 L1050,380.8 L1044,383.3 L1038,385.7 L1032,387.9 L1026,390.0 L1020,392.2 L1014,394.0 L1008,395.8 L1002,397.6 L996,399.4 L990,401.2 L984,403.0 L978,404.6 L972,405.9 L966,407.2 L960,408.4 L954,409.7 L948,410.9 L942,412.1 L936,413.2 L930,414.3 L924,415.4 L918,416.6 L912,417.7 L906,418.8 L900,420.0 L894,420.7 L888,421.5 L882,422.2 L876,423.0 L870,423.7 L864,424.5 L858,425.2 L852,426.0 L846,426.6 L840,427.1 L834,427.6 L828,428.1 L822,428.6 L816,429.1 L810,429.6 L804,430.2 L798,430.7 L792,431.2 L786,431.7 L780,432.2 L774,432.8 L768,433.4 L762,434.0 L756,434.6 L750,434.8 L744,435.0 L738,435.2 L732,435.4 L726,435.6 L720,435.7 L714,435.9 L708,436.1 L702,436.3 L696,436.5 L690,436.7 L684,436.9 L678,437.1 L672,437.1 L666,437.2 L660,437.2 L654,437.2 L648,437.3 L642,437.3 L636,437.3 L630,437.4 L624,437.4 L618,437.4 L612,437.5 L606,437.5 L600,437.5 L594,437.5 L588,437.5 L582,437.5 L576,437.5 L570,437.5 L564,437.5 L558,437.5 L552,437.5 L546,437.5 L540,437.5 L534,437.5 L528,437.5 L522,437.4 L516,437.4 L510,437.4 L504,437.4 L498,437.3 L492,437.3 L486,437.3 L480,437.3 L474,437.2 L468,437.2 L462,437.2 L456,437.2 L450,437.1 L444,437.1 L438,437.1 L432,437.1 L426,437.1 L420,437.0 L414,437.0 L408,437.0 L402,437.0 L396,436.9 L390,436.9 L384,436.9 L378,436.9 L372,436.9 L366,436.9 L360,436.8 L354,436.8 L348,436.8 L342,436.8 L336,436.8 L330,436.8 L324,436.8 L318,436.8 L312,436.8 L306,436.8 L300,436.8 L294,436.9 L288,436.9 L282,436.9 L276,436.9 L270,436.9 L264,437.0 L258,437.0 L252,437.0 L246,437.0 L240,437.1 L234,437.1 L228,437.2 L222,437.2 L216,437.3 L210,437.3 L204,437.4 L198,437.5 L192,437.6 L186,437.7 L180,437.9 L174,438.0 L168,438.3 L162,438.5 L156,438.9 L150,438.9 Z" fill="url(#g23)"/><path d="M150,438.3 L156,438.3 L162,437.6 L168,437.2 L174,436.8 L180,436.5 L186,436.3 L192,436.1 L198,435.9 L204,435.7 L210,435.6 L216,435.5 L222,435.4 L228,435.3 L234,435.2 L240,435.2 L246,435.1 L252,435.0 L258,435.0 L264,434.9 L270,434.9 L276,434.8 L282,434.8 L288,434.7 L294,434.7 L300,434.6 L306,434.6 L312,434.6 L318,434.6 L324,434.6 L330,434.5 L336,434.5 L342,434.5 L348,434.5 L354,434.5 L360,434.5 L366,434.5 L372,434.5 L378,434.5 L384,434.5 L390,434.5 L396,434.5 L402,434.6 L408,434.6 L414,434.6 L420,434.6 L426,434.7 L432,434.7 L438,434.7 L444,434.7 L450,434.7 L456,434.8 L462,434.8 L468,434.8 L474,434.8 L480,434.9 L486,434.9 L492,434.9 L498,434.9 L504,434.9 L510,435.0 L516,435.0 L522,435.0 L528,435.0 L534,435.0 L540,435.0 L546,435.0 L552,435.0 L558,435.2 L564,435.2 L570,435.2 L576,435.2 L582,435.2 L588,435.2 L594,435.2 L600,435.2 L606,435.1 L612,435.1 L618,435.1 L624,435.0 L630,435.0 L636,435.0 L642,434.9 L648,434.9 L654,434.9 L660,434.9 L666,434.8 L672,434.8 L678,434.8 L684,434.6 L690,434.3 L696,434.1 L702,433.9 L708,433.8 L714,433.6 L720,433.4 L726,433.2 L732,433.0 L738,432.8 L744,432.6 L750,432.4 L756,432.2 L762,431.6 L768,431.1 L774,430.5 L780,429.9 L786,429.4 L792,428.9 L798,428.4 L804,427.9 L810,427.4 L816,426.9 L822,426.4 L828,425.9 L834,425.4 L840,424.9 L846,424.4 L852,423.8 L858,423.1 L864,422.3 L870,421.6 L876,420.8 L882,420.1 L888,419.4 L894,418.6 L900,417.9 L906,416.8 L912,415.7 L918,414.6 L924,413.5 L930,412.4 L936,411.3 L942,410.1 L948,409.0 L954,407.8 L960,406.6 L966,405.4 L972,404.1 L978,402.9 L984,401.3 L990,399.5 L996,397.7 L1002,396.0 L1008,394.2 L1014,392.4 L1020,390.6 L1026,388.5 L1032,386.3 L1038,384.2 L1044,381.8 L1050,379.3 L1056,376.8 L1062,374.0 L1068,370.6 L1074,367.4 L1080,363.6 L1086,361.9 L1090,361.9 L1090,363.2 L1086,363.2 L1080,365.1 L1074,369.3 L1068,372.7 L1062,376.3 L1056,379.2 L1050,381.7 L1044,384.3 L1038,386.7 L1032,388.9 L1026,391.1 L1020,393.2 L1014,395.0 L1008,396.9 L1002,398.7 L996,400.5 L990,402.3 L984,404.1 L978,405.8 L972,407.1 L966,408.4 L960,409.7 L954,411.0 L948,412.2 L942,413.3 L936,414.5 L930,415.6 L924,416.8 L918,417.9 L912,419.0 L906,420.2 L900,421.3 L894,422.1 L888,422.9 L882,423.6 L876,424.4 L870,425.2 L864,425.9 L858,426.7 L852,427.5 L846,428.1 L840,428.6 L834,429.1 L828,429.6 L822,430.1 L816,430.6 L810,431.1 L804,431.7 L798,432.2 L792,432.7 L786,433.2 L780,433.7 L774,434.3 L768,434.9 L762,435.5 L756,436.1 L750,436.3 L744,436.5 L738,436.7 L732,436.9 L726,437.1 L720,437.3 L714,437.5 L708,437.7 L702,437.9 L696,438.1 L690,438.3 L684,438.5 L678,438.7 L672,438.7 L666,438.7 L660,438.8 L654,438.8 L648,438.8 L642,438.9 L636,438.9 L630,438.9 L624,439.0 L618,439.0 L612,439.1 L606,439.1 L600,439.1 L594,439.1 L588,439.1 L582,439.1 L576,439.1 L570,439.1 L564,439.1 L558,439.1 L552,439.1 L546,439.1 L540,439.1 L534,439.1 L528,439.1 L522,439.0 L516,439.0 L510,439.0 L504,439.0 L498,438.9 L492,438.9 L486,438.9 L480,438.9 L474,438.8 L468,438.8 L462,438.8 L456,438.8 L450,438.7 L444,438.7 L438,438.7 L432,438.7 L426,438.7 L420,438.6 L414,438.6 L408,438.6 L402,438.6 L396,438.5 L390,438.5 L384,438.5 L378,438.5 L372,438.4 L366,438.4 L360,438.4 L354,438.4 L348,438.4 L342,438.4 L336,438.4 L330,438.3 L324,438.3 L318,438.3 L312,438.3 L306,438.3 L300,438.3 L294,438.3 L288,438.3 L282,438.3 L276,438.3 L270,438.3 L264,438.3 L258,438.3 L252,438.3 L246,438.4 L240,438.4 L234,438.4 L228,438.4 L222,438.4 L216,438.4 L210,438.5 L204,438.5 L198,438.6 L192,438.6 L186,438.7 L180,438.7 L174,438.8 L168,439.0 L162,439.1 L156,439.4 L150,439.4 Z" fill="url(#g24)"/><path d="M150,438.7 L156,438.7 L162,438.2 L168,437.9 L174,437.6 L180,437.4 L186,437.2 L192,437.1 L198,437.0 L204,436.8 L210,436.7 L216,436.7 L222,436.6 L228,436.5 L234,436.5 L240,436.4 L246,436.4 L252,436.3 L258,436.3 L264,436.3 L270,436.2 L276,436.2 L282,436.2 L288,436.2 L294,436.1 L300,436.1 L306,436.1 L312,436.1 L318,436.1 L324,436.1 L330,436.1 L336,436.0 L342,436.0 L348,436.0 L354,436.0 L360,436.1 L366,436.1 L372,436.1 L378,436.1 L384,436.1 L390,436.1 L396,436.1 L402,436.2 L408,436.2 L414,436.2 L420,436.2 L426,436.3 L432,436.3 L438,436.3 L444,436.3 L450,436.3 L456,436.4 L462,436.4 L468,436.4 L474,436.4 L480,436.5 L486,436.5 L492,436.5 L498,436.5 L504,436.6 L510,436.6 L516,436.6 L522,436.6 L528,436.6 L534,436.7 L540,436.7 L546,436.7 L552,436.7 L558,436.8 L564,436.8 L570,436.8 L576,436.8 L582,436.8 L588,436.8 L594,436.8 L600,436.8 L606,436.7 L612,436.7 L618,436.7 L624,436.6 L630,436.6 L636,436.6 L642,436.5 L648,436.5 L654,436.5 L660,436.4 L666,436.4 L672,436.4 L678,436.3 L684,436.2 L690,435.9 L696,435.7 L702,435.5 L708,435.3 L714,435.2 L720,435.0 L726,434.8 L732,434.6 L738,434.4 L744,434.2 L750,434.0 L756,433.8 L762,433.2 L768,432.6 L774,432.0 L780,431.4 L786,430.9 L792,430.4 L798,429.9 L804,429.4 L810,428.9 L816,428.4 L822,427.9 L828,427.4 L834,426.9 L840,426.4 L846,425.9 L852,425.3 L858,424.5 L864,423.8 L870,423.0 L876,422.3 L882,421.5 L888,420.8 L894,420.0 L900,419.3 L906,418.1 L912,417.0 L918,415.9 L924,414.8 L930,413.7 L936,412.5 L942,411.4 L948,410.3 L954,409.1 L960,407.8 L966,406.6 L972,405.3 L978,404.0 L984,402.4 L990,400.6 L996,398.8 L1002,397.0 L1008,395.2 L1014,393.4 L1020,391.7 L1026,389.5 L1032,387.4 L1038,385.2 L1044,382.8 L1050,380.3 L1056,377.8 L1062,374.9 L1068,371.5 L1074,368.1 L1080,364.2 L1086,362.4 L1090,362.4 L1090,363.7 L1086,363.7 L1080,365.7 L1074,370.0 L1068,373.6 L1062,377.2 L1056,380.1 L1050,382.7 L1044,385.3 L1038,387.7 L1032,389.9 L1026,392.1 L1020,394.3 L1014,396.1 L1008,397.9 L1002,399.7 L996,401.6 L990,403.4 L984,405.3 L978,407.0 L972,408.3 L966,409.6 L960,410.9 L954,412.2 L948,413.5 L942,414.6 L936,415.8 L930,416.9 L924,418.1 L918,419.2 L912,420.4 L906,421.6 L900,422.7 L894,423.5 L888,424.3 L882,425.0 L876,425.8 L870,426.6 L864,427.4 L858,428.1 L852,428.9 L846,429.5 L840,430.0 L834,430.6 L828,431.1 L822,431.6 L816,432.1 L810,432.6 L804,433.2 L798,433.7 L792,434.2 L786,434.7 L780,435.2 L774,435.9 L768,436.5 L762,437.1 L756,437.7 L750,437.9 L744,438.1 L738,438.3 L732,438.5 L726,438.7 L720,438.9 L714,439.1 L708,439.3 L702,439.5 L696,439.7 L690,439.9 L684,440.1 L678,440.2 L672,440.3 L666,440.3 L660,440.3 L654,440.4 L648,440.4 L642,440.5 L636,440.5 L630,440.5 L624,440.6 L618,440.6 L612,440.6 L606,440.7 L600,440.7 L594,440.7 L588,440.7 L582,440.7 L576,440.7 L570,440.7 L564,440.7 L558,440.7 L552,440.7 L546,440.7 L540,440.7 L534,440.7 L528,440.7 L522,440.7 L516,440.6 L510,440.6 L504,440.6 L498,440.6 L492,440.5 L486,440.5 L480,440.5 L474,440.5 L468,440.4 L462,440.4 L456,440.4 L450,440.4 L444,440.3 L438,440.3 L432,440.3 L426,440.2 L420,440.2 L414,440.2 L408,440.2 L402,440.1 L396,440.1 L390,440.1 L384,440.1 L378,440.0 L372,440.0 L366,440.0 L360,440.0 L354,440.0 L348,439.9 L342,439.9 L336,439.9 L330,439.9 L324,439.8 L318,439.8 L312,439.8 L306,439.8 L300,439.8 L294,439.8 L288,439.7 L282,439.7 L276,439.7 L270,439.7 L264,439.7 L258,439.7 L252,439.7 L246,439.7 L240,439.6 L234,439.6 L228,439.6 L222,439.6 L216,439.6 L210,439.6 L204,439.6 L198,439.6 L192,439.6 L186,439.6 L180,439.6 L174,439.7 L168,439.7 L162,439.7 L156,439.8 L150,439.8 Z" fill="url(#g25)"/><path d="M150,439.1 L156,439.1 L162,438.8 L168,438.6 L174,438.4 L180,438.3 L186,438.2 L192,438.1 L198,438.0 L204,437.9 L210,437.9 L216,437.8 L222,437.8 L228,437.8 L234,437.7 L240,437.7 L246,437.7 L252,437.7 L258,437.7 L264,437.6 L270,437.6 L276,437.6 L282,437.6 L288,437.6 L294,437.6 L300,437.6 L306,437.6 L312,437.6 L318,437.6 L324,437.6 L330,437.6 L336,437.6 L342,437.6 L348,437.6 L354,437.6 L360,437.6 L366,437.6 L372,437.7 L378,437.7 L384,437.7 L390,437.7 L396,437.7 L402,437.8 L408,437.8 L414,437.8 L420,437.8 L426,437.9 L432,437.9 L438,437.9 L444,437.9 L450,437.9 L456,438.0 L462,438.0 L468,438.0 L474,438.0 L480,438.1 L486,438.1 L492,438.1 L498,438.1 L504,438.2 L510,438.2 L516,438.2 L522,438.2 L528,438.3 L534,438.3 L540,438.3 L546,438.3 L552,438.3 L558,438.3 L564,438.3 L570,438.3 L576,438.3 L582,438.3 L588,438.3 L594,438.3 L600,438.3 L606,438.3 L612,438.3 L618,438.2 L624,438.2 L630,438.2 L636,438.1 L642,438.1 L648,438.1 L654,438.0 L660,438.0 L666,438.0 L672,437.9 L678,437.9 L684,437.7 L690,437.5 L696,437.3 L702,437.1 L708,436.9 L714,436.7 L720,436.5 L726,436.3 L732,436.1 L738,435.9 L744,435.7 L750,435.5 L756,435.4 L762,434.8 L768,434.1 L774,433.6 L780,432.9 L786,432.4 L792,431.9 L798,431.4 L804,430.9 L810,430.4 L816,429.9 L822,429.4 L828,428.9 L834,428.3 L840,427.8 L846,427.3 L852,426.7 L858,426.0 L864,425.2 L870,424.4 L876,423.7 L882,422.9 L888,422.2 L894,421.4 L900,420.6 L906,419.5 L912,418.4 L918,417.2 L924,416.1 L930,415.0 L936,413.8 L942,412.7 L948,411.6 L954,410.3 L960,409.1 L966,407.8 L972,406.5 L978,405.2 L984,403.6 L990,401.8 L996,399.9 L1002,398.1 L1008,396.3 L1014,394.5 L1020,392.7 L1026,390.5 L1032,388.4 L1038,386.2 L1044,383.8 L1050,381.2 L1056,378.7 L1062,375.8 L1068,372.3 L1074,368.9 L1080,364.8 L1086,362.9 L1090,362.9 L1090,364.0 L1086,364.0 L1080,366.0 L1074,370.4 L1068,374.0 L1062,377.6 L1056,380.5 L1050,383.1 L1044,385.8 L1038,388.2 L1032,390.4 L1026,392.6 L1020,394.8 L1014,396.6 L1008,398.5 L1002,400.3 L996,402.1 L990,404.0 L984,405.9 L978,407.5 L972,408.9 L966,410.2 L960,411.5 L954,412.8 L948,414.1 L942,415.3 L936,416.4 L930,417.6 L924,418.7 L918,419.9 L912,421.1 L906,422.2 L900,423.4 L894,424.2 L888,425.0 L882,425.7 L876,426.5 L870,427.3 L864,428.1 L858,428.9 L852,429.6 L846,430.2 L840,430.8 L834,431.3 L828,431.8 L822,432.3 L816,432.9 L810,433.4 L804,433.9 L798,434.4 L792,435.0 L786,435.5 L780,436.0 L774,436.6 L768,437.2 L762,437.9 L756,438.5 L750,438.7 L744,438.9 L738,439.1 L732,439.3 L726,439.5 L720,439.7 L714,439.9 L708,440.1 L702,440.3 L696,440.5 L690,440.7 L684,440.9 L678,441.0 L672,441.1 L666,441.1 L660,441.1 L654,441.2 L648,441.2 L642,441.2 L636,441.3 L630,441.3 L624,441.4 L618,441.4 L612,441.4 L606,441.5 L600,441.5 L594,441.5 L588,441.5 L582,441.5 L576,441.5 L570,441.5 L564,441.5 L558,441.5 L552,441.5 L546,441.5 L540,441.5 L534,441.5 L528,441.5 L522,441.5 L516,441.4 L510,441.4 L504,441.4 L498,441.4 L492,441.3 L486,441.3 L480,441.3 L474,441.3 L468,441.2 L462,441.2 L456,441.2 L450,441.2 L444,441.1 L438,441.1 L432,441.1 L426,441.0 L420,441.0 L414,441.0 L408,441.0 L402,440.9 L396,440.9 L390,440.9 L384,440.9 L378,440.8 L372,440.8 L366,440.8 L360,440.8 L354,440.7 L348,440.7 L342,440.7 L336,440.7 L330,440.6 L324,440.6 L318,440.6 L312,440.6 L306,440.5 L300,440.5 L294,440.5 L288,440.5 L282,440.4 L276,440.4 L270,440.4 L264,440.4 L258,440.4 L252,440.3 L246,440.3 L240,440.3 L234,440.3 L228,440.2 L222,440.2 L216,440.2 L210,440.2 L204,440.2 L198,440.1 L192,440.1 L186,440.1 L180,440.1 L174,440.1 L168,440.0 L162,440.0 L156,440.0 L150,440.0 Z" fill="url(#g26)"/><path d="M150,439.6 L156,439.6 L162,439.4 L168,439.3 L174,439.2 L180,439.2 L186,439.1 L192,439.1 L198,439.1 L204,439.1 L210,439.0 L216,439.0 L222,439.0 L228,439.0 L234,439.0 L240,439.0 L246,439.0 L252,439.0 L258,439.0 L264,439.0 L270,439.0 L276,439.0 L282,439.0 L288,439.0 L294,439.0 L300,439.0 L306,439.0 L312,439.1 L318,439.1 L324,439.1 L330,439.1 L336,439.1 L342,439.1 L348,439.2 L354,439.2 L360,439.2 L366,439.2 L372,439.2 L378,439.3 L384,439.3 L390,439.3 L396,439.3 L402,439.3 L408,439.4 L414,439.4 L420,439.4 L426,439.4 L432,439.5 L438,439.5 L444,439.5 L450,439.6 L456,439.6 L462,439.6 L468,439.6 L474,439.7 L480,439.7 L486,439.7 L492,439.7 L498,439.8 L504,439.8 L510,439.8 L516,439.8 L522,439.9 L528,439.9 L534,439.9 L540,439.9 L546,439.9 L552,439.9 L558,439.9 L564,439.9 L570,439.9 L576,439.9 L582,439.9 L588,439.9 L594,439.9 L600,439.9 L606,439.9 L612,439.8 L618,439.8 L624,439.8 L630,439.7 L636,439.7 L642,439.7 L648,439.6 L654,439.6 L660,439.6 L666,439.5 L672,439.5 L678,439.4 L684,439.3 L690,439.1 L696,438.9 L702,438.7 L708,438.5 L714,438.3 L720,438.1 L726,437.9 L732,437.7 L738,437.5 L744,437.3 L750,437.1 L756,436.9 L762,436.3 L768,435.7 L774,435.1 L780,434.5 L786,434.0 L792,433.4 L798,432.9 L804,432.4 L810,431.9 L816,431.4 L822,430.9 L828,430.3 L834,429.8 L840,429.3 L846,428.8 L852,428.2 L858,427.4 L864,426.6 L870,425.9 L876,425.1 L882,424.3 L888,423.6 L894,422.8 L900,422.0 L906,420.9 L912,419.7 L918,418.6 L924,417.4 L930,416.3 L936,415.1 L942,414.0 L948,412.8 L954,411.6 L960,410.3 L966,409.0 L972,407.7 L978,406.4 L984,404.7 L990,402.9 L996,401.0 L1002,399.2 L1008,397.4 L1014,395.6 L1020,393.8 L1026,391.6 L1032,389.4 L1038,387.2 L1044,384.8 L1050,382.2 L1056,379.6 L1062,376.7 L1068,373.2 L1074,369.6 L1080,365.4 L1086,363.5 L1090,363.5 L1090,364.0 L1086,364.0 L1080,366.0 L1074,370.4 L1068,374.0 L1062,377.6 L1056,380.5 L1050,383.1 L1044,385.8 L1038,388.2 L1032,390.4 L1026,392.6 L1020,394.8 L1014,396.6 L1008,398.5 L1002,400.3 L996,402.1 L990,404.0 L984,405.9 L978,407.5 L972,408.9 L966,410.2 L960,411.5 L954,412.8 L948,414.1 L942,415.3 L936,416.4 L930,417.6 L924,418.7 L918,419.9 L912,421.1 L906,422.2 L900,423.4 L894,424.2 L888,425.0 L882,425.7 L876,426.5 L870,427.3 L864,428.1 L858,428.9 L852,429.6 L846,430.2 L840,430.8 L834,431.3 L828,431.8 L822,432.3 L816,432.9 L810,433.4 L804,433.9 L798,434.4 L792,435.0 L786,435.5 L780,436.0 L774,436.6 L768,437.2 L762,437.9 L756,438.5 L750,438.7 L744,438.9 L738,439.1 L732,439.3 L726,439.5 L720,439.7 L714,439.9 L708,440.1 L702,440.3 L696,440.5 L690,440.7 L684,440.9 L678,441.0 L672,441.1 L666,441.1 L660,441.1 L654,441.2 L648,441.2 L642,441.2 L636,441.3 L630,441.3 L624,441.4 L618,441.4 L612,441.4 L606,441.5 L600,441.5 L594,441.5 L588,441.5 L582,441.5 L576,441.5 L570,441.5 L564,441.5 L558,441.5 L552,441.5 L546,441.5 L540,441.5 L534,441.5 L528,441.5 L522,441.5 L516,441.4 L510,441.4 L504,441.4 L498,441.4 L492,441.3 L486,441.3 L480,441.3 L474,441.3 L468,441.2 L462,441.2 L456,441.2 L450,441.2 L444,441.1 L438,441.1 L432,441.1 L426,441.0 L420,441.0 L414,441.0 L408,441.0 L402,440.9 L396,440.9 L390,440.9 L384,440.9 L378,440.8 L372,440.8 L366,440.8 L360,440.8 L354,440.7 L348,440.7 L342,440.7 L336,440.7 L330,440.6 L324,440.6 L318,440.6 L312,440.6 L306,440.5 L300,440.5 L294,440.5 L288,440.5 L282,440.4 L276,440.4 L270,440.4 L264,440.4 L258,440.4 L252,440.3 L246,440.3 L240,440.3 L234,440.3 L228,440.2 L222,440.2 L216,440.2 L210,440.2 L204,440.2 L198,440.1 L192,440.1 L186,440.1 L180,440.1 L174,440.1 L168,440.0 L162,440.0 L156,440.0 L150,440.0 Z" fill="url(#g27)"/></g>
<g fill="#101414"><rect x="501.5" y="397.6" width="10.5" height="1.3"/><rect x="243.5" y="403.8" width="2.5" height="1.2"/><rect x="252.5" y="402.8" width="2.5" height="1.2"/><rect x="261.5" y="401.7" width="2" height="1.2"/><rect x="306" y="398.8" width="3" height="1.2"/><rect x="320" y="398" width="2" height="1"/></g>
</svg>
<svg width="1419" height="598" style="position:absolute;left:0;top:0">
<defs>
<radialGradient id="sph" cx="0.5" cy="0.2" r="0.85"><stop offset="0" stop-color="#c8f8ff"/><stop offset="0.25" stop-color="#30b8f8"/><stop offset="0.65" stop-color="#0a70f0"/><stop offset="1" stop-color="#0418b8"/></radialGradient>
<linearGradient id="elA" x1="0" y1="0" x2="0" y2="1"><stop offset="0" stop-color="#b0f0ff"/><stop offset="0.35" stop-color="#5cb4e8"/><stop offset="1" stop-color="#1c6cb4"/></linearGradient>
<linearGradient id="elB" x1="0" y1="0" x2="0" y2="1"><stop offset="0" stop-color="#2a78c8"/><stop offset="0.5" stop-color="#3c90dc"/><stop offset="1" stop-color="#2c7cc8"/></linearGradient>
<linearGradient id="tri" x1="0" y1="0" x2="0" y2="1"><stop offset="0" stop-color="#0c3868"/><stop offset="0.6" stop-color="#1c508a"/><stop offset="1" stop-color="#0a3060"/></linearGradient>
<linearGradient id="leaf" x1="0" y1="0" x2="1" y2="1"><stop offset="0" stop-color="#2a7cd0"/><stop offset="0.7" stop-color="#60bcf0"/><stop offset="1" stop-color="#2a6aa8"/></linearGradient>
<linearGradient id="vleaf" x1="0" y1="0" x2="1" y2="0"><stop offset="0" stop-color="#a0e4ff"/><stop offset="0.35" stop-color="#4aa4e4"/><stop offset="1" stop-color="#1a5c9c"/></linearGradient>
<radialGradient id="tex" cx="0.45" cy="0.4" r="0.6"><stop offset="0" stop-color="#7cc0f0"/><stop offset="0.7" stop-color="#3c88d0"/><stop offset="1" stop-color="#123c84"/></radialGradient>
<radialGradient id="shade" cx="0.5" cy="0.4" r="0.6"><stop offset="0.6" stop-color="#000" stop-opacity="0"/><stop offset="1" stop-color="#000" stop-opacity="0.35"/></radialGradient>
<linearGradient id="rainbow" x1="0" y1="0" x2="0" y2="1"><stop offset="0" stop-color="#e870a8"/><stop offset="0.12" stop-color="#d040c0"/><stop offset="0.22" stop-color="#5048e0"/><stop offset="0.32" stop-color="#30c8c8"/><stop offset="0.4" stop-color="#a0f020"/><stop offset="0.5" stop-color="#e8ff18"/><stop offset="0.6" stop-color="#a0f020"/><stop offset="0.68" stop-color="#30c8c8"/><stop offset="0.78" stop-color="#5048e0"/><stop offset="0.88" stop-color="#d040c0"/><stop offset="1" stop-color="#e870a8"/></linearGradient>
<clipPath id="stc"><circle cx="792.4" cy="47.6" r="9.6"/></clipPath>
</defs>
<!-- 1 magnifier selected -->
<rect x="8.5" y="32.5" width="30" height="30" rx="2" fill="#fbfcff" stroke="#4c5ca4"/>
<circle cx="21.4" cy="44.6" r="4.8" fill="none" stroke="#262c2c" stroke-width="2.1"/>
<line x1="25" y1="48.6" x2="30.6" y2="55.3" stroke="#262c2c" stroke-width="3.4"/>
<!-- 2 zoom window -->
<rect x="42.7" y="36.8" width="11.8" height="8.6" fill="none" stroke="#3e4646" stroke-width="1"/>
<circle cx="54.3" cy="46.6" r="4.6" fill="none" stroke="#4a5858" stroke-width="2"/>
<line x1="57.4" y1="50.2" x2="62.8" y2="57.4" stroke="#4a5858" stroke-width="3.4"/>
<!-- 3 hand -->
<path d="M82.8,54.5 C84,53.3 85,52 85.3,50.8 C85.8,49 86.2,47 86.8,45.5 C87.3,43.8 88,42.3 89.5,41 C91,40 93,39 96.9,38.4 L100,38.4 C101.5,38.6 102.6,39.3 103.2,40.6 C103.5,42 102.8,43.2 101,44.8 C99.5,46.2 97.5,47.8 96.8,48.8 C96.6,49.8 97.3,50.3 98.5,50.6 L102.9,51.3 C103.8,51.8 103.6,52.6 102.5,52.9 C100,53.8 97.5,54.8 95,55.9 C93,56.8 91,57.6 89.2,58.6" fill="none" stroke="#3a3e42" stroke-width="0.95"/>
<path d="M89.3,43.2 L91.2,40.5 M92.8,42.9 L95.2,39.7 M96,44.5 L98.9,40.1 M98.9,45.8 L101.8,41" fill="none" stroke="#1c2024" stroke-width="1.4"/>
<!-- 4 rotate -->
<path d="M113.8,46 C115,43.8 117.5,43.1 121,43.1 C125,43.1 129,43.8 132,45.5 C134.5,46.8 136.4,48.5 136.4,50.5 C136.2,51.8 135.2,52.8 134.3,53.4" fill="none" stroke="#2e3234" stroke-width="1.9"/>
<path d="M119.7,47.5 C119.2,44 119.8,40.5 121.5,38.3 C122.3,37.3 123.2,36.6 124.2,36.3" fill="none" stroke="#2e3234" stroke-width="2.1"/>
<path d="M113.8,46 C114.2,47.6 115.5,48.6 117.5,49.4" fill="none" stroke="#1a2a40" stroke-width="2.2"/>
<path d="M122.8,54.6 L126.4,58.6 C127.5,58.9 129.5,58 131.2,56.6" fill="none" stroke="#2e3234" stroke-width="2.1"/>
<path d="M114.3,46.8 L120.5,50.2 L119.4,47.1 L127.8,53.2 L118.4,55.6 L119.8,51.8 L114.3,48.4 Z" fill="#3a86e6"/>
<path d="M126.4,37.2 L134.8,43.8 L132,44.1 L131.6,56.7 L129.4,56.9 L128.9,44.5 L126.4,44.9 Z" fill="#3a86e6"/>
<!-- 5 light -->
<path d="M155,43.2 L161.9,40 L174.2,44.3 L173.7,49.7 L161.9,57.1 L157.6,57.7 L156,49.1 Z" fill="#f8ee00"/>
<path d="M153,37 L156.5,38.8 M155.5,37.5 L155.2,42.5 M154.8,40.2 L159.3,40.3 M157.5,38.6 L159.8,43" fill="none" stroke="#2a2a10" stroke-width="1.1"/>
<circle cx="166.5" cy="50.6" r="6.2" fill="url(#sph)"/>
<!-- 6 ellipse A -->
<path d="M189.1,47 C189.1,42.8 196,41.1 203,41.1 C209,41.1 213,44 215.8,47.2 C213,50.5 208.5,52.6 202.5,52.6 C195,52.6 189.1,50.5 189.1,47 Z" fill="url(#elA)"/>
<!-- 7 ellipse B -->
<path d="M219.8,47.6 C219.8,43.8 225.5,41.8 233,41.8 C239.5,41.8 244,44.5 246.7,47.5 C244,51 239.5,53.7 233,53.7 C225,53.7 219.8,51.2 219.8,47.6 Z" fill="url(#elB)"/>
<path d="M219.8,47.6 C219.8,43.8 225.5,41.8 233,41.8 C239.5,41.8 244,44.5 246.7,47.5 C244,51 239.5,53.7 233,53.7 C225,53.7 219.8,51.2 219.8,47.6 Z" fill="none" stroke="#2468b0" stroke-width="0.7" opacity="0.8"/>
<!-- 8 rocker -->
<path d="M251,46.2 C258,46.6 266,46.8 272,46.3 C275,45.8 276.8,45.2 277.7,44.6 C276,47.5 272,49.8 264,49.9 C258,49.9 253,48.5 251,46.2 Z" fill="#2a5c94"/>
<path d="M254,47.3 C260,48 268,48 274,46.6" fill="none" stroke="#78b0e0" stroke-width="0.8"/>
<!-- 9 triangle concave -->
<path d="M295.6,41.6 C298.5,45.5 302,48.5 307.5,50.5 C308.6,51 308.6,52.7 307.8,52.9 L283.5,52.9 C282.6,52.7 282.6,51 283.6,50.5 C289,48.5 292.8,45.5 295.6,41.6 Z" fill="url(#tri)"/>
<!-- 10 triangle -->
<path d="M326.7,41.2 C329.5,45 333.5,48.5 338.9,52.5 L338.9,52.9 L314.1,52.9 C318.5,48.5 323.5,45 326.7,41.2 Z" fill="url(#tri)"/>
<!-- 11 leaf down-right -->
<path d="M344.6,43.5 C345.5,42 349,41.8 354,43.3 C361,45.4 367.5,48 370.4,49.8 C369.5,51.2 365.5,51.9 360,51 C353.5,49.8 347.5,47.5 345,45.5 C344.3,44.8 344.2,44 344.6,43.5 Z" fill="url(#leaf)" stroke="#1a5a98" stroke-width="0.6"/>
<!-- 12 leaf up-right -->
<path d="M375.4,49.4 C378.5,47 384.5,44.3 391.5,42.8 C397.5,41.6 401.2,41.6 401.6,42.5 C401.5,44.5 398,47.5 393,49.5 C387,51.5 380,52 377,51.2 C375.6,50.8 375.2,50 375.4,49.4 Z" fill="url(#leaf)" stroke="#1a5a98" stroke-width="0.6"/>
<!-- 13 wedge -->
<path d="M406.4,53.6 C411,49 419,44 427.8,40.1 C430.5,42.5 432.8,45.5 432.5,48 C432,51 429.5,53.5 426.5,54 C421,54.6 413,54.6 406.4,53.6 Z" fill="#3490dc"/>
<path d="M406.4,53.6 C411,49 419,44 427.8,40.1" fill="none" stroke="#0c3c70" stroke-width="0.9"/>
<!-- 14 blob -->
<path d="M437.8,44.2 C438.3,41.5 441,40.1 444,40.1 C448,40.1 452,41.7 455.5,44.2 C459,46.8 462.5,49.5 463.8,52 C463.5,53.6 460,54.3 453,54.3 C446,54.3 441.5,51.5 439,48.5 C438,47 437.6,45.5 437.8,44.2 Z" fill="#3288d8"/>
<path d="M438,44.2 C438.5,41.5 441,40.1 444,40.1 C448,40.1 452,41.7 455.5,44.2 C459,46.8 462.5,49.5 463.8,52" fill="none" stroke="#0c3c70" stroke-width="0.8"/>
<!-- 15 vertical leaf -->
<path d="M481.2,34.2 C484.5,38 486.7,44 486.7,49 C486.7,55.5 484.5,60.8 481,60.8 C477.5,60.8 475.2,55.5 475.2,49 C475.2,43 477.5,38 481.2,34.2 Z" fill="url(#vleaf)"/>
<!-- 16 rotate triangle -->
<path d="M512.6,41 A11,11 0 0 1 530.8,43.2" fill="none" stroke="#3a78b8" stroke-width="2.2"/>
<path d="M511.2,47 A10,10 0 0 1 512.6,41" fill="none" stroke="#3a78b8" stroke-width="2.2"/>
<path d="M528,43.5 L534.2,43.8 L531.2,47.5 Z" fill="#3a78b8"/>
<path d="M512.3,54.3 A10.5,10.5 0 0 0 529.7,54.3" fill="none" stroke="#3a78b8" stroke-width="2.2"/>
<path d="M520.6,41.5 C523.5,45 527.5,48.5 533.1,51.5 L533.1,52.5 L508.1,52.5 L508.6,51.5 C513.5,48.5 517.5,45 520.6,41.5 Z" fill="#0e3a6a"/>
<!-- 17 vleaf red ring -->
<path d="M538.5,47.2 A13.5,3.4 0 0 1 547,44.1" fill="none" stroke="#d81020" stroke-width="2.4"/>
<path d="M551.8,34 C554.5,37.5 556.8,43 556.8,48.5 C556.8,55 554.5,60.8 551.5,60.8 C548.5,60.8 546.2,55 546.2,48.5 C546.2,43 548.5,37.5 551.8,34 Z" fill="url(#vleaf)"/>
<path d="M538.2,47.2 A13.6,3.6 0 0 0 565.4,47.2 A13.6,3.6 0 0 0 558,44.2" fill="none" stroke="#d81020" stroke-width="2.4"/>
<path d="M557,42 L561.5,43.2 L558,46.2 Z" fill="#d81020"/>
<!-- 18 vleaf red ring + arrow -->
<path d="M569.3,47.2 A13.5,3.4 0 0 1 578,44.1" fill="none" stroke="#d81020" stroke-width="2.4"/>
<path d="M582.6,34 C585.3,37.5 587.6,43 587.6,48.5 C587.6,55 585.3,60.8 582.3,60.8 C579.3,60.8 577,55 577,48.5 C577,43 579.3,37.5 582.6,34 Z" fill="url(#vleaf)"/>
<path d="M569,47.2 A13.6,3.6 0 0 0 596.2,47.2 A13.6,3.6 0 0 0 588.8,44.2" fill="none" stroke="#d81020" stroke-width="2.4"/>
<path d="M587.8,42 L592.3,43.2 L588.8,46.2 Z" fill="#d81020"/>
<path d="M574.7,47.6 L580,53.6 L577.4,53.6 L577.4,61 L572.1,61 L572.1,53.6 L569.4,53.6 Z" fill="#f8b020" stroke="#3a2a10" stroke-width="0.8"/>
<!-- 19 sphere wire -->
<g fill="none" stroke="#111" stroke-width="1.2">
<circle cx="621" cy="46.9" r="8.5"/>
<ellipse cx="621.2" cy="42.7" rx="4.5" ry="2.6"/>
<path d="M613.4,46.2 C615.5,50 618,51.3 621,51.3 C624,51.3 626.5,50 628.6,46.2"/>
</g>
<!-- 20 red sphere wire -->
<clipPath id="rtop"><rect x="640" y="36" width="25" height="11.5"/></clipPath>
<clipPath id="rbot"><rect x="640" y="47.5" width="25" height="11"/></clipPath>
<g fill="none" stroke-width="1.2">
<circle cx="652" cy="46.9" r="8.5" stroke="#b84848" clip-path="url(#rtop)"/>
<circle cx="652" cy="46.9" r="8.5" stroke="#111" clip-path="url(#rbot)"/>
<ellipse cx="652.2" cy="42.7" rx="4.5" ry="2.6" stroke="#b85050"/>
<path d="M644.4,46.2 C646.5,50 649,51.3 652,51.3 C655,51.3 657.5,50 659.6,46.2" stroke="#b84040"/>
</g>
<!-- 21 geodesic -->
<g fill="none" stroke="#0a0a0a" stroke-width="1.2">
<circle cx="683" cy="46.9" r="8.6"/>
<path d="M677.5,40.5 L688.5,40.5 M675,44 L691,44 M677,44 L683,51.5 L689,44 M679.5,39 L675.2,50.5 M686.5,39 L690.8,50.5 M676.5,53 L683,48.5 L689.5,53 M683,38.3 L679,44 M683,38.3 L687,44 M683,51.5 L683,55.5"/>
</g>
<!-- 22 selected sphere -->
<rect x="707.5" y="32.5" width="30" height="30" rx="2" fill="#fbfcff" stroke="#4c5ca4"/>
<circle cx="722.5" cy="47.5" r="9.6" fill="url(#sph)"/>
<!-- 23 textured sphere -->
<circle cx="753.5" cy="47.6" r="9.5" fill="url(#tex)"/>
<circle cx="753.5" cy="47.6" r="9.1" fill="none" stroke="#1a4888" stroke-width="1.1"/>
<path d="M749,43 l2,1 l-1,2 z M756,42 l3,2 l-2,1 z M752,50 l3,1 l-1,2 l-2,-1 z" fill="#a8dcff" opacity="0.7"/>
<!-- 24 striped sphere -->
<g clip-path="url(#stc)">
<rect x="782" y="37" width="21" height="21" fill="#f4f4f4"/>
<rect x="782" y="38.2" width="21" height="1.6" fill="#111"/>
<rect x="782" y="41.2" width="21" height="1.6" fill="#111"/>
<rect x="782" y="44.2" width="21" height="1.6" fill="#111"/>
<rect x="782" y="47.2" width="21" height="1.6" fill="#111"/>
<rect x="782" y="50.2" width="21" height="1.6" fill="#111"/>
<rect x="782" y="53.2" width="21" height="1.6" fill="#111"/>
<rect x="782" y="56.2" width="21" height="1.6" fill="#111"/>
<circle cx="792.4" cy="47.6" r="9.6" fill="url(#shade)"/>
</g>
<!-- 25 rainbow sphere -->
<circle cx="823.2" cy="47.6" r="9.6" fill="url(#rainbow)"/>
<circle cx="823.2" cy="47.6" r="9.6" fill="url(#shade)"/>
<!-- 26 S|S -->
<path d="M858.2,38.7 L853.8,42.2 L853.8,45.5 L857.9,48.9 L857.9,51.6 L853.6,55.2" fill="none" stroke="#0a1650" stroke-width="1.9" stroke-dasharray="2,1"/>
<line x1="862.5" y1="36.3" x2="862.5" y2="58.5" stroke="#404048" stroke-width="0.9" stroke-dasharray="1.4,1"/>
<path d="M872.1,38.9 C869.5,41 867.3,43 867.1,44.8 C867.3,46.8 871.8,48.5 871.8,50.6 C871.5,52.8 869,54.5 867,56.2" fill="none" stroke="#1a2aa8" stroke-width="1.9"/>
<!-- 27 color squares -->
<rect x="893" y="39.2" width="7" height="6.5" fill="#e00010"/>
<rect x="902" y="39.2" width="7" height="6.5" fill="#f8d010"/>
<rect x="893" y="48" width="7" height="6.7" fill="#98cc30"/>
<rect x="902" y="48" width="7" height="6.7" fill="#5cc8d0"/>
</svg>

</body></html>
